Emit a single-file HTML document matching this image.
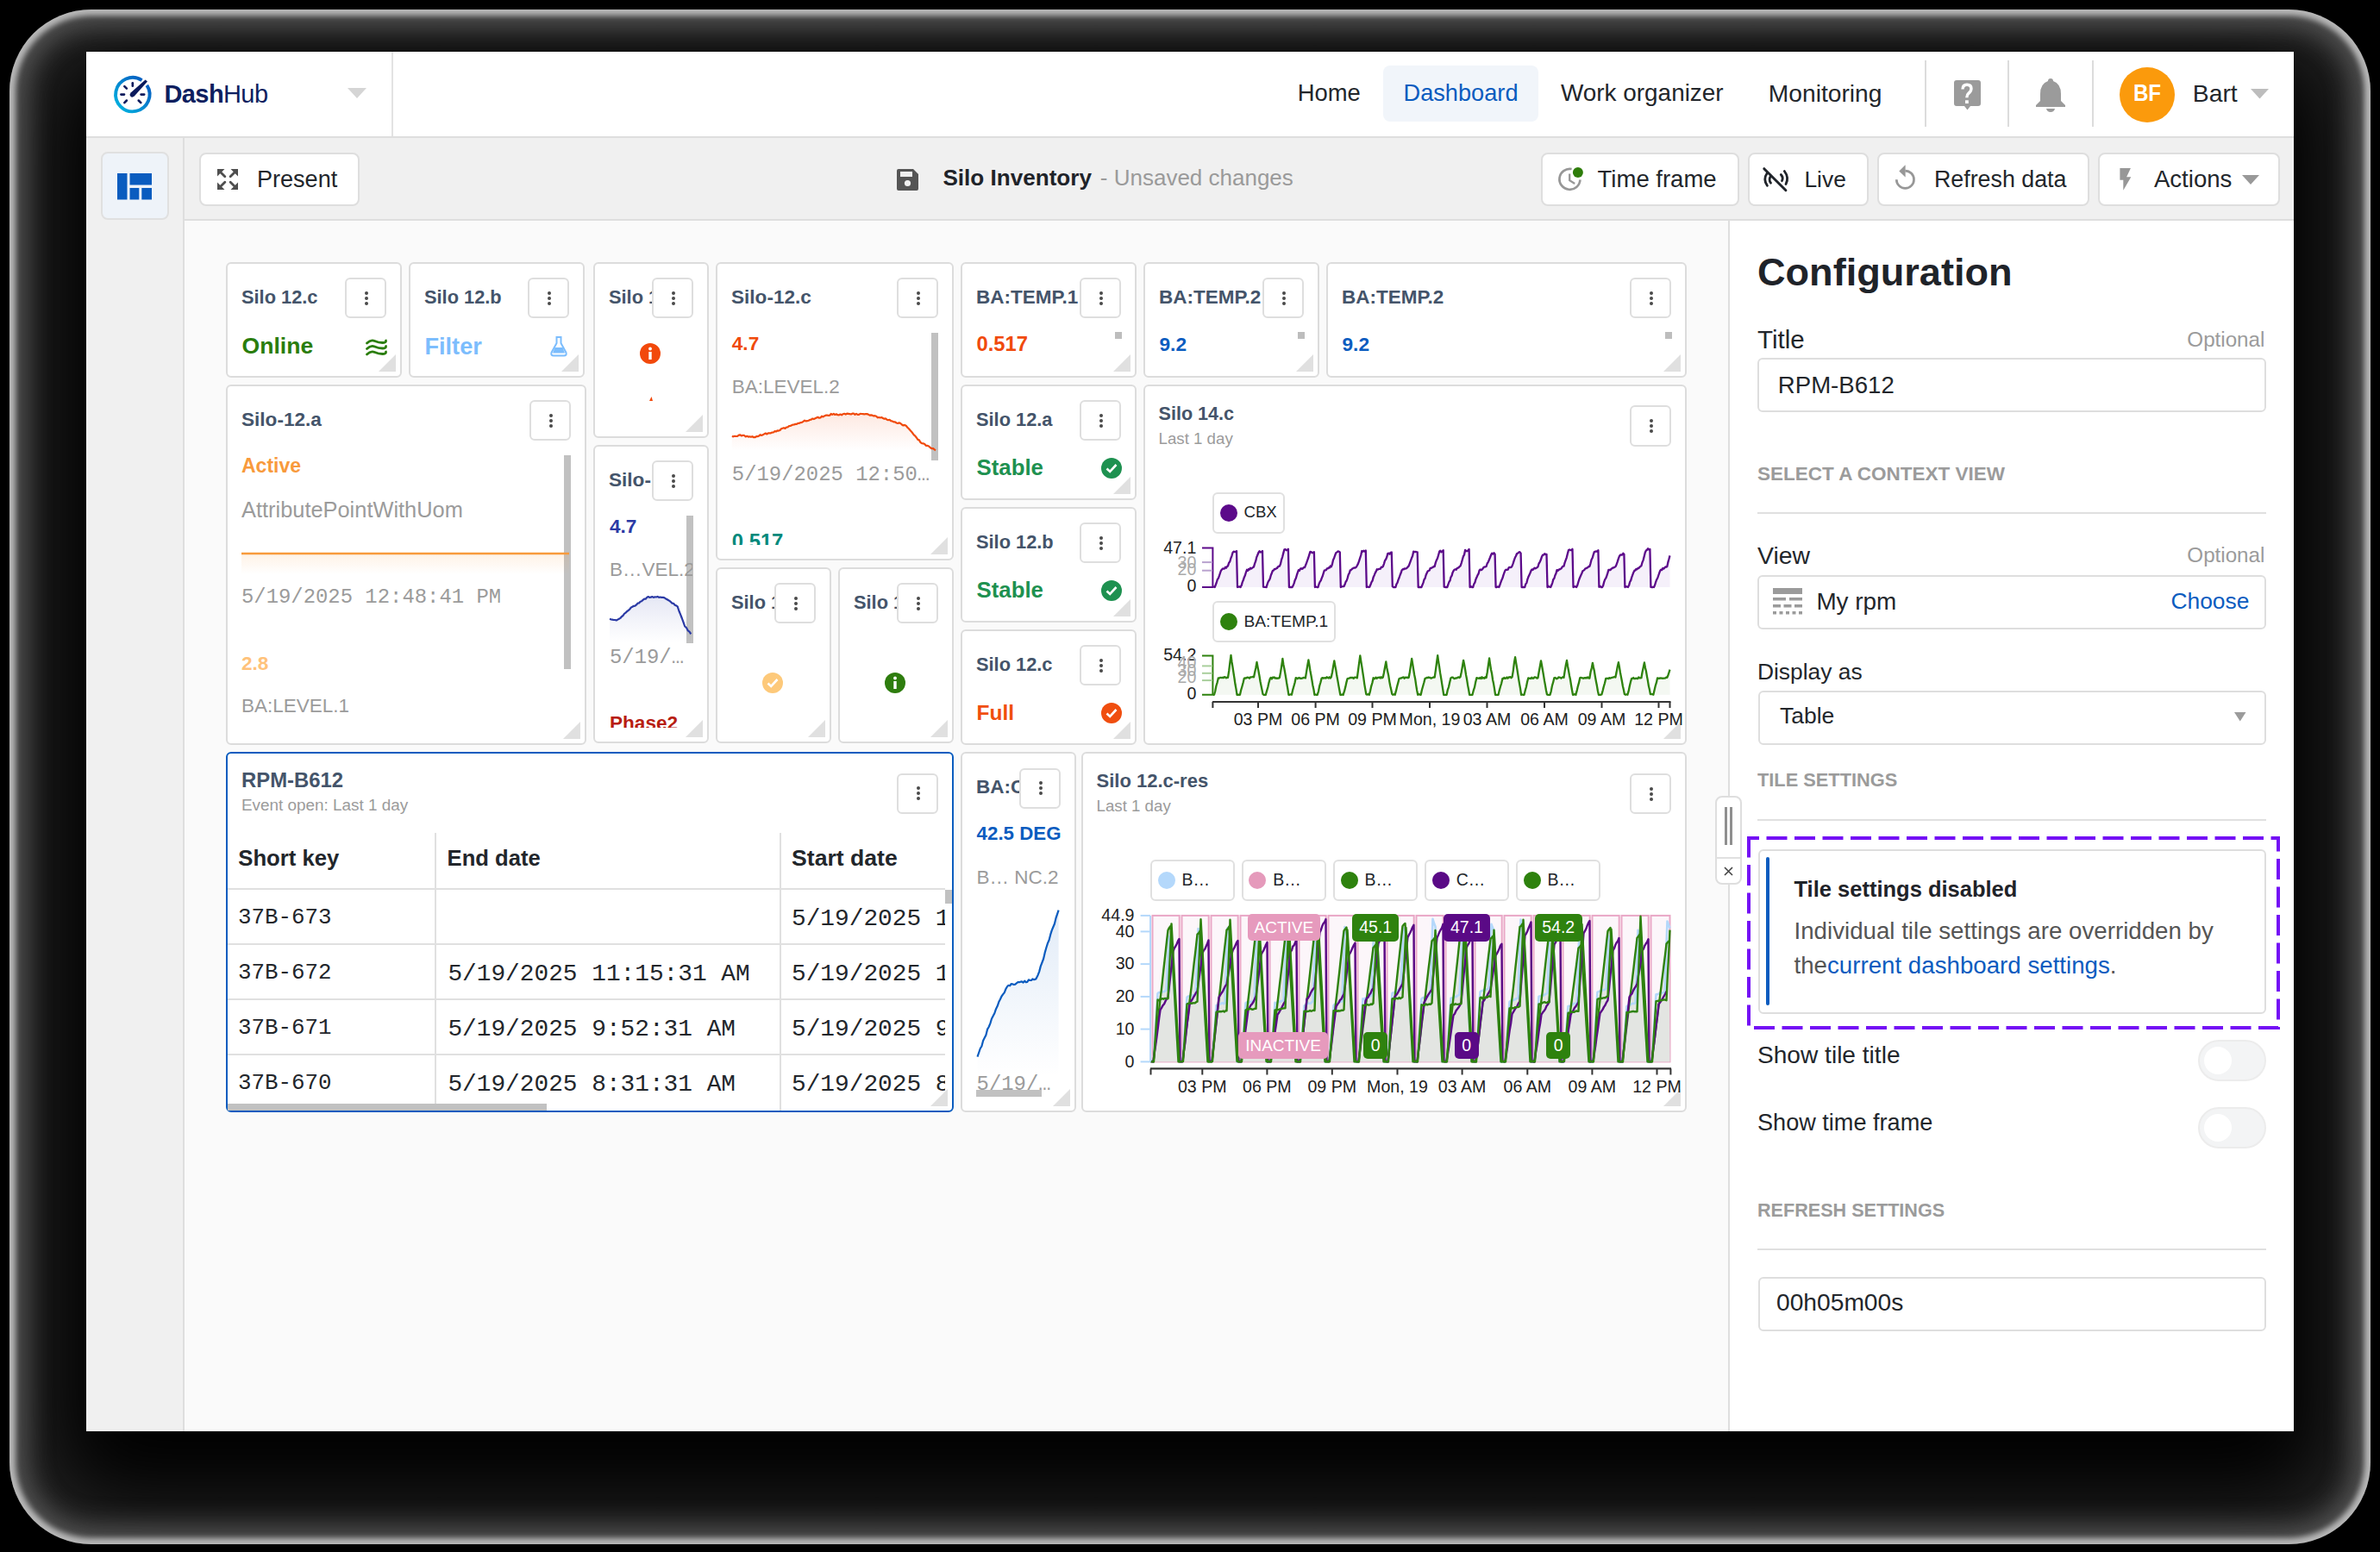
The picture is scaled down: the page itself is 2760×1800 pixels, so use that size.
<!DOCTYPE html><html><head><meta charset="utf-8"><style>
html,body{margin:0;padding:0;}
body{width:2760px;height:1800px;background:#000;position:relative;overflow:hidden;font-family:"Liberation Sans", sans-serif;}
.a{position:absolute;box-sizing:border-box;}
.t{position:absolute;line-height:1;white-space:nowrap;}
svg{overflow:visible}
</style></head><body>

<div class="a" style="left:11px;top:11px;width:2738px;height:1780px;border-radius:95px;background:#000;box-shadow:inset 0 0 6px 7px rgba(210,210,210,0.8), inset 0 0 28px 22px rgba(125,125,125,0.5), inset 0 0 110px 40px rgba(50,50,50,0.85);"></div>
<div class="a" style="left:100.0px;top:60.0px;width:2560.0px;height:1600.0px;background:#fff;"></div>
<div class="a" style="left:100.0px;top:158.0px;width:2560.0px;height:2.0px;background:#dedede;"></div>
<div class="a" style="left:454.0px;top:60.0px;width:2.0px;height:98.0px;background:#e3e3e3;"></div>
<div class="a" style="left:100.0px;top:160.0px;width:2560.0px;height:94.0px;background:#f0f0f0;"></div>
<div class="a" style="left:214.0px;top:254.0px;width:2446.0px;height:2.0px;background:#dedede;"></div>
<div class="a" style="left:100.0px;top:160.0px;width:112.0px;height:1500.0px;background:#f0f0f0;"></div>
<div class="a" style="left:212.0px;top:160.0px;width:2.0px;height:1500.0px;background:#dedede;"></div>
<div class="a" style="left:214.0px;top:256.0px;width:1790.0px;height:1404.0px;background:#fafafa;"></div>
<div class="a" style="left:2004.0px;top:256.0px;width:2.0px;height:1404.0px;background:#dedede;"></div>
<div class="a" style="left:2006.0px;top:256.0px;width:654.0px;height:1404.0px;background:#fff;"></div>
<svg class="a" style="left:0.0px;top:0.0px;pointer-events:none;" width="2760" height="1800" viewBox="0 0 2760 1800"><defs><linearGradient id="lg" x1="0" y1="1" x2="1" y2="0"><stop offset="0" stop-color="#00b8e2"/><stop offset="1" stop-color="#0552bd"/></linearGradient></defs><path d="M164.53,93.08 A19.7,19.7 0 1 0 170.32,98.87" fill="none" stroke="url(#lg)" stroke-width="3.9"/><line x1="153.80" y1="99.80" x2="153.80" y2="96.20" stroke="#0a1a5c" stroke-width="2.6" stroke-linecap="round"/><line x1="146.87" y1="102.67" x2="144.32" y2="100.12" stroke="#0a1a5c" stroke-width="2.6" stroke-linecap="round"/><line x1="144.00" y1="109.60" x2="140.40" y2="109.60" stroke="#0a1a5c" stroke-width="2.6" stroke-linecap="round"/><line x1="146.87" y1="116.53" x2="144.32" y2="119.08" stroke="#0a1a5c" stroke-width="2.6" stroke-linecap="round"/><line x1="160.73" y1="116.53" x2="163.28" y2="119.08" stroke="#0a1a5c" stroke-width="2.6" stroke-linecap="round"/><line x1="163.60" y1="109.60" x2="167.20" y2="109.60" stroke="#0a1a5c" stroke-width="2.6" stroke-linecap="round"/><path d="M151.6,107.6 L168.6,92.4 L171.0,94.6 L155.8,111.6 Q153.2,113.6 151.4,111.8 Q149.8,109.6 151.6,107.6 Z" fill="#0a1a5c"/></svg>
<div class="t" style="top:95.3px;font-size:29px;color:#0d1f5f;font-weight:400;font-family:'Liberation Sans', sans-serif;letter-spacing:-0.6px;left:190.5px;"><b style="font-weight:700">Dash</b>Hub</div>
<svg class="a" style="left:403.0px;top:102.0px;" width="22" height="13" viewBox="0 0 22 13"><path d="M0,0 L22,0 L11,12 Z" fill="#d5d5d5"/></svg>
<div class="a" style="left:1604.0px;top:76.0px;width:180.0px;height:65.0px;background:#f1f5fa;border-radius:8px;"></div>
<div class="t" style="top:94.1px;font-size:27.4px;color:#22262b;font-weight:400;font-family:'Liberation Sans', sans-serif;left:1504.7px;">Home</div>
<div class="t" style="top:94.2px;font-size:27.2px;color:#0b5cbf;font-weight:400;font-family:'Liberation Sans', sans-serif;left:1627.5px;">Dashboard</div>
<div class="t" style="top:93.9px;font-size:27.9px;color:#22262b;font-weight:400;font-family:'Liberation Sans', sans-serif;left:1810.0px;">Work organizer</div>
<div class="t" style="top:93.7px;font-size:28.2px;color:#22262b;font-weight:400;font-family:'Liberation Sans', sans-serif;left:2050.8px;">Monitoring</div>
<div class="a" style="left:2232.0px;top:70.0px;width:2.0px;height:77.0px;background:#dcdcdc;"></div>
<div class="a" style="left:2328.0px;top:70.0px;width:2.0px;height:77.0px;background:#dcdcdc;"></div>
<div class="a" style="left:2426.0px;top:70.0px;width:2.0px;height:77.0px;background:#dcdcdc;"></div>
<svg class="a" style="left:2266.0px;top:93.0px;" width="31" height="36" viewBox="0 0 31 36"><path d="M3,0 H28 Q31,0 31,3 V27 Q31,30 28,30 H19 L15.5,34.5 L12,30 H3 Q0,30 0,27 V3 Q0,0 3,0 Z" fill="#9b9b9b"/><path d="M10,10.6 Q10,5.2 15,5.2 Q20,5.2 20,9.8 Q20,12.8 17,15.2 Q14.8,17 14.8,20.2" fill="none" stroke="#fff" stroke-width="3.4"/><rect x="13" y="23.3" width="3.8" height="3.7" fill="#fff"/></svg>
<svg class="a" style="left:2360.0px;top:88.8px;" width="36" height="41" viewBox="0 0 36 41"><path d="M18,2 Q21,2 21,5 Q30,8 30,20 V28 L35,33 V35 H1 V33 L6,28 V20 Q6,8 15,5 Q15,2 18,2 Z" fill="#9b9b9b"/><path d="M13,37 H23 Q22,41 18,41 Q14,41 13,37 Z" fill="#9b9b9b"/></svg>
<div class="a" style="left:2458.0px;top:78.0px;width:64.0px;height:64.0px;background:#fb9a0c;border-radius:50%;"></div>
<div class="t" style="top:93.6px;font-size:28px;color:#fff;font-weight:700;font-family:'Liberation Sans', sans-serif;left:2190.0px;width:600px;text-align:center;transform:scaleX(0.86);">BF</div>
<div class="t" style="top:93.7px;font-size:28.3px;color:#22262b;font-weight:400;font-family:'Liberation Sans', sans-serif;left:2542.8px;">Bart</div>
<svg class="a" style="left:2610.0px;top:103.0px;" width="21" height="12" viewBox="0 0 21 12"><path d="M0,0 L21,0 L10.5,11.5 Z" fill="#bdbdbd"/></svg>
<div class="a" style="left:117.0px;top:176.0px;width:79.0px;height:79.0px;background:#eef3f9;border:2px solid #e0e0e0;border-radius:8px;"></div>
<svg class="a" style="left:136.0px;top:200.5px;" width="40" height="31" viewBox="0 0 40 31"><rect x="0" y="0" width="11.5" height="30.5" fill="#0a5cbf"/><rect x="14.5" y="0" width="25.5" height="13.5" fill="#0a5cbf"/><rect x="14.5" y="17" width="10.8" height="13.5" fill="#0a5cbf"/><rect x="28.3" y="17" width="11.7" height="13.5" fill="#0a5cbf"/></svg>
<div class="a" style="left:231.0px;top:177.0px;width:186.0px;height:62.0px;background:#fff;border:2px solid #dedede;border-radius:8px;"></div>
<svg class="a" style="left:252.0px;top:196.0px;" width="24" height="24" viewBox="0 0 24 24"><path d="M0,0 H8.5 L0,8.5 Z M24,0 H15.5 L24,8.5 Z M0,24 V15.5 L8.5,24 Z M24,24 V15.5 L15.5,24 Z" fill="#4f4f4f"/><path d="M3,3 L8.8,8.8 M21,3 L15.2,8.8 M3,21 L8.8,15.2 M21,21 L15.2,15.2" stroke="#4f4f4f" stroke-width="2.8" stroke-linecap="round"/></svg>
<div class="t" style="top:194.3px;font-size:27.1px;color:#22262b;font-weight:400;font-family:'Liberation Sans', sans-serif;left:297.9px;">Present</div>
<svg class="a" style="left:1040.0px;top:196.0px;" width="25" height="25" viewBox="0 0 25 25"><path d="M2,0 H19 L25,6 V23 Q25,25 23,25 H2 Q0,25 0,23 V2 Q0,0 2,0 Z" fill="#555"/><rect x="4" y="3" width="14" height="6" fill="#f0f0f0"/><circle cx="12.5" cy="16.5" r="3.6" fill="#f0f0f0"/></svg>
<div class="t" style="top:193.4px;font-size:26.1px;color:#1f2329;font-weight:700;font-family:'Liberation Sans', sans-serif;left:1093.4px;">Silo Inventory</div>
<div class="t" style="top:193.4px;font-size:26.0px;color:#9a9a9a;font-weight:400;font-family:'Liberation Sans', sans-serif;left:1275.8px;">- Unsaved changes</div>
<div class="a" style="left:1787.0px;top:177.0px;width:230.0px;height:62.0px;background:#fff;border:2px solid #dedede;border-radius:8px;"></div>
<svg class="a" style="left:1800.0px;top:185.0px;" width="50" height="45" viewBox="0 0 50 45"><path d="M22.6,11 A12,12 0 1 0 32.4,23.5" fill="none" stroke="#979797" stroke-width="2.7"/><path d="M20.2,16.5 V24.2 L26.2,28" fill="none" stroke="#979797" stroke-width="2.3"/><circle cx="29.9" cy="14.9" r="6" fill="#2e7d0a"/></svg>
<div class="t" style="top:194.3px;font-size:27.5px;color:#22262b;font-weight:400;font-family:'Liberation Sans', sans-serif;left:1852.6px;">Time frame</div>
<div class="a" style="left:2027.0px;top:177.0px;width:140.0px;height:62.0px;background:#fff;border:2px solid #dedede;border-radius:8px;"></div>
<svg class="a" style="left:2040.0px;top:185.0px;" width="50" height="45" viewBox="0 0 50 45"><path d="M9.4,15.5 Q4.2,23 9.4,30.3 M13.5,19 Q10.6,23.7 13.5,27.2 M25.3,17.5 Q28.4,21 26.5,24.7 M29.3,13.5 Q35,21 31,28.6" fill="none" stroke="#1f2329" stroke-width="2.8" stroke-linecap="round"/><line x1="5.8" y1="10.7" x2="30.9" y2="35.7" stroke="#1f2329" stroke-width="3" stroke-linecap="round"/></svg>
<div class="t" style="top:194.9px;font-size:26.4px;color:#22262b;font-weight:400;font-family:'Liberation Sans', sans-serif;left:2092.4px;">Live</div>
<div class="a" style="left:2177.0px;top:177.0px;width:246.0px;height:62.0px;background:#fff;border:2px solid #dedede;border-radius:8px;"></div>
<svg class="a" style="left:2190.0px;top:185.0px;" width="50" height="45" viewBox="0 0 50 45"><path d="M9.3,23.2 A10.1,10.1 0 1 0 19.4,13.1" fill="none" stroke="#979797" stroke-width="2.7"/><path d="M12.3,13.5 L19.6,6.3 L19.6,20.4 Z" fill="#979797"/></svg>
<div class="t" style="top:194.7px;font-size:26.8px;color:#22262b;font-weight:400;font-family:'Liberation Sans', sans-serif;left:2243.0px;">Refresh data</div>
<div class="a" style="left:2433.0px;top:177.0px;width:211.0px;height:62.0px;background:#fff;border:2px solid #dedede;border-radius:8px;"></div>
<svg class="a" style="left:2440.0px;top:185.0px;" width="50" height="45" viewBox="0 0 50 45"><path d="M18.4,10 H30.9 L26.1,20.3 H31.3 L22.3,35.7 V23.8 H18.4 Z" fill="#979797"/></svg>
<div class="t" style="top:194.3px;font-size:27.6px;color:#22262b;font-weight:400;font-family:'Liberation Sans', sans-serif;left:2497.9px;">Actions</div>
<svg class="a" style="left:2600.0px;top:203.0px;" width="20" height="12" viewBox="0 0 20 12"><path d="M0,0 L20,0 L10,11 Z" fill="#999"/></svg>
<div class="a" style="left:262.0px;top:304.0px;width:204.0px;height:134.0px;background:#fff;border:2px solid #dcdcdc;border-radius:6px;"></div>
<div class="t" style="top:334.0px;font-size:21.8px;color:#44546a;font-weight:700;font-family:'Liberation Sans', sans-serif;left:280.0px;">Silo 12.c</div>
<div class="t" style="top:388.3px;font-size:26.6px;color:#2a7d0c;font-weight:700;font-family:'Liberation Sans', sans-serif;left:280.5px;">Online</div>
<svg class="a" style="left:424.0px;top:392.5px;" width="25" height="21" viewBox="0 0 25 21"><path d="M1.5,5 Q6,0.5 10.5,2.5 T19.5,4.5 T23.5,2" fill="none" stroke="#2a7d0c" stroke-width="2.8" stroke-linecap="round"/><path d="M1.5,11.5 Q6,7 10.5,9 T19.5,11 T23.5,8.5" fill="none" stroke="#2a7d0c" stroke-width="2.8" stroke-linecap="round"/><path d="M1.5,18 Q6,13.5 10.5,15.5 T19.5,17.5 T23.5,15" fill="none" stroke="#2a7d0c" stroke-width="2.8" stroke-linecap="round"/></svg>
<div class="a" style="left:400.4px;top:322.2px;width:47.6px;height:47.3px;background:#fff;border:2px solid #dedede;border-radius:6px;"></div>
<svg class="a" style="left:421.8px;top:336.9px;" width="6" height="18" viewBox="0 0 6 18"><circle cx="3" cy="3" r="2" fill="#4a4a4a"/><circle cx="3" cy="9" r="2" fill="#4a4a4a"/><circle cx="3" cy="15" r="2" fill="#4a4a4a"/></svg>
<svg class="a" style="left:439.0px;top:411.0px;" width="20" height="20" viewBox="0 0 20 20"><path d="M20,0 L20,20 L0,20 Z" fill="#e0e0e0"/></svg>
<div class="a" style="left:474.0px;top:304.0px;width:204.0px;height:134.0px;background:#fff;border:2px solid #dcdcdc;border-radius:6px;"></div>
<div class="t" style="top:334.0px;font-size:21.8px;color:#44546a;font-weight:700;font-family:'Liberation Sans', sans-serif;left:492.0px;">Silo 12.b</div>
<div class="t" style="top:388.0px;font-size:27.1px;color:#7cbdfd;font-weight:700;font-family:'Liberation Sans', sans-serif;left:492.5px;">Filter</div>
<svg class="a" style="left:638.0px;top:389.5px;" width="20" height="24" viewBox="0 0 20 24"><path d="M6.5,1 H13.5 M7.5,1.5 V8 L1.5,19 Q0.5,22.5 4,22.5 H16 Q19.5,22.5 18.5,19 L12.5,8 V1.5" fill="none" stroke="#7cbdfd" stroke-width="2"/><path d="M5.5,13 H14.5 L17,19.5 H3 Z" fill="#7cbdfd"/></svg>
<div class="a" style="left:612.4px;top:322.2px;width:47.6px;height:47.3px;background:#fff;border:2px solid #dedede;border-radius:6px;"></div>
<svg class="a" style="left:633.8px;top:336.9px;" width="6" height="18" viewBox="0 0 6 18"><circle cx="3" cy="3" r="2" fill="#4a4a4a"/><circle cx="3" cy="9" r="2" fill="#4a4a4a"/><circle cx="3" cy="15" r="2" fill="#4a4a4a"/></svg>
<svg class="a" style="left:651.0px;top:411.0px;" width="20" height="20" viewBox="0 0 20 20"><path d="M20,0 L20,20 L0,20 Z" fill="#e0e0e0"/></svg>
<div class="a" style="left:688.0px;top:304.0px;width:134.0px;height:204.0px;background:#fff;border:2px solid #dcdcdc;border-radius:6px;"></div>
<div class="t" style="top:334.0px;font-size:21.8px;color:#44546a;font-weight:700;font-family:'Liberation Sans', sans-serif;left:706.0px;">Silo 12.c</div>
<div class="a" style="left:756.4px;top:322.2px;width:47.6px;height:47.3px;background:#fff;border:2px solid #dedede;border-radius:6px;"></div>
<svg class="a" style="left:777.8px;top:336.9px;" width="6" height="18" viewBox="0 0 6 18"><circle cx="3" cy="3" r="2" fill="#4a4a4a"/><circle cx="3" cy="9" r="2" fill="#4a4a4a"/><circle cx="3" cy="15" r="2" fill="#4a4a4a"/></svg>
<svg class="a" style="left:741.9px;top:397.9px;" width="24" height="24" viewBox="0 0 24 24"><circle cx="12" cy="12" r="12" fill="#f2490b"/><circle cx="12" cy="6.5" r="1.9" fill="#fff"/><rect x="10.3" y="10" width="3.4" height="9" fill="#fff"/></svg>
<svg class="a" style="left:753.0px;top:460.0px;" width="4" height="5" viewBox="0 0 4 5"><path d="M0,5 L2.5,0 L4,5 Z" fill="#f2490b"/></svg>
<svg class="a" style="left:795.0px;top:481.0px;" width="20" height="20" viewBox="0 0 20 20"><path d="M20,0 L20,20 L0,20 Z" fill="#e0e0e0"/></svg>
<div class="a" style="left:830.0px;top:304.0px;width:276.0px;height:346.0px;background:#fff;border:2px solid #dcdcdc;border-radius:6px;"></div>
<div class="t" style="top:333.6px;font-size:22.6px;color:#44546a;font-weight:700;font-family:'Liberation Sans', sans-serif;left:848.0px;">Silo-12.c</div>
<div class="t" style="top:387.8px;font-size:22.6px;color:#f04a0c;font-weight:700;font-family:'Liberation Sans', sans-serif;left:848.8px;">4.7</div>
<div class="t" style="top:438.4px;font-size:22.5px;color:#9b9b9b;font-weight:400;font-family:'Liberation Sans', sans-serif;left:848.8px;">BA:LEVEL.2</div>
<div class="a" style="left:1080.0px;top:386.0px;width:8.0px;height:148.0px;background:#c1c1c1;"></div>
<svg class="a" style="left:0.0px;top:0.0px;pointer-events:none;" width="2760" height="1800" viewBox="0 0 2760 1800"><defs><linearGradient id="s1" x1="0" y1="0" x2="0" y2="1"><stop offset="0" stop-color="#f04a0c" stop-opacity="0.12"/><stop offset="1" stop-color="#f04a0c" stop-opacity="0.0"/></linearGradient></defs><path d="M848.8,506.0 L850.4,506.3 L852.0,505.8 L853.6,506.0 L855.2,505.8 L856.8,504.7 L858.4,504.4 L860.0,505.5 L861.6,504.8 L863.1,505.0 L864.7,506.5 L866.2,505.8 L867.8,506.6 L869.3,506.3 L870.9,506.8 L872.4,506.2 L874.0,507.2 L875.5,507.2 L877.1,506.2 L878.6,506.2 L880.1,505.6 L881.6,504.2 L883.2,504.9 L884.7,504.3 L886.2,503.4 L887.8,502.5 L889.3,503.5 L890.8,502.4 L892.4,502.4 L893.9,502.3 L895.4,501.6 L896.9,501.5 L898.5,500.2 L900.0,500.5 L901.5,499.4 L903.0,499.6 L904.5,499.0 L906.0,497.2 L907.5,496.7 L909.0,496.2 L910.5,496.9 L912.0,495.5 L913.5,495.3 L915.0,494.2 L916.5,494.0 L918.0,493.2 L919.5,492.6 L921.0,492.4 L922.5,491.9 L924.0,491.8 L925.5,490.9 L927.0,490.8 L928.5,490.1 L930.0,489.8 L931.5,488.9 L933.1,487.7 L934.6,488.4 L936.1,488.2 L937.7,487.8 L939.2,486.8 L940.7,486.7 L942.3,485.5 L943.8,486.1 L945.3,485.3 L946.9,484.5 L948.4,483.8 L949.9,484.7 L951.4,484.5 L953.0,482.7 L954.5,483.4 L956.0,482.4 L957.6,481.7 L959.1,481.5 L960.6,481.9 L962.2,481.7 L963.7,480.0 L965.2,480.9 L966.8,479.9 L968.3,481.0 L969.9,480.3 L971.4,481.2 L973.0,481.3 L974.5,480.5 L976.1,481.3 L977.6,480.2 L979.1,479.8 L980.7,480.6 L982.2,479.6 L983.8,479.9 L985.3,480.2 L986.9,480.5 L988.4,479.7 L990.0,479.5 L991.5,480.8 L993.0,479.9 L994.6,480.9 L996.1,480.8 L997.7,479.9 L999.2,480.0 L1000.8,480.1 L1002.3,480.3 L1003.9,480.2 L1005.4,480.1 L1006.9,480.6 L1008.5,481.6 L1010.0,481.3 L1011.5,481.6 L1013.1,482.5 L1014.6,482.2 L1016.2,482.7 L1017.7,484.3 L1019.2,484.0 L1020.8,484.5 L1022.3,484.0 L1023.9,485.1 L1025.4,485.8 L1026.9,485.4 L1028.5,486.7 L1030.0,487.2 L1031.6,486.8 L1033.2,488.2 L1034.8,488.5 L1036.4,489.4 L1038.0,489.4 L1039.6,490.5 L1041.1,491.0 L1042.7,490.4 L1044.3,491.0 L1045.9,492.5 L1047.5,493.5 L1049.1,492.9 L1050.7,493.7 L1052.2,495.7 L1053.7,497.0 L1055.3,498.8 L1056.8,500.4 L1058.3,502.3 L1059.8,504.4 L1061.3,505.6 L1062.8,507.5 L1064.4,509.9 L1065.9,510.4 L1067.4,513.0 L1069.0,514.1 L1070.6,514.3 L1072.2,515.0 L1073.8,516.8 L1075.4,516.8 L1077.0,517.5 L1078.6,518.8 L1080.2,520.1 L1081.8,520.0 L1083.4,521.2 L1085.0,522.3 L1085.0,523.0 L848.8,523.0 Z" fill="url(#s1)" stroke="none"/><path d="M848.8,506.0 L850.4,506.3 L852.0,505.8 L853.6,506.0 L855.2,505.8 L856.8,504.7 L858.4,504.4 L860.0,505.5 L861.6,504.8 L863.1,505.0 L864.7,506.5 L866.2,505.8 L867.8,506.6 L869.3,506.3 L870.9,506.8 L872.4,506.2 L874.0,507.2 L875.5,507.2 L877.1,506.2 L878.6,506.2 L880.1,505.6 L881.6,504.2 L883.2,504.9 L884.7,504.3 L886.2,503.4 L887.8,502.5 L889.3,503.5 L890.8,502.4 L892.4,502.4 L893.9,502.3 L895.4,501.6 L896.9,501.5 L898.5,500.2 L900.0,500.5 L901.5,499.4 L903.0,499.6 L904.5,499.0 L906.0,497.2 L907.5,496.7 L909.0,496.2 L910.5,496.9 L912.0,495.5 L913.5,495.3 L915.0,494.2 L916.5,494.0 L918.0,493.2 L919.5,492.6 L921.0,492.4 L922.5,491.9 L924.0,491.8 L925.5,490.9 L927.0,490.8 L928.5,490.1 L930.0,489.8 L931.5,488.9 L933.1,487.7 L934.6,488.4 L936.1,488.2 L937.7,487.8 L939.2,486.8 L940.7,486.7 L942.3,485.5 L943.8,486.1 L945.3,485.3 L946.9,484.5 L948.4,483.8 L949.9,484.7 L951.4,484.5 L953.0,482.7 L954.5,483.4 L956.0,482.4 L957.6,481.7 L959.1,481.5 L960.6,481.9 L962.2,481.7 L963.7,480.0 L965.2,480.9 L966.8,479.9 L968.3,481.0 L969.9,480.3 L971.4,481.2 L973.0,481.3 L974.5,480.5 L976.1,481.3 L977.6,480.2 L979.1,479.8 L980.7,480.6 L982.2,479.6 L983.8,479.9 L985.3,480.2 L986.9,480.5 L988.4,479.7 L990.0,479.5 L991.5,480.8 L993.0,479.9 L994.6,480.9 L996.1,480.8 L997.7,479.9 L999.2,480.0 L1000.8,480.1 L1002.3,480.3 L1003.9,480.2 L1005.4,480.1 L1006.9,480.6 L1008.5,481.6 L1010.0,481.3 L1011.5,481.6 L1013.1,482.5 L1014.6,482.2 L1016.2,482.7 L1017.7,484.3 L1019.2,484.0 L1020.8,484.5 L1022.3,484.0 L1023.9,485.1 L1025.4,485.8 L1026.9,485.4 L1028.5,486.7 L1030.0,487.2 L1031.6,486.8 L1033.2,488.2 L1034.8,488.5 L1036.4,489.4 L1038.0,489.4 L1039.6,490.5 L1041.1,491.0 L1042.7,490.4 L1044.3,491.0 L1045.9,492.5 L1047.5,493.5 L1049.1,492.9 L1050.7,493.7 L1052.2,495.7 L1053.7,497.0 L1055.3,498.8 L1056.8,500.4 L1058.3,502.3 L1059.8,504.4 L1061.3,505.6 L1062.8,507.5 L1064.4,509.9 L1065.9,510.4 L1067.4,513.0 L1069.0,514.1 L1070.6,514.3 L1072.2,515.0 L1073.8,516.8 L1075.4,516.8 L1077.0,517.5 L1078.6,518.8 L1080.2,520.1 L1081.8,520.0 L1083.4,521.2 L1085.0,522.3" fill="none" stroke="#f04a0c" stroke-width="2.2" stroke-linejoin="round"/></svg>
<div class="t" style="top:539.4px;font-size:23.9px;color:#9b9b9b;font-weight:400;font-family:'Liberation Mono', monospace;left:848.8px;">5/19/2025 12:50…</div>
<div class="a" style="left:840px;top:600px;width:240px;height:31.5px;overflow:hidden;">
<div class="t" style="left:8.8px;top:15.5px;font-size:23.8px;color:#00897b;font-weight:700;">0.517</div>
</div>
<div class="a" style="left:1040.4px;top:322.2px;width:47.6px;height:47.3px;background:#fff;border:2px solid #dedede;border-radius:6px;"></div>
<svg class="a" style="left:1061.8px;top:336.9px;" width="6" height="18" viewBox="0 0 6 18"><circle cx="3" cy="3" r="2" fill="#4a4a4a"/><circle cx="3" cy="9" r="2" fill="#4a4a4a"/><circle cx="3" cy="15" r="2" fill="#4a4a4a"/></svg>
<svg class="a" style="left:1079.0px;top:623.0px;" width="20" height="20" viewBox="0 0 20 20"><path d="M20,0 L20,20 L0,20 Z" fill="#e0e0e0"/></svg>
<div class="a" style="left:1114.0px;top:304.0px;width:204.0px;height:134.0px;background:#fff;border:2px solid #dcdcdc;border-radius:6px;"></div>
<div class="t" style="top:333.7px;font-size:22.5px;color:#44546a;font-weight:700;font-family:'Liberation Sans', sans-serif;left:1132.0px;">BA:TEMP.1</div>
<div class="t" style="top:387.0px;font-size:23.8px;color:#f04a0c;font-weight:700;font-family:'Liberation Sans', sans-serif;left:1132.5px;">0.517</div>
<div class="a" style="left:1293.0px;top:385.0px;width:8.0px;height:8.0px;background:#bdbdbd;"></div>
<div class="a" style="left:1252.4px;top:322.2px;width:47.6px;height:47.3px;background:#fff;border:2px solid #dedede;border-radius:6px;"></div>
<svg class="a" style="left:1273.8px;top:336.9px;" width="6" height="18" viewBox="0 0 6 18"><circle cx="3" cy="3" r="2" fill="#4a4a4a"/><circle cx="3" cy="9" r="2" fill="#4a4a4a"/><circle cx="3" cy="15" r="2" fill="#4a4a4a"/></svg>
<svg class="a" style="left:1291.0px;top:411.0px;" width="20" height="20" viewBox="0 0 20 20"><path d="M20,0 L20,20 L0,20 Z" fill="#e0e0e0"/></svg>
<div class="a" style="left:1326.0px;top:304.0px;width:204.0px;height:134.0px;background:#fff;border:2px solid #dcdcdc;border-radius:6px;"></div>
<div class="t" style="top:333.7px;font-size:22.5px;color:#44546a;font-weight:700;font-family:'Liberation Sans', sans-serif;left:1344.0px;">BA:TEMP.2</div>
<div class="t" style="top:387.6px;font-size:22.7px;color:#0b5cbf;font-weight:700;font-family:'Liberation Sans', sans-serif;left:1344.5px;">9.2</div>
<div class="a" style="left:1505.0px;top:385.0px;width:8.0px;height:8.0px;background:#bdbdbd;"></div>
<div class="a" style="left:1464.4px;top:322.2px;width:47.6px;height:47.3px;background:#fff;border:2px solid #dedede;border-radius:6px;"></div>
<svg class="a" style="left:1485.8px;top:336.9px;" width="6" height="18" viewBox="0 0 6 18"><circle cx="3" cy="3" r="2" fill="#4a4a4a"/><circle cx="3" cy="9" r="2" fill="#4a4a4a"/><circle cx="3" cy="15" r="2" fill="#4a4a4a"/></svg>
<svg class="a" style="left:1503.0px;top:411.0px;" width="20" height="20" viewBox="0 0 20 20"><path d="M20,0 L20,20 L0,20 Z" fill="#e0e0e0"/></svg>
<div class="a" style="left:1538.0px;top:304.0px;width:418.0px;height:134.0px;background:#fff;border:2px solid #dcdcdc;border-radius:6px;"></div>
<div class="t" style="top:333.7px;font-size:22.5px;color:#44546a;font-weight:700;font-family:'Liberation Sans', sans-serif;left:1556.0px;">BA:TEMP.2</div>
<div class="t" style="top:387.6px;font-size:22.7px;color:#0b5cbf;font-weight:700;font-family:'Liberation Sans', sans-serif;left:1556.5px;">9.2</div>
<div class="a" style="left:1931.0px;top:385.0px;width:8.0px;height:8.0px;background:#bdbdbd;"></div>
<div class="a" style="left:1890.4px;top:322.2px;width:47.6px;height:47.3px;background:#fff;border:2px solid #dedede;border-radius:6px;"></div>
<svg class="a" style="left:1911.8px;top:336.9px;" width="6" height="18" viewBox="0 0 6 18"><circle cx="3" cy="3" r="2" fill="#4a4a4a"/><circle cx="3" cy="9" r="2" fill="#4a4a4a"/><circle cx="3" cy="15" r="2" fill="#4a4a4a"/></svg>
<svg class="a" style="left:1929.0px;top:411.0px;" width="20" height="20" viewBox="0 0 20 20"><path d="M20,0 L20,20 L0,20 Z" fill="#e0e0e0"/></svg>
<div class="a" style="left:262.0px;top:446.0px;width:418.0px;height:418.0px;background:#fff;border:2px solid #dcdcdc;border-radius:6px;"></div>
<div class="t" style="top:475.6px;font-size:22.6px;color:#44546a;font-weight:700;font-family:'Liberation Sans', sans-serif;left:280.0px;">Silo-12.a</div>
<div class="a" style="left:654.0px;top:528.0px;width:8.0px;height:248.0px;background:#c1c1c1;"></div>
<div class="t" style="top:529.4px;font-size:23.0px;color:#f89a3c;font-weight:700;font-family:'Liberation Sans', sans-serif;left:280.0px;">Active</div>
<div class="t" style="top:578.7px;font-size:25.4px;color:#9b9b9b;font-weight:400;font-family:'Liberation Sans', sans-serif;left:280.0px;">AttributePointWithUom</div>
<svg class="a" style="left:0.0px;top:0.0px;pointer-events:none;" width="2760" height="1800" viewBox="0 0 2760 1800"><defs><linearGradient id="ag" x1="0" y1="0" x2="0" y2="1"><stop offset="0" stop-color="#f89a3c" stop-opacity="0.13"/><stop offset="1" stop-color="#f89a3c" stop-opacity="0"/></linearGradient></defs><rect x="280" y="642" width="380" height="24" fill="url(#ag)"/><line x1="280" y1="642" x2="660" y2="642" stroke="#f89a3c" stroke-width="2.4"/></svg>
<div class="t" style="top:681.1px;font-size:23.9px;color:#9b9b9b;font-weight:400;font-family:'Liberation Mono', monospace;left:280.0px;">5/19/2025 12:48:41 PM</div>
<div class="t" style="top:758.5px;font-size:22.6px;color:#ffc27a;font-weight:700;font-family:'Liberation Sans', sans-serif;left:280.0px;">2.8</div>
<div class="t" style="top:807.9px;font-size:22.5px;color:#9b9b9b;font-weight:400;font-family:'Liberation Sans', sans-serif;left:280.0px;">BA:LEVEL.1</div>
<div class="a" style="left:614.4px;top:464.2px;width:47.6px;height:47.3px;background:#fff;border:2px solid #dedede;border-radius:6px;"></div>
<svg class="a" style="left:635.8px;top:478.9px;" width="6" height="18" viewBox="0 0 6 18"><circle cx="3" cy="3" r="2" fill="#4a4a4a"/><circle cx="3" cy="9" r="2" fill="#4a4a4a"/><circle cx="3" cy="15" r="2" fill="#4a4a4a"/></svg>
<svg class="a" style="left:653.0px;top:837.0px;" width="20" height="20" viewBox="0 0 20 20"><path d="M20,0 L20,20 L0,20 Z" fill="#e0e0e0"/></svg>
<div class="a" style="left:688.0px;top:516.0px;width:134.0px;height:346.0px;background:#fff;border:2px solid #dcdcdc;border-radius:6px;"></div>
<div class="t" style="top:545.6px;font-size:22.6px;color:#44546a;font-weight:700;font-family:'Liberation Sans', sans-serif;left:706.0px;">Silo-12.b</div>
<div class="a" style="left:795.6px;top:598.0px;width:8.0px;height:147.5px;background:#c1c1c1;"></div>
<div class="t" style="top:600.1px;font-size:22.6px;color:#2b3aa5;font-weight:700;font-family:'Liberation Sans', sans-serif;left:707.0px;">4.7</div>
<div class="t" style="top:650.2px;font-size:22.5px;color:#9b9b9b;font-weight:400;font-family:'Liberation Sans', sans-serif;left:707.0px;width:96px;overflow:hidden;white-space:nowrap;">B…VEL.2</div>
<svg class="a" style="left:0.0px;top:0.0px;pointer-events:none;" width="2760" height="1800" viewBox="0 0 2760 1800"><defs><linearGradient id="s2" x1="0" y1="0" x2="0" y2="1"><stop offset="0" stop-color="#2b3aa5" stop-opacity="0.12"/><stop offset="1" stop-color="#2b3aa5" stop-opacity="0.0"/></linearGradient></defs><path d="M707.0,717.9 L708.5,718.3 L710.1,718.6 L711.6,719.0 L713.2,719.0 L714.8,719.5 L716.3,718.6 L717.9,717.7 L719.4,716.9 L721.0,715.1 L722.5,714.0 L724.1,711.6 L725.7,710.6 L727.2,709.0 L728.8,707.9 L730.3,706.5 L731.9,704.4 L733.4,703.7 L734.9,702.8 L736.5,702.6 L738.0,701.4 L739.5,699.7 L741.0,699.5 L742.6,697.7 L744.1,697.3 L745.6,695.8 L747.1,694.6 L748.7,694.7 L750.2,692.9 L751.7,692.0 L753.2,692.9 L754.8,692.7 L756.3,692.0 L757.9,692.9 L759.4,692.3 L761.0,692.5 L762.5,691.9 L764.1,692.8 L765.6,692.5 L767.2,692.9 L768.7,692.8 L770.2,693.1 L771.8,694.2 L773.3,695.0 L774.9,696.0 L776.4,696.9 L778.0,698.2 L779.5,699.6 L781.1,699.9 L782.6,701.8 L784.2,702.4 L785.7,703.4 L787.4,708.5 L789.1,712.7 L790.8,717.0 L792.5,721.7 L794.2,726.5 L796.0,728.0 L797.8,731.4 L799.5,732.6 L801.3,735.4 L801.3,745.0 L707.0,745.0 Z" fill="url(#s2)" stroke="none"/><path d="M707.0,717.9 L708.5,718.3 L710.1,718.6 L711.6,719.0 L713.2,719.0 L714.8,719.5 L716.3,718.6 L717.9,717.7 L719.4,716.9 L721.0,715.1 L722.5,714.0 L724.1,711.6 L725.7,710.6 L727.2,709.0 L728.8,707.9 L730.3,706.5 L731.9,704.4 L733.4,703.7 L734.9,702.8 L736.5,702.6 L738.0,701.4 L739.5,699.7 L741.0,699.5 L742.6,697.7 L744.1,697.3 L745.6,695.8 L747.1,694.6 L748.7,694.7 L750.2,692.9 L751.7,692.0 L753.2,692.9 L754.8,692.7 L756.3,692.0 L757.9,692.9 L759.4,692.3 L761.0,692.5 L762.5,691.9 L764.1,692.8 L765.6,692.5 L767.2,692.9 L768.7,692.8 L770.2,693.1 L771.8,694.2 L773.3,695.0 L774.9,696.0 L776.4,696.9 L778.0,698.2 L779.5,699.6 L781.1,699.9 L782.6,701.8 L784.2,702.4 L785.7,703.4 L787.4,708.5 L789.1,712.7 L790.8,717.0 L792.5,721.7 L794.2,726.5 L796.0,728.0 L797.8,731.4 L799.5,732.6 L801.3,735.4" fill="none" stroke="#2b3aa5" stroke-width="2.2" stroke-linejoin="round"/></svg>
<div class="t" style="top:751.1px;font-size:23.9px;color:#9b9b9b;font-weight:400;font-family:'Liberation Mono', monospace;left:707.0px;">5/19/…</div>
<div class="a" style="left:700px;top:820px;width:100px;height:24px;overflow:hidden;">
<div class="t" style="left:7px;top:7.9px;font-size:22.6px;color:#b81d12;font-weight:700;">Phase2</div>
</div>
<div class="a" style="left:756.4px;top:534.2px;width:47.6px;height:47.3px;background:#fff;border:2px solid #dedede;border-radius:6px;"></div>
<svg class="a" style="left:777.8px;top:548.9px;" width="6" height="18" viewBox="0 0 6 18"><circle cx="3" cy="3" r="2" fill="#4a4a4a"/><circle cx="3" cy="9" r="2" fill="#4a4a4a"/><circle cx="3" cy="15" r="2" fill="#4a4a4a"/></svg>
<svg class="a" style="left:795.0px;top:835.0px;" width="20" height="20" viewBox="0 0 20 20"><path d="M20,0 L20,20 L0,20 Z" fill="#e0e0e0"/></svg>
<div class="a" style="left:830.0px;top:658.0px;width:134.0px;height:204.0px;background:#fff;border:2px solid #dcdcdc;border-radius:6px;"></div>
<div class="t" style="top:688.0px;font-size:21.8px;color:#44546a;font-weight:700;font-family:'Liberation Sans', sans-serif;left:848.0px;">Silo 12.a</div>
<div class="a" style="left:898.4px;top:676.2px;width:47.6px;height:47.3px;background:#fff;border:2px solid #dedede;border-radius:6px;"></div>
<svg class="a" style="left:919.8px;top:690.9px;" width="6" height="18" viewBox="0 0 6 18"><circle cx="3" cy="3" r="2" fill="#4a4a4a"/><circle cx="3" cy="9" r="2" fill="#4a4a4a"/><circle cx="3" cy="15" r="2" fill="#4a4a4a"/></svg>
<svg class="a" style="left:884.0px;top:780.0px;" width="24" height="24" viewBox="0 0 24 24"><circle cx="12" cy="12" r="12" fill="#fdc97a"/><path d="M6.5,12.5 L10.2,16 L17.5,8" fill="none" stroke="#fff" stroke-width="2.6"/></svg>
<svg class="a" style="left:937.0px;top:835.0px;" width="20" height="20" viewBox="0 0 20 20"><path d="M20,0 L20,20 L0,20 Z" fill="#e0e0e0"/></svg>
<div class="a" style="left:972.0px;top:658.0px;width:134.0px;height:204.0px;background:#fff;border:2px solid #dcdcdc;border-radius:6px;"></div>
<div class="t" style="top:688.0px;font-size:21.8px;color:#44546a;font-weight:700;font-family:'Liberation Sans', sans-serif;left:990.0px;">Silo 12.b</div>
<div class="a" style="left:1040.4px;top:676.2px;width:47.6px;height:47.3px;background:#fff;border:2px solid #dedede;border-radius:6px;"></div>
<svg class="a" style="left:1061.8px;top:690.9px;" width="6" height="18" viewBox="0 0 6 18"><circle cx="3" cy="3" r="2" fill="#4a4a4a"/><circle cx="3" cy="9" r="2" fill="#4a4a4a"/><circle cx="3" cy="15" r="2" fill="#4a4a4a"/></svg>
<svg class="a" style="left:1026.0px;top:780.0px;" width="24" height="24" viewBox="0 0 24 24"><circle cx="12" cy="12" r="12" fill="#2e7d0e"/><circle cx="12" cy="6.5" r="1.9" fill="#fff"/><rect x="10.3" y="10" width="3.4" height="9" fill="#fff"/></svg>
<svg class="a" style="left:1079.0px;top:835.0px;" width="20" height="20" viewBox="0 0 20 20"><path d="M20,0 L20,20 L0,20 Z" fill="#e0e0e0"/></svg>
<div class="a" style="left:1114.0px;top:446.0px;width:204.0px;height:134.0px;background:#fff;border:2px solid #dcdcdc;border-radius:6px;"></div>
<div class="t" style="top:476.0px;font-size:21.8px;color:#44546a;font-weight:700;font-family:'Liberation Sans', sans-serif;left:1132.0px;">Silo 12.a</div>
<div class="t" style="top:530.4px;font-size:25.8px;color:#1e9150;font-weight:700;font-family:'Liberation Sans', sans-serif;left:1132.5px;">Stable</div>
<svg class="a" style="left:1277.0px;top:531.0px;" width="24" height="24" viewBox="0 0 24 24"><circle cx="12" cy="12" r="12" fill="#1e9150"/><path d="M6.5,12.5 L10.2,16 L17.5,8" fill="none" stroke="#fff" stroke-width="2.6"/></svg>
<div class="a" style="left:1252.4px;top:464.2px;width:47.6px;height:47.3px;background:#fff;border:2px solid #dedede;border-radius:6px;"></div>
<svg class="a" style="left:1273.8px;top:478.9px;" width="6" height="18" viewBox="0 0 6 18"><circle cx="3" cy="3" r="2" fill="#4a4a4a"/><circle cx="3" cy="9" r="2" fill="#4a4a4a"/><circle cx="3" cy="15" r="2" fill="#4a4a4a"/></svg>
<svg class="a" style="left:1291.0px;top:553.0px;" width="20" height="20" viewBox="0 0 20 20"><path d="M20,0 L20,20 L0,20 Z" fill="#e0e0e0"/></svg>
<div class="a" style="left:1114.0px;top:588.0px;width:204.0px;height:134.0px;background:#fff;border:2px solid #dcdcdc;border-radius:6px;"></div>
<div class="t" style="top:618.0px;font-size:21.8px;color:#44546a;font-weight:700;font-family:'Liberation Sans', sans-serif;left:1132.0px;">Silo 12.b</div>
<div class="t" style="top:672.4px;font-size:25.8px;color:#1e9150;font-weight:700;font-family:'Liberation Sans', sans-serif;left:1132.5px;">Stable</div>
<svg class="a" style="left:1277.0px;top:673.0px;" width="24" height="24" viewBox="0 0 24 24"><circle cx="12" cy="12" r="12" fill="#1e9150"/><path d="M6.5,12.5 L10.2,16 L17.5,8" fill="none" stroke="#fff" stroke-width="2.6"/></svg>
<div class="a" style="left:1252.4px;top:606.2px;width:47.6px;height:47.3px;background:#fff;border:2px solid #dedede;border-radius:6px;"></div>
<svg class="a" style="left:1273.8px;top:620.9px;" width="6" height="18" viewBox="0 0 6 18"><circle cx="3" cy="3" r="2" fill="#4a4a4a"/><circle cx="3" cy="9" r="2" fill="#4a4a4a"/><circle cx="3" cy="15" r="2" fill="#4a4a4a"/></svg>
<svg class="a" style="left:1291.0px;top:695.0px;" width="20" height="20" viewBox="0 0 20 20"><path d="M20,0 L20,20 L0,20 Z" fill="#e0e0e0"/></svg>
<div class="a" style="left:1114.0px;top:730.0px;width:204.0px;height:134.0px;background:#fff;border:2px solid #dcdcdc;border-radius:6px;"></div>
<div class="t" style="top:760.0px;font-size:21.8px;color:#44546a;font-weight:700;font-family:'Liberation Sans', sans-serif;left:1132.0px;">Silo 12.c</div>
<div class="t" style="top:815.1px;font-size:24.5px;color:#f04e0f;font-weight:700;font-family:'Liberation Sans', sans-serif;left:1132.5px;">Full</div>
<svg class="a" style="left:1277.0px;top:815.0px;" width="24" height="24" viewBox="0 0 24 24"><circle cx="12" cy="12" r="12" fill="#f04e0f"/><path d="M6.5,12.5 L10.2,16 L17.5,8" fill="none" stroke="#fff" stroke-width="2.6"/></svg>
<div class="a" style="left:1252.4px;top:748.2px;width:47.6px;height:47.3px;background:#fff;border:2px solid #dedede;border-radius:6px;"></div>
<svg class="a" style="left:1273.8px;top:762.9px;" width="6" height="18" viewBox="0 0 6 18"><circle cx="3" cy="3" r="2" fill="#4a4a4a"/><circle cx="3" cy="9" r="2" fill="#4a4a4a"/><circle cx="3" cy="15" r="2" fill="#4a4a4a"/></svg>
<svg class="a" style="left:1291.0px;top:837.0px;" width="20" height="20" viewBox="0 0 20 20"><path d="M20,0 L20,20 L0,20 Z" fill="#e0e0e0"/></svg>
<div class="a" style="left:1326.0px;top:446.0px;width:630.0px;height:418.0px;background:#fff;border:2px solid #dcdcdc;border-radius:6px;"></div>
<div class="t" style="top:468.9px;font-size:21.6px;color:#44546a;font-weight:700;font-family:'Liberation Sans', sans-serif;left:1343.5px;">Silo 14.c</div>
<div class="t" style="top:499.5px;font-size:18.7px;color:#9b9b9b;font-weight:400;font-family:'Liberation Sans', sans-serif;left:1343.5px;">Last 1 day</div>
<div class="a" style="left:1890.4px;top:470.3px;width:47.6px;height:47.3px;background:#fff;border:2px solid #dedede;border-radius:6px;"></div>
<svg class="a" style="left:1911.8px;top:485.0px;" width="6" height="18" viewBox="0 0 6 18"><circle cx="3" cy="3" r="2" fill="#4a4a4a"/><circle cx="3" cy="9" r="2" fill="#4a4a4a"/><circle cx="3" cy="15" r="2" fill="#4a4a4a"/></svg>
<svg class="a" style="left:1929.0px;top:837.0px;" width="20" height="20" viewBox="0 0 20 20"><path d="M20,0 L20,20 L0,20 Z" fill="#e0e0e0"/></svg>
<div class="a" style="left:1406.0px;top:570.8px;width:83.6px;height:47.9px;background:#fff;border:2px solid #e0e0e0;border-radius:6px;"></div>
<div class="a" style="left:1414.5px;top:584.8px;width:20.0px;height:20.0px;background:#5c0a8a;border-radius:50%;"></div>
<div class="t" style="top:585.4px;font-size:18.6px;color:#22262b;font-weight:400;font-family:'Liberation Sans', sans-serif;left:1442.5px;">CBX</div>
<div class="a" style="left:1406.0px;top:696.9px;width:143.0px;height:47.9px;background:#fff;border:2px solid #e0e0e0;border-radius:6px;"></div>
<div class="a" style="left:1414.5px;top:710.8px;width:20.0px;height:20.0px;background:#2e820e;border-radius:50%;"></div>
<div class="t" style="top:711.2px;font-size:19.2px;color:#22262b;font-weight:400;font-family:'Liberation Sans', sans-serif;left:1442.5px;">BA:TEMP.1</div>
<svg class="a" style="left:0.0px;top:0.0px;pointer-events:none;" width="2760" height="1800" viewBox="0 0 2760 1800"><path d="M1407.0,680.3 L1408.7,681.0 L1409.7,678.5 L1410.8,675.5 L1411.8,672.2 L1412.9,670.6 L1413.9,667.8 L1415.0,664.5 L1416.0,661.7 L1417.0,660.6 L1418.0,659.5 L1419.0,659.7 L1420.0,659.5 L1421.0,657.8 L1422.0,658.7 L1423.0,657.0 L1424.0,656.4 L1425.1,652.8 L1426.2,651.5 L1427.3,647.7 L1428.4,644.8 L1429.5,641.0 L1430.6,639.6 L1431.8,640.0 L1432.9,640.1 L1434.0,639.1 L1435.0,681.0 L1436.2,680.7 L1437.5,680.3 L1438.7,681.0 L1438.7,680.2 L1439.7,679.1 L1440.7,675.4 L1441.8,672.8 L1442.8,669.7 L1443.9,667.2 L1444.9,663.8 L1446.0,660.8 L1447.0,661.9 L1448.0,660.0 L1449.0,660.5 L1450.0,658.7 L1451.0,659.6 L1452.0,658.9 L1453.0,658.0 L1454.0,657.4 L1455.1,653.7 L1456.2,650.7 L1457.3,646.1 L1458.4,643.5 L1459.5,640.8 L1460.6,639.3 L1461.7,640.5 L1462.8,640.2 L1464.0,639.0 L1465.0,680.7 L1466.2,680.9 L1467.4,680.8 L1468.7,681.0 L1468.6,680.8 L1469.7,677.3 L1470.7,674.7 L1471.7,673.2 L1472.8,671.0 L1473.8,667.2 L1474.9,664.5 L1475.9,661.8 L1476.9,661.6 L1477.9,660.0 L1478.9,660.1 L1479.9,659.4 L1480.9,659.0 L1481.9,657.5 L1482.9,656.8 L1483.9,656.6 L1485.0,654.0 L1486.1,649.1 L1487.2,645.8 L1488.3,641.4 L1489.4,637.3 L1490.5,637.0 L1491.7,638.2 L1492.8,637.9 L1493.9,636.8 L1494.9,681.0 L1496.2,681.0 L1497.4,681.0 L1498.6,681.0 L1498.6,680.8 L1499.6,679.2 L1500.7,676.4 L1501.7,672.9 L1502.8,670.8 L1503.8,667.2 L1504.8,664.2 L1505.9,661.2 L1506.9,661.9 L1507.9,659.8 L1508.9,659.1 L1509.9,659.9 L1510.9,659.3 L1511.9,658.1 L1512.9,658.2 L1513.9,656.0 L1515.0,653.2 L1516.1,650.0 L1517.2,647.0 L1518.3,643.3 L1519.4,639.9 L1520.5,640.1 L1521.6,641.0 L1522.8,641.0 L1523.9,640.2 L1524.9,681.0 L1526.1,680.5 L1527.3,681.0 L1528.6,681.0 L1528.5,681.0 L1529.6,677.3 L1530.6,674.9 L1531.7,673.4 L1532.7,670.6 L1533.8,668.0 L1534.8,664.7 L1535.8,661.6 L1536.8,661.3 L1537.8,661.2 L1538.8,659.5 L1539.8,659.4 L1540.8,658.3 L1541.8,658.6 L1542.8,656.5 L1543.8,657.3 L1544.9,654.5 L1546.0,649.4 L1547.1,647.2 L1548.2,644.0 L1549.3,641.2 L1550.5,640.4 L1551.6,639.5 L1552.7,639.6 L1553.8,640.4 L1554.8,681.0 L1556.1,680.3 L1557.3,680.2 L1558.5,680.2 L1558.5,680.1 L1559.5,678.1 L1560.6,674.8 L1561.6,673.5 L1562.7,670.3 L1563.7,666.5 L1564.8,664.6 L1565.8,661.4 L1566.8,661.1 L1567.8,660.0 L1568.8,659.2 L1569.8,658.7 L1570.8,658.5 L1571.8,658.5 L1572.8,657.6 L1573.8,656.0 L1574.9,653.9 L1576.0,650.9 L1577.1,647.3 L1578.2,644.0 L1579.3,639.0 L1580.4,639.7 L1581.6,638.7 L1582.7,639.8 L1583.8,638.4 L1584.8,681.0 L1586.0,680.5 L1587.3,681.0 L1588.5,680.6 L1588.5,680.1 L1589.5,678.0 L1590.5,675.1 L1591.6,673.5 L1592.6,669.6 L1593.7,667.2 L1594.7,664.6 L1595.8,662.6 L1596.8,660.3 L1597.8,660.7 L1598.8,659.9 L1599.8,659.8 L1600.8,659.6 L1601.8,657.7 L1602.8,657.9 L1603.8,657.0 L1604.9,654.1 L1606.0,650.2 L1607.1,648.8 L1608.2,646.2 L1609.3,642.1 L1610.4,641.7 L1611.5,642.8 L1612.6,640.8 L1613.8,640.5 L1614.8,680.1 L1616.0,681.0 L1617.2,681.0 L1618.5,680.9 L1618.4,681.0 L1619.5,677.3 L1620.5,675.8 L1621.5,672.6 L1622.6,670.0 L1623.6,667.0 L1624.7,664.3 L1625.7,661.2 L1626.7,660.2 L1627.7,660.4 L1628.7,659.4 L1629.7,659.7 L1630.7,659.3 L1631.7,658.6 L1632.7,657.4 L1633.7,656.4 L1634.8,653.4 L1635.9,650.3 L1637.0,647.3 L1638.1,644.7 L1639.2,639.6 L1640.3,640.2 L1641.5,639.9 L1642.6,640.2 L1643.7,640.3 L1644.7,681.0 L1646.0,681.0 L1647.2,681.0 L1648.4,681.0 L1648.4,681.0 L1649.4,678.6 L1650.5,675.9 L1651.5,672.2 L1652.6,670.8 L1653.6,667.0 L1654.6,664.7 L1655.7,662.4 L1656.7,662.0 L1657.7,661.5 L1658.7,658.9 L1659.7,658.9 L1660.7,658.3 L1661.7,657.9 L1662.7,656.8 L1663.7,657.0 L1664.8,652.6 L1665.9,649.7 L1667.0,647.5 L1668.1,643.7 L1669.2,639.7 L1670.3,638.7 L1671.4,640.2 L1672.6,639.4 L1673.7,638.2 L1674.7,680.7 L1675.9,681.0 L1677.1,681.0 L1678.4,680.5 L1678.3,681.0 L1679.4,677.9 L1680.4,675.0 L1681.5,673.4 L1682.5,669.3 L1683.6,667.6 L1684.6,663.9 L1685.6,661.9 L1686.6,660.7 L1687.6,660.3 L1688.6,660.8 L1689.6,659.2 L1690.6,658.6 L1691.6,658.3 L1692.6,657.1 L1693.6,656.3 L1694.7,653.1 L1695.8,649.2 L1696.9,645.4 L1698.0,643.4 L1699.1,637.9 L1700.3,639.2 L1701.4,639.2 L1702.5,638.5 L1703.6,636.9 L1704.6,681.0 L1705.9,680.1 L1707.1,681.0 L1708.3,681.0 L1708.3,680.5 L1709.3,677.3 L1710.4,675.6 L1711.4,671.9 L1712.5,669.6 L1713.5,667.1 L1714.6,665.3 L1715.6,661.5 L1716.6,660.4 L1717.6,661.1 L1718.6,660.6 L1719.6,659.4 L1720.6,657.8 L1721.6,657.5 L1722.6,657.3 L1723.6,657.0 L1724.7,653.5 L1725.8,651.9 L1726.9,649.2 L1728.0,646.5 L1729.1,643.6 L1730.2,641.7 L1731.4,642.5 L1732.5,641.3 L1733.6,642.7 L1734.6,681.0 L1735.8,681.0 L1737.1,680.4 L1738.3,680.1 L1738.3,681.0 L1739.3,678.5 L1740.3,675.7 L1741.4,672.7 L1742.4,670.6 L1743.5,666.9 L1744.5,664.0 L1745.6,661.4 L1746.6,660.7 L1747.6,660.8 L1748.6,660.7 L1749.6,658.5 L1750.6,657.8 L1751.6,658.1 L1752.6,657.9 L1753.6,656.3 L1754.7,653.4 L1755.8,649.9 L1756.9,646.8 L1758.0,644.7 L1759.1,642.0 L1760.2,641.7 L1761.3,640.5 L1762.4,640.1 L1763.6,641.6 L1764.6,681.0 L1765.8,680.8 L1767.0,681.0 L1768.3,681.0 L1768.2,681.0 L1769.3,677.4 L1770.3,676.1 L1771.3,672.2 L1772.4,669.1 L1773.4,666.9 L1774.5,664.5 L1775.5,662.0 L1776.5,660.5 L1777.5,660.9 L1778.5,659.9 L1779.5,658.6 L1780.5,659.4 L1781.5,658.7 L1782.5,658.3 L1783.5,657.3 L1784.6,653.5 L1785.7,651.9 L1786.8,649.3 L1787.9,645.8 L1789.0,643.7 L1790.1,643.6 L1791.3,642.2 L1792.4,643.0 L1793.5,642.8 L1794.5,681.0 L1795.8,680.0 L1797.0,680.7 L1798.2,681.0 L1798.2,681.0 L1799.2,678.8 L1800.3,675.8 L1801.3,672.1 L1802.4,670.8 L1803.4,667.3 L1804.4,665.2 L1805.5,661.1 L1806.5,662.1 L1807.5,660.6 L1808.5,660.5 L1809.5,659.8 L1810.5,659.5 L1811.5,657.8 L1812.5,656.7 L1813.5,656.7 L1814.6,652.6 L1815.7,649.7 L1816.8,646.6 L1817.9,642.1 L1819.0,638.0 L1820.1,637.5 L1821.2,638.1 L1822.4,638.2 L1823.5,636.8 L1824.5,681.0 L1825.7,680.4 L1826.9,680.2 L1828.2,681.0 L1828.1,681.0 L1829.2,679.0 L1830.2,675.5 L1831.3,672.0 L1832.3,669.5 L1833.4,667.1 L1834.4,664.8 L1835.4,662.3 L1836.4,661.6 L1837.4,660.8 L1838.4,659.4 L1839.4,659.2 L1840.4,658.5 L1841.4,658.1 L1842.4,657.0 L1843.4,657.0 L1844.5,653.3 L1845.6,649.0 L1846.7,647.0 L1847.8,643.1 L1848.9,640.0 L1850.1,639.6 L1851.2,639.4 L1852.3,639.7 L1853.4,638.2 L1854.4,680.8 L1855.7,680.0 L1856.9,681.0 L1858.1,681.0 L1858.1,681.0 L1859.1,679.2 L1860.2,674.9 L1861.2,672.2 L1862.3,670.5 L1863.3,667.9 L1864.4,664.4 L1865.4,660.8 L1866.4,660.9 L1867.4,661.2 L1868.4,659.9 L1869.4,659.2 L1870.4,658.5 L1871.4,658.4 L1872.4,657.7 L1873.4,657.3 L1874.5,654.9 L1875.6,651.9 L1876.7,648.4 L1877.8,645.4 L1878.9,643.7 L1880.0,643.5 L1881.2,643.5 L1882.3,641.8 L1883.4,642.9 L1884.4,681.0 L1885.6,680.2 L1886.9,680.6 L1888.1,681.0 L1888.1,680.3 L1889.1,678.9 L1890.1,675.0 L1891.2,673.1 L1892.2,669.6 L1893.3,666.7 L1894.3,663.9 L1895.4,661.7 L1896.4,661.5 L1897.4,660.0 L1898.4,660.3 L1899.4,659.0 L1900.4,659.0 L1901.4,657.8 L1902.4,656.9 L1903.4,656.2 L1904.5,652.2 L1905.6,649.6 L1906.7,645.2 L1907.8,640.8 L1908.9,638.5 L1910.0,637.8 L1911.1,636.3 L1912.2,637.5 L1913.4,637.0 L1914.4,680.9 L1915.6,681.0 L1916.8,681.0 L1918.1,680.7 L1918.0,681.0 L1919.1,678.5 L1920.1,675.2 L1921.1,672.4 L1922.2,670.5 L1923.2,667.5 L1924.3,664.4 L1925.3,661.7 L1926.3,660.6 L1927.3,661.1 L1928.3,659.0 L1929.3,659.6 L1930.3,658.6 L1931.3,657.5 L1932.3,657.7 L1933.3,657.1 L1934.4,651.9 L1935.4,648.5 L1936.5,644.4 L1936.5,681.0 L1407,681.0 Z" fill="#f5f0fa"/><path d="M1407.0,680.3 L1408.7,681.0 L1409.7,678.5 L1410.8,675.5 L1411.8,672.2 L1412.9,670.6 L1413.9,667.8 L1415.0,664.5 L1416.0,661.7 L1417.0,660.6 L1418.0,659.5 L1419.0,659.7 L1420.0,659.5 L1421.0,657.8 L1422.0,658.7 L1423.0,657.0 L1424.0,656.4 L1425.1,652.8 L1426.2,651.5 L1427.3,647.7 L1428.4,644.8 L1429.5,641.0 L1430.6,639.6 L1431.8,640.0 L1432.9,640.1 L1434.0,639.1 L1435.0,681.0 L1436.2,680.7 L1437.5,680.3 L1438.7,681.0 L1438.7,680.2 L1439.7,679.1 L1440.7,675.4 L1441.8,672.8 L1442.8,669.7 L1443.9,667.2 L1444.9,663.8 L1446.0,660.8 L1447.0,661.9 L1448.0,660.0 L1449.0,660.5 L1450.0,658.7 L1451.0,659.6 L1452.0,658.9 L1453.0,658.0 L1454.0,657.4 L1455.1,653.7 L1456.2,650.7 L1457.3,646.1 L1458.4,643.5 L1459.5,640.8 L1460.6,639.3 L1461.7,640.5 L1462.8,640.2 L1464.0,639.0 L1465.0,680.7 L1466.2,680.9 L1467.4,680.8 L1468.7,681.0 L1468.6,680.8 L1469.7,677.3 L1470.7,674.7 L1471.7,673.2 L1472.8,671.0 L1473.8,667.2 L1474.9,664.5 L1475.9,661.8 L1476.9,661.6 L1477.9,660.0 L1478.9,660.1 L1479.9,659.4 L1480.9,659.0 L1481.9,657.5 L1482.9,656.8 L1483.9,656.6 L1485.0,654.0 L1486.1,649.1 L1487.2,645.8 L1488.3,641.4 L1489.4,637.3 L1490.5,637.0 L1491.7,638.2 L1492.8,637.9 L1493.9,636.8 L1494.9,681.0 L1496.2,681.0 L1497.4,681.0 L1498.6,681.0 L1498.6,680.8 L1499.6,679.2 L1500.7,676.4 L1501.7,672.9 L1502.8,670.8 L1503.8,667.2 L1504.8,664.2 L1505.9,661.2 L1506.9,661.9 L1507.9,659.8 L1508.9,659.1 L1509.9,659.9 L1510.9,659.3 L1511.9,658.1 L1512.9,658.2 L1513.9,656.0 L1515.0,653.2 L1516.1,650.0 L1517.2,647.0 L1518.3,643.3 L1519.4,639.9 L1520.5,640.1 L1521.6,641.0 L1522.8,641.0 L1523.9,640.2 L1524.9,681.0 L1526.1,680.5 L1527.3,681.0 L1528.6,681.0 L1528.5,681.0 L1529.6,677.3 L1530.6,674.9 L1531.7,673.4 L1532.7,670.6 L1533.8,668.0 L1534.8,664.7 L1535.8,661.6 L1536.8,661.3 L1537.8,661.2 L1538.8,659.5 L1539.8,659.4 L1540.8,658.3 L1541.8,658.6 L1542.8,656.5 L1543.8,657.3 L1544.9,654.5 L1546.0,649.4 L1547.1,647.2 L1548.2,644.0 L1549.3,641.2 L1550.5,640.4 L1551.6,639.5 L1552.7,639.6 L1553.8,640.4 L1554.8,681.0 L1556.1,680.3 L1557.3,680.2 L1558.5,680.2 L1558.5,680.1 L1559.5,678.1 L1560.6,674.8 L1561.6,673.5 L1562.7,670.3 L1563.7,666.5 L1564.8,664.6 L1565.8,661.4 L1566.8,661.1 L1567.8,660.0 L1568.8,659.2 L1569.8,658.7 L1570.8,658.5 L1571.8,658.5 L1572.8,657.6 L1573.8,656.0 L1574.9,653.9 L1576.0,650.9 L1577.1,647.3 L1578.2,644.0 L1579.3,639.0 L1580.4,639.7 L1581.6,638.7 L1582.7,639.8 L1583.8,638.4 L1584.8,681.0 L1586.0,680.5 L1587.3,681.0 L1588.5,680.6 L1588.5,680.1 L1589.5,678.0 L1590.5,675.1 L1591.6,673.5 L1592.6,669.6 L1593.7,667.2 L1594.7,664.6 L1595.8,662.6 L1596.8,660.3 L1597.8,660.7 L1598.8,659.9 L1599.8,659.8 L1600.8,659.6 L1601.8,657.7 L1602.8,657.9 L1603.8,657.0 L1604.9,654.1 L1606.0,650.2 L1607.1,648.8 L1608.2,646.2 L1609.3,642.1 L1610.4,641.7 L1611.5,642.8 L1612.6,640.8 L1613.8,640.5 L1614.8,680.1 L1616.0,681.0 L1617.2,681.0 L1618.5,680.9 L1618.4,681.0 L1619.5,677.3 L1620.5,675.8 L1621.5,672.6 L1622.6,670.0 L1623.6,667.0 L1624.7,664.3 L1625.7,661.2 L1626.7,660.2 L1627.7,660.4 L1628.7,659.4 L1629.7,659.7 L1630.7,659.3 L1631.7,658.6 L1632.7,657.4 L1633.7,656.4 L1634.8,653.4 L1635.9,650.3 L1637.0,647.3 L1638.1,644.7 L1639.2,639.6 L1640.3,640.2 L1641.5,639.9 L1642.6,640.2 L1643.7,640.3 L1644.7,681.0 L1646.0,681.0 L1647.2,681.0 L1648.4,681.0 L1648.4,681.0 L1649.4,678.6 L1650.5,675.9 L1651.5,672.2 L1652.6,670.8 L1653.6,667.0 L1654.6,664.7 L1655.7,662.4 L1656.7,662.0 L1657.7,661.5 L1658.7,658.9 L1659.7,658.9 L1660.7,658.3 L1661.7,657.9 L1662.7,656.8 L1663.7,657.0 L1664.8,652.6 L1665.9,649.7 L1667.0,647.5 L1668.1,643.7 L1669.2,639.7 L1670.3,638.7 L1671.4,640.2 L1672.6,639.4 L1673.7,638.2 L1674.7,680.7 L1675.9,681.0 L1677.1,681.0 L1678.4,680.5 L1678.3,681.0 L1679.4,677.9 L1680.4,675.0 L1681.5,673.4 L1682.5,669.3 L1683.6,667.6 L1684.6,663.9 L1685.6,661.9 L1686.6,660.7 L1687.6,660.3 L1688.6,660.8 L1689.6,659.2 L1690.6,658.6 L1691.6,658.3 L1692.6,657.1 L1693.6,656.3 L1694.7,653.1 L1695.8,649.2 L1696.9,645.4 L1698.0,643.4 L1699.1,637.9 L1700.3,639.2 L1701.4,639.2 L1702.5,638.5 L1703.6,636.9 L1704.6,681.0 L1705.9,680.1 L1707.1,681.0 L1708.3,681.0 L1708.3,680.5 L1709.3,677.3 L1710.4,675.6 L1711.4,671.9 L1712.5,669.6 L1713.5,667.1 L1714.6,665.3 L1715.6,661.5 L1716.6,660.4 L1717.6,661.1 L1718.6,660.6 L1719.6,659.4 L1720.6,657.8 L1721.6,657.5 L1722.6,657.3 L1723.6,657.0 L1724.7,653.5 L1725.8,651.9 L1726.9,649.2 L1728.0,646.5 L1729.1,643.6 L1730.2,641.7 L1731.4,642.5 L1732.5,641.3 L1733.6,642.7 L1734.6,681.0 L1735.8,681.0 L1737.1,680.4 L1738.3,680.1 L1738.3,681.0 L1739.3,678.5 L1740.3,675.7 L1741.4,672.7 L1742.4,670.6 L1743.5,666.9 L1744.5,664.0 L1745.6,661.4 L1746.6,660.7 L1747.6,660.8 L1748.6,660.7 L1749.6,658.5 L1750.6,657.8 L1751.6,658.1 L1752.6,657.9 L1753.6,656.3 L1754.7,653.4 L1755.8,649.9 L1756.9,646.8 L1758.0,644.7 L1759.1,642.0 L1760.2,641.7 L1761.3,640.5 L1762.4,640.1 L1763.6,641.6 L1764.6,681.0 L1765.8,680.8 L1767.0,681.0 L1768.3,681.0 L1768.2,681.0 L1769.3,677.4 L1770.3,676.1 L1771.3,672.2 L1772.4,669.1 L1773.4,666.9 L1774.5,664.5 L1775.5,662.0 L1776.5,660.5 L1777.5,660.9 L1778.5,659.9 L1779.5,658.6 L1780.5,659.4 L1781.5,658.7 L1782.5,658.3 L1783.5,657.3 L1784.6,653.5 L1785.7,651.9 L1786.8,649.3 L1787.9,645.8 L1789.0,643.7 L1790.1,643.6 L1791.3,642.2 L1792.4,643.0 L1793.5,642.8 L1794.5,681.0 L1795.8,680.0 L1797.0,680.7 L1798.2,681.0 L1798.2,681.0 L1799.2,678.8 L1800.3,675.8 L1801.3,672.1 L1802.4,670.8 L1803.4,667.3 L1804.4,665.2 L1805.5,661.1 L1806.5,662.1 L1807.5,660.6 L1808.5,660.5 L1809.5,659.8 L1810.5,659.5 L1811.5,657.8 L1812.5,656.7 L1813.5,656.7 L1814.6,652.6 L1815.7,649.7 L1816.8,646.6 L1817.9,642.1 L1819.0,638.0 L1820.1,637.5 L1821.2,638.1 L1822.4,638.2 L1823.5,636.8 L1824.5,681.0 L1825.7,680.4 L1826.9,680.2 L1828.2,681.0 L1828.1,681.0 L1829.2,679.0 L1830.2,675.5 L1831.3,672.0 L1832.3,669.5 L1833.4,667.1 L1834.4,664.8 L1835.4,662.3 L1836.4,661.6 L1837.4,660.8 L1838.4,659.4 L1839.4,659.2 L1840.4,658.5 L1841.4,658.1 L1842.4,657.0 L1843.4,657.0 L1844.5,653.3 L1845.6,649.0 L1846.7,647.0 L1847.8,643.1 L1848.9,640.0 L1850.1,639.6 L1851.2,639.4 L1852.3,639.7 L1853.4,638.2 L1854.4,680.8 L1855.7,680.0 L1856.9,681.0 L1858.1,681.0 L1858.1,681.0 L1859.1,679.2 L1860.2,674.9 L1861.2,672.2 L1862.3,670.5 L1863.3,667.9 L1864.4,664.4 L1865.4,660.8 L1866.4,660.9 L1867.4,661.2 L1868.4,659.9 L1869.4,659.2 L1870.4,658.5 L1871.4,658.4 L1872.4,657.7 L1873.4,657.3 L1874.5,654.9 L1875.6,651.9 L1876.7,648.4 L1877.8,645.4 L1878.9,643.7 L1880.0,643.5 L1881.2,643.5 L1882.3,641.8 L1883.4,642.9 L1884.4,681.0 L1885.6,680.2 L1886.9,680.6 L1888.1,681.0 L1888.1,680.3 L1889.1,678.9 L1890.1,675.0 L1891.2,673.1 L1892.2,669.6 L1893.3,666.7 L1894.3,663.9 L1895.4,661.7 L1896.4,661.5 L1897.4,660.0 L1898.4,660.3 L1899.4,659.0 L1900.4,659.0 L1901.4,657.8 L1902.4,656.9 L1903.4,656.2 L1904.5,652.2 L1905.6,649.6 L1906.7,645.2 L1907.8,640.8 L1908.9,638.5 L1910.0,637.8 L1911.1,636.3 L1912.2,637.5 L1913.4,637.0 L1914.4,680.9 L1915.6,681.0 L1916.8,681.0 L1918.1,680.7 L1918.0,681.0 L1919.1,678.5 L1920.1,675.2 L1921.1,672.4 L1922.2,670.5 L1923.2,667.5 L1924.3,664.4 L1925.3,661.7 L1926.3,660.6 L1927.3,661.1 L1928.3,659.0 L1929.3,659.6 L1930.3,658.6 L1931.3,657.5 L1932.3,657.7 L1933.3,657.1 L1934.4,651.9 L1935.4,648.5 L1936.5,644.4" fill="none" stroke="#5c0a8a" stroke-width="2.3" stroke-linejoin="round"/><path d="M1394,635.6 H1406.4 V681.0 H1394" fill="none" stroke="#5c0a8a" stroke-width="2"/><line x1="1394" y1="652.1" x2="1406" y2="652.1" stroke="#b9a3cf" stroke-width="2"/><line x1="1394" y1="661.7" x2="1406" y2="661.7" stroke="#b9a3cf" stroke-width="2"/><path d="M1407.0,805.8 L1408.0,805.8 L1409.2,801.7 L1410.4,795.5 L1411.6,791.6 L1412.8,786.5 L1413.8,786.6 L1414.8,785.8 L1415.9,785.8 L1416.9,786.2 L1417.9,785.7 L1418.9,786.1 L1419.9,785.2 L1420.9,785.3 L1422.0,786.3 L1423.0,785.7 L1424.0,785.8 L1425.2,777.9 L1426.3,768.9 L1427.5,760.0 L1428.5,767.7 L1429.5,773.8 L1430.5,780.4 L1431.5,786.7 L1432.5,793.8 L1433.5,799.1 L1434.5,805.8 L1435.7,805.6 L1436.8,805.8 L1438.0,805.8 L1438.0,805.5 L1439.2,800.3 L1440.4,796.2 L1441.6,791.8 L1442.8,786.8 L1443.8,786.4 L1444.8,786.7 L1445.8,785.8 L1446.8,785.7 L1447.9,785.9 L1448.9,786.7 L1449.9,785.5 L1450.9,785.3 L1451.9,785.2 L1452.9,785.0 L1454.0,785.4 L1455.1,780.1 L1456.3,774.7 L1457.5,768.0 L1458.5,773.4 L1459.5,778.6 L1460.5,784.0 L1461.5,790.2 L1462.5,795.2 L1463.5,800.0 L1464.5,805.1 L1465.6,805.8 L1466.8,805.8 L1468.0,805.8 L1467.9,805.3 L1469.1,801.1 L1470.3,797.0 L1471.5,791.6 L1472.7,787.4 L1473.7,785.9 L1474.8,787.3 L1475.8,785.6 L1476.8,786.2 L1477.8,785.4 L1478.8,786.7 L1479.8,786.4 L1480.9,786.9 L1481.9,786.5 L1482.9,786.7 L1483.9,785.9 L1485.1,779.4 L1486.3,771.8 L1487.4,763.8 L1488.4,770.9 L1489.4,775.8 L1490.4,781.4 L1491.4,787.2 L1492.4,793.8 L1493.4,799.3 L1494.4,805.8 L1495.6,805.8 L1496.8,805.3 L1497.9,805.1 L1497.9,805.8 L1499.1,800.4 L1500.3,796.3 L1501.5,792.0 L1502.7,786.2 L1503.7,786.4 L1504.7,787.2 L1505.7,786.3 L1506.8,786.0 L1507.8,786.9 L1508.8,786.7 L1509.8,786.8 L1510.8,786.4 L1511.8,785.8 L1512.9,786.2 L1513.9,786.4 L1515.0,779.4 L1516.2,772.0 L1517.4,765.4 L1518.4,771.3 L1519.4,777.7 L1520.4,783.0 L1521.4,788.7 L1522.4,795.0 L1523.4,799.4 L1524.4,805.8 L1525.5,805.5 L1526.7,805.8 L1527.9,805.8 L1527.8,805.3 L1529.0,801.8 L1530.2,795.5 L1531.4,791.5 L1532.6,786.7 L1533.7,786.1 L1534.7,786.6 L1535.7,786.3 L1536.7,786.2 L1537.7,786.6 L1538.7,785.3 L1539.8,785.9 L1540.8,786.5 L1541.8,785.3 L1542.8,786.5 L1543.8,785.3 L1545.0,779.7 L1546.2,772.4 L1547.3,766.5 L1548.3,772.1 L1549.3,777.1 L1550.3,783.8 L1551.3,789.0 L1552.3,794.9 L1553.3,800.3 L1554.3,805.8 L1555.5,805.8 L1556.7,805.4 L1557.8,805.8 L1557.8,805.1 L1559.0,801.7 L1560.2,796.9 L1561.4,791.4 L1562.6,787.1 L1563.6,786.9 L1564.6,786.7 L1565.7,786.0 L1566.7,786.0 L1567.7,786.0 L1568.7,785.8 L1569.7,786.9 L1570.7,785.7 L1571.8,785.7 L1572.8,785.7 L1573.8,786.4 L1575.0,777.4 L1576.1,769.2 L1577.3,760.3 L1578.3,766.8 L1579.3,772.9 L1580.3,779.6 L1581.3,786.1 L1582.3,793.6 L1583.3,799.4 L1584.3,805.1 L1585.5,805.7 L1586.6,805.1 L1587.8,805.8 L1587.8,805.7 L1589.0,801.6 L1590.2,795.8 L1591.4,792.0 L1592.6,786.2 L1593.6,787.4 L1594.6,786.7 L1595.6,785.6 L1596.6,786.9 L1597.7,785.8 L1598.7,785.9 L1599.7,785.5 L1600.7,786.6 L1601.7,785.2 L1602.7,786.3 L1603.8,785.6 L1604.9,780.3 L1606.1,773.7 L1607.3,767.5 L1608.3,774.4 L1609.3,779.3 L1610.3,783.8 L1611.3,790.6 L1612.3,795.8 L1613.3,799.9 L1614.3,804.9 L1615.4,805.8 L1616.6,805.2 L1617.8,805.8 L1617.7,805.7 L1618.9,801.4 L1620.1,796.3 L1621.3,791.9 L1622.5,787.2 L1623.5,786.7 L1624.6,786.6 L1625.6,786.1 L1626.6,785.7 L1627.6,785.5 L1628.6,786.8 L1629.6,785.6 L1630.7,785.9 L1631.7,785.6 L1632.7,786.1 L1633.7,785.8 L1634.9,779.2 L1636.1,771.2 L1637.2,763.9 L1638.2,770.3 L1639.2,776.5 L1640.2,782.7 L1641.2,787.6 L1642.2,794.6 L1643.2,800.7 L1644.2,805.8 L1645.4,805.1 L1646.6,805.6 L1647.7,805.8 L1647.7,805.8 L1648.9,800.2 L1650.1,796.0 L1651.3,791.8 L1652.5,787.1 L1653.5,786.6 L1654.5,785.9 L1655.5,786.2 L1656.6,785.5 L1657.6,785.9 L1658.6,786.0 L1659.6,786.7 L1660.6,786.2 L1661.6,785.8 L1662.7,785.4 L1663.7,785.5 L1664.8,777.8 L1666.0,769.0 L1667.2,760.2 L1668.2,767.8 L1669.2,773.8 L1670.2,780.9 L1671.2,786.6 L1672.2,793.2 L1673.2,799.2 L1674.2,805.8 L1675.3,805.8 L1676.5,805.8 L1677.7,805.8 L1677.6,805.7 L1678.8,800.2 L1680.0,796.8 L1681.2,791.2 L1682.4,786.4 L1683.5,785.7 L1684.5,785.6 L1685.5,786.2 L1686.5,787.2 L1687.5,786.7 L1688.5,786.5 L1689.6,786.4 L1690.6,785.6 L1691.6,785.3 L1692.6,786.0 L1693.6,785.0 L1694.8,779.3 L1696.0,772.5 L1697.1,765.8 L1698.1,770.8 L1699.1,776.4 L1700.1,782.9 L1701.1,788.0 L1702.1,794.6 L1703.1,799.7 L1704.1,805.8 L1705.3,805.8 L1706.5,805.8 L1707.6,805.8 L1707.6,805.3 L1708.8,800.7 L1710.0,797.1 L1711.2,791.0 L1712.4,786.2 L1713.4,786.5 L1714.4,786.6 L1715.5,786.9 L1716.5,785.9 L1717.5,787.1 L1718.5,785.3 L1719.5,786.6 L1720.5,786.1 L1721.6,786.7 L1722.6,785.2 L1723.6,786.1 L1724.8,779.4 L1725.9,771.6 L1727.1,763.4 L1728.1,770.8 L1729.1,776.9 L1730.1,781.3 L1731.1,788.5 L1732.1,793.1 L1733.1,799.1 L1734.1,805.8 L1735.3,805.8 L1736.4,805.8 L1737.6,805.8 L1737.6,805.8 L1738.8,800.6 L1740.0,796.3 L1741.2,792.3 L1742.4,786.9 L1743.4,787.2 L1744.4,785.9 L1745.4,786.8 L1746.4,786.7 L1747.5,785.5 L1748.5,786.7 L1749.5,785.5 L1750.5,785.5 L1751.5,785.1 L1752.5,786.2 L1753.6,785.1 L1754.7,778.6 L1755.9,768.8 L1757.1,762.2 L1758.1,768.4 L1759.1,774.4 L1760.1,780.7 L1761.1,787.4 L1762.1,793.4 L1763.1,798.8 L1764.1,805.8 L1765.2,805.5 L1766.4,805.8 L1767.6,805.8 L1767.5,805.8 L1768.7,800.9 L1769.9,796.8 L1771.1,790.7 L1772.3,786.3 L1773.3,786.9 L1774.4,786.7 L1775.4,787.0 L1776.4,785.8 L1777.4,786.8 L1778.4,786.7 L1779.4,785.4 L1780.5,785.4 L1781.5,786.1 L1782.5,786.7 L1783.5,786.0 L1784.7,779.0 L1785.9,772.5 L1787.0,766.3 L1788.0,771.5 L1789.0,777.3 L1790.0,783.1 L1791.0,789.4 L1792.0,794.9 L1793.0,800.7 L1794.0,805.4 L1795.2,805.8 L1796.4,805.8 L1797.5,805.8 L1797.5,805.8 L1798.7,801.8 L1799.9,795.5 L1801.1,791.4 L1802.3,786.4 L1803.3,786.0 L1804.3,786.5 L1805.3,787.3 L1806.4,786.8 L1807.4,785.5 L1808.4,785.7 L1809.4,785.9 L1810.4,786.7 L1811.4,785.9 L1812.5,785.2 L1813.5,785.9 L1814.6,778.7 L1815.8,771.6 L1817.0,765.9 L1818.0,772.4 L1819.0,777.7 L1820.0,783.4 L1821.0,788.0 L1822.0,794.5 L1823.0,800.3 L1824.0,805.8 L1825.1,805.7 L1826.3,805.0 L1827.5,805.8 L1827.4,805.4 L1828.6,801.4 L1829.8,796.1 L1831.0,791.9 L1832.2,786.3 L1833.3,785.8 L1834.3,786.3 L1835.3,786.4 L1836.3,786.8 L1837.3,786.1 L1838.3,786.5 L1839.4,785.9 L1840.4,786.4 L1841.4,785.4 L1842.4,786.5 L1843.4,786.6 L1844.6,779.1 L1845.8,774.8 L1846.9,768.8 L1847.9,774.0 L1848.9,778.3 L1849.9,784.8 L1850.9,790.2 L1851.9,795.3 L1852.9,801.3 L1853.9,805.8 L1855.1,805.8 L1856.3,805.8 L1857.4,805.2 L1857.4,805.4 L1858.6,801.1 L1859.8,796.3 L1861.0,792.2 L1862.2,786.9 L1863.2,786.8 L1864.2,786.7 L1865.3,787.2 L1866.3,786.1 L1867.3,786.7 L1868.3,786.3 L1869.3,785.9 L1870.3,785.7 L1871.4,785.3 L1872.4,785.0 L1873.4,785.5 L1874.6,779.6 L1875.7,773.4 L1876.9,768.2 L1877.9,773.4 L1878.9,779.8 L1879.9,784.9 L1880.9,790.0 L1881.9,795.7 L1882.9,800.0 L1883.9,805.1 L1885.1,805.8 L1886.2,805.3 L1887.4,805.8 L1887.4,805.7 L1888.6,801.7 L1889.8,795.8 L1891.0,790.7 L1892.2,786.8 L1893.2,786.9 L1894.2,786.0 L1895.2,787.2 L1896.2,787.2 L1897.3,786.6 L1898.3,787.0 L1899.3,787.0 L1900.3,785.4 L1901.3,786.4 L1902.3,786.3 L1903.4,786.2 L1904.5,779.7 L1905.7,774.2 L1906.9,768.4 L1907.9,774.3 L1908.9,778.2 L1909.9,784.1 L1910.9,789.4 L1911.9,795.6 L1912.9,799.7 L1913.9,805.0 L1915.0,805.1 L1916.2,805.1 L1917.4,805.7 L1917.3,805.8 L1918.5,800.7 L1919.7,795.5 L1920.9,791.7 L1922.1,786.3 L1923.1,786.7 L1924.2,786.9 L1925.2,786.3 L1926.2,786.7 L1927.2,786.5 L1928.2,786.8 L1929.2,786.6 L1930.3,786.7 L1931.3,786.4 L1932.3,785.5 L1933.3,785.8 L1934.4,783.2 L1935.4,780.2 L1936.5,776.6 L1936.5,805.8 L1407,805.8 Z" fill="#f4f8f2"/><path d="M1407.0,805.8 L1408.0,805.8 L1409.2,801.7 L1410.4,795.5 L1411.6,791.6 L1412.8,786.5 L1413.8,786.6 L1414.8,785.8 L1415.9,785.8 L1416.9,786.2 L1417.9,785.7 L1418.9,786.1 L1419.9,785.2 L1420.9,785.3 L1422.0,786.3 L1423.0,785.7 L1424.0,785.8 L1425.2,777.9 L1426.3,768.9 L1427.5,760.0 L1428.5,767.7 L1429.5,773.8 L1430.5,780.4 L1431.5,786.7 L1432.5,793.8 L1433.5,799.1 L1434.5,805.8 L1435.7,805.6 L1436.8,805.8 L1438.0,805.8 L1438.0,805.5 L1439.2,800.3 L1440.4,796.2 L1441.6,791.8 L1442.8,786.8 L1443.8,786.4 L1444.8,786.7 L1445.8,785.8 L1446.8,785.7 L1447.9,785.9 L1448.9,786.7 L1449.9,785.5 L1450.9,785.3 L1451.9,785.2 L1452.9,785.0 L1454.0,785.4 L1455.1,780.1 L1456.3,774.7 L1457.5,768.0 L1458.5,773.4 L1459.5,778.6 L1460.5,784.0 L1461.5,790.2 L1462.5,795.2 L1463.5,800.0 L1464.5,805.1 L1465.6,805.8 L1466.8,805.8 L1468.0,805.8 L1467.9,805.3 L1469.1,801.1 L1470.3,797.0 L1471.5,791.6 L1472.7,787.4 L1473.7,785.9 L1474.8,787.3 L1475.8,785.6 L1476.8,786.2 L1477.8,785.4 L1478.8,786.7 L1479.8,786.4 L1480.9,786.9 L1481.9,786.5 L1482.9,786.7 L1483.9,785.9 L1485.1,779.4 L1486.3,771.8 L1487.4,763.8 L1488.4,770.9 L1489.4,775.8 L1490.4,781.4 L1491.4,787.2 L1492.4,793.8 L1493.4,799.3 L1494.4,805.8 L1495.6,805.8 L1496.8,805.3 L1497.9,805.1 L1497.9,805.8 L1499.1,800.4 L1500.3,796.3 L1501.5,792.0 L1502.7,786.2 L1503.7,786.4 L1504.7,787.2 L1505.7,786.3 L1506.8,786.0 L1507.8,786.9 L1508.8,786.7 L1509.8,786.8 L1510.8,786.4 L1511.8,785.8 L1512.9,786.2 L1513.9,786.4 L1515.0,779.4 L1516.2,772.0 L1517.4,765.4 L1518.4,771.3 L1519.4,777.7 L1520.4,783.0 L1521.4,788.7 L1522.4,795.0 L1523.4,799.4 L1524.4,805.8 L1525.5,805.5 L1526.7,805.8 L1527.9,805.8 L1527.8,805.3 L1529.0,801.8 L1530.2,795.5 L1531.4,791.5 L1532.6,786.7 L1533.7,786.1 L1534.7,786.6 L1535.7,786.3 L1536.7,786.2 L1537.7,786.6 L1538.7,785.3 L1539.8,785.9 L1540.8,786.5 L1541.8,785.3 L1542.8,786.5 L1543.8,785.3 L1545.0,779.7 L1546.2,772.4 L1547.3,766.5 L1548.3,772.1 L1549.3,777.1 L1550.3,783.8 L1551.3,789.0 L1552.3,794.9 L1553.3,800.3 L1554.3,805.8 L1555.5,805.8 L1556.7,805.4 L1557.8,805.8 L1557.8,805.1 L1559.0,801.7 L1560.2,796.9 L1561.4,791.4 L1562.6,787.1 L1563.6,786.9 L1564.6,786.7 L1565.7,786.0 L1566.7,786.0 L1567.7,786.0 L1568.7,785.8 L1569.7,786.9 L1570.7,785.7 L1571.8,785.7 L1572.8,785.7 L1573.8,786.4 L1575.0,777.4 L1576.1,769.2 L1577.3,760.3 L1578.3,766.8 L1579.3,772.9 L1580.3,779.6 L1581.3,786.1 L1582.3,793.6 L1583.3,799.4 L1584.3,805.1 L1585.5,805.7 L1586.6,805.1 L1587.8,805.8 L1587.8,805.7 L1589.0,801.6 L1590.2,795.8 L1591.4,792.0 L1592.6,786.2 L1593.6,787.4 L1594.6,786.7 L1595.6,785.6 L1596.6,786.9 L1597.7,785.8 L1598.7,785.9 L1599.7,785.5 L1600.7,786.6 L1601.7,785.2 L1602.7,786.3 L1603.8,785.6 L1604.9,780.3 L1606.1,773.7 L1607.3,767.5 L1608.3,774.4 L1609.3,779.3 L1610.3,783.8 L1611.3,790.6 L1612.3,795.8 L1613.3,799.9 L1614.3,804.9 L1615.4,805.8 L1616.6,805.2 L1617.8,805.8 L1617.7,805.7 L1618.9,801.4 L1620.1,796.3 L1621.3,791.9 L1622.5,787.2 L1623.5,786.7 L1624.6,786.6 L1625.6,786.1 L1626.6,785.7 L1627.6,785.5 L1628.6,786.8 L1629.6,785.6 L1630.7,785.9 L1631.7,785.6 L1632.7,786.1 L1633.7,785.8 L1634.9,779.2 L1636.1,771.2 L1637.2,763.9 L1638.2,770.3 L1639.2,776.5 L1640.2,782.7 L1641.2,787.6 L1642.2,794.6 L1643.2,800.7 L1644.2,805.8 L1645.4,805.1 L1646.6,805.6 L1647.7,805.8 L1647.7,805.8 L1648.9,800.2 L1650.1,796.0 L1651.3,791.8 L1652.5,787.1 L1653.5,786.6 L1654.5,785.9 L1655.5,786.2 L1656.6,785.5 L1657.6,785.9 L1658.6,786.0 L1659.6,786.7 L1660.6,786.2 L1661.6,785.8 L1662.7,785.4 L1663.7,785.5 L1664.8,777.8 L1666.0,769.0 L1667.2,760.2 L1668.2,767.8 L1669.2,773.8 L1670.2,780.9 L1671.2,786.6 L1672.2,793.2 L1673.2,799.2 L1674.2,805.8 L1675.3,805.8 L1676.5,805.8 L1677.7,805.8 L1677.6,805.7 L1678.8,800.2 L1680.0,796.8 L1681.2,791.2 L1682.4,786.4 L1683.5,785.7 L1684.5,785.6 L1685.5,786.2 L1686.5,787.2 L1687.5,786.7 L1688.5,786.5 L1689.6,786.4 L1690.6,785.6 L1691.6,785.3 L1692.6,786.0 L1693.6,785.0 L1694.8,779.3 L1696.0,772.5 L1697.1,765.8 L1698.1,770.8 L1699.1,776.4 L1700.1,782.9 L1701.1,788.0 L1702.1,794.6 L1703.1,799.7 L1704.1,805.8 L1705.3,805.8 L1706.5,805.8 L1707.6,805.8 L1707.6,805.3 L1708.8,800.7 L1710.0,797.1 L1711.2,791.0 L1712.4,786.2 L1713.4,786.5 L1714.4,786.6 L1715.5,786.9 L1716.5,785.9 L1717.5,787.1 L1718.5,785.3 L1719.5,786.6 L1720.5,786.1 L1721.6,786.7 L1722.6,785.2 L1723.6,786.1 L1724.8,779.4 L1725.9,771.6 L1727.1,763.4 L1728.1,770.8 L1729.1,776.9 L1730.1,781.3 L1731.1,788.5 L1732.1,793.1 L1733.1,799.1 L1734.1,805.8 L1735.3,805.8 L1736.4,805.8 L1737.6,805.8 L1737.6,805.8 L1738.8,800.6 L1740.0,796.3 L1741.2,792.3 L1742.4,786.9 L1743.4,787.2 L1744.4,785.9 L1745.4,786.8 L1746.4,786.7 L1747.5,785.5 L1748.5,786.7 L1749.5,785.5 L1750.5,785.5 L1751.5,785.1 L1752.5,786.2 L1753.6,785.1 L1754.7,778.6 L1755.9,768.8 L1757.1,762.2 L1758.1,768.4 L1759.1,774.4 L1760.1,780.7 L1761.1,787.4 L1762.1,793.4 L1763.1,798.8 L1764.1,805.8 L1765.2,805.5 L1766.4,805.8 L1767.6,805.8 L1767.5,805.8 L1768.7,800.9 L1769.9,796.8 L1771.1,790.7 L1772.3,786.3 L1773.3,786.9 L1774.4,786.7 L1775.4,787.0 L1776.4,785.8 L1777.4,786.8 L1778.4,786.7 L1779.4,785.4 L1780.5,785.4 L1781.5,786.1 L1782.5,786.7 L1783.5,786.0 L1784.7,779.0 L1785.9,772.5 L1787.0,766.3 L1788.0,771.5 L1789.0,777.3 L1790.0,783.1 L1791.0,789.4 L1792.0,794.9 L1793.0,800.7 L1794.0,805.4 L1795.2,805.8 L1796.4,805.8 L1797.5,805.8 L1797.5,805.8 L1798.7,801.8 L1799.9,795.5 L1801.1,791.4 L1802.3,786.4 L1803.3,786.0 L1804.3,786.5 L1805.3,787.3 L1806.4,786.8 L1807.4,785.5 L1808.4,785.7 L1809.4,785.9 L1810.4,786.7 L1811.4,785.9 L1812.5,785.2 L1813.5,785.9 L1814.6,778.7 L1815.8,771.6 L1817.0,765.9 L1818.0,772.4 L1819.0,777.7 L1820.0,783.4 L1821.0,788.0 L1822.0,794.5 L1823.0,800.3 L1824.0,805.8 L1825.1,805.7 L1826.3,805.0 L1827.5,805.8 L1827.4,805.4 L1828.6,801.4 L1829.8,796.1 L1831.0,791.9 L1832.2,786.3 L1833.3,785.8 L1834.3,786.3 L1835.3,786.4 L1836.3,786.8 L1837.3,786.1 L1838.3,786.5 L1839.4,785.9 L1840.4,786.4 L1841.4,785.4 L1842.4,786.5 L1843.4,786.6 L1844.6,779.1 L1845.8,774.8 L1846.9,768.8 L1847.9,774.0 L1848.9,778.3 L1849.9,784.8 L1850.9,790.2 L1851.9,795.3 L1852.9,801.3 L1853.9,805.8 L1855.1,805.8 L1856.3,805.8 L1857.4,805.2 L1857.4,805.4 L1858.6,801.1 L1859.8,796.3 L1861.0,792.2 L1862.2,786.9 L1863.2,786.8 L1864.2,786.7 L1865.3,787.2 L1866.3,786.1 L1867.3,786.7 L1868.3,786.3 L1869.3,785.9 L1870.3,785.7 L1871.4,785.3 L1872.4,785.0 L1873.4,785.5 L1874.6,779.6 L1875.7,773.4 L1876.9,768.2 L1877.9,773.4 L1878.9,779.8 L1879.9,784.9 L1880.9,790.0 L1881.9,795.7 L1882.9,800.0 L1883.9,805.1 L1885.1,805.8 L1886.2,805.3 L1887.4,805.8 L1887.4,805.7 L1888.6,801.7 L1889.8,795.8 L1891.0,790.7 L1892.2,786.8 L1893.2,786.9 L1894.2,786.0 L1895.2,787.2 L1896.2,787.2 L1897.3,786.6 L1898.3,787.0 L1899.3,787.0 L1900.3,785.4 L1901.3,786.4 L1902.3,786.3 L1903.4,786.2 L1904.5,779.7 L1905.7,774.2 L1906.9,768.4 L1907.9,774.3 L1908.9,778.2 L1909.9,784.1 L1910.9,789.4 L1911.9,795.6 L1912.9,799.7 L1913.9,805.0 L1915.0,805.1 L1916.2,805.1 L1917.4,805.7 L1917.3,805.8 L1918.5,800.7 L1919.7,795.5 L1920.9,791.7 L1922.1,786.3 L1923.1,786.7 L1924.2,786.9 L1925.2,786.3 L1926.2,786.7 L1927.2,786.5 L1928.2,786.8 L1929.2,786.6 L1930.3,786.7 L1931.3,786.4 L1932.3,785.5 L1933.3,785.8 L1934.4,783.2 L1935.4,780.2 L1936.5,776.6" fill="none" stroke="#2e820e" stroke-width="2.3" stroke-linejoin="round"/><path d="M1394,760.6 H1406.4 V805.8 H1394" fill="none" stroke="#2e820e" stroke-width="2"/><line x1="1394" y1="772.4" x2="1406" y2="772.4" stroke="#a9cf9c" stroke-width="2"/><line x1="1394" y1="780.8" x2="1406" y2="780.8" stroke="#a9cf9c" stroke-width="2"/><line x1="1394" y1="789.1" x2="1406" y2="789.1" stroke="#a9cf9c" stroke-width="2"/><line x1="1406" y1="814" x2="1937.5" y2="814" stroke="#333" stroke-width="2.2"/><line x1="1406.4" y1="814" x2="1406.4" y2="821" stroke="#333" stroke-width="2"/><line x1="1459" y1="814" x2="1459" y2="821" stroke="#333" stroke-width="2"/><line x1="1525.6" y1="814" x2="1525.6" y2="821" stroke="#333" stroke-width="2"/><line x1="1591.5" y1="814" x2="1591.5" y2="821" stroke="#333" stroke-width="2"/><line x1="1658" y1="814" x2="1658" y2="821" stroke="#333" stroke-width="2"/><line x1="1724.5" y1="814" x2="1724.5" y2="821" stroke="#333" stroke-width="2"/><line x1="1791" y1="814" x2="1791" y2="821" stroke="#333" stroke-width="2"/><line x1="1857.5" y1="814" x2="1857.5" y2="821" stroke="#333" stroke-width="2"/><line x1="1923.5" y1="814" x2="1923.5" y2="821" stroke="#333" stroke-width="2"/><line x1="1936.5" y1="814" x2="1936.5" y2="821" stroke="#333" stroke-width="2"/></svg>
<div class="t" style="top:625.9px;font-size:19.6px;color:#222;font-weight:400;font-family:'Liberation Sans', sans-serif;right:1372.7px;">47.1</div>
<div class="t" style="top:643.2px;font-size:19.6px;color:#aaa;font-weight:400;font-family:'Liberation Sans', sans-serif;right:1372.7px;">30</div>
<div class="t" style="top:651.2px;font-size:19.6px;color:#aaa;font-weight:400;font-family:'Liberation Sans', sans-serif;right:1372.7px;">20</div>
<div class="t" style="top:669.6px;font-size:19.6px;color:#222;font-weight:400;font-family:'Liberation Sans', sans-serif;right:1372.7px;">0</div>
<div class="t" style="top:750.4px;font-size:19.6px;color:#222;font-weight:400;font-family:'Liberation Sans', sans-serif;right:1372.7px;">54.2</div>
<div class="t" style="top:759.2px;font-size:19.6px;color:#aaa;font-weight:400;font-family:'Liberation Sans', sans-serif;right:1372.7px;">40</div>
<div class="t" style="top:768.2px;font-size:19.6px;color:#aaa;font-weight:400;font-family:'Liberation Sans', sans-serif;right:1372.7px;">30</div>
<div class="t" style="top:776.2px;font-size:19.6px;color:#aaa;font-weight:400;font-family:'Liberation Sans', sans-serif;right:1372.7px;">20</div>
<div class="t" style="top:794.6px;font-size:19.6px;color:#222;font-weight:400;font-family:'Liberation Sans', sans-serif;right:1372.7px;">0</div>
<div class="t" style="top:825.1px;font-size:19.6px;color:#222;font-weight:400;font-family:'Liberation Sans', sans-serif;left:1159.0px;width:600px;text-align:center;">03 PM</div>
<div class="t" style="top:825.1px;font-size:19.6px;color:#222;font-weight:400;font-family:'Liberation Sans', sans-serif;left:1225.6px;width:600px;text-align:center;">06 PM</div>
<div class="t" style="top:825.1px;font-size:19.6px;color:#222;font-weight:400;font-family:'Liberation Sans', sans-serif;left:1291.5px;width:600px;text-align:center;">09 PM</div>
<div class="t" style="top:825.1px;font-size:19.6px;color:#222;font-weight:400;font-family:'Liberation Sans', sans-serif;left:1358.0px;width:600px;text-align:center;">Mon, 19</div>
<div class="t" style="top:825.1px;font-size:19.6px;color:#222;font-weight:400;font-family:'Liberation Sans', sans-serif;left:1424.5px;width:600px;text-align:center;">03 AM</div>
<div class="t" style="top:825.1px;font-size:19.6px;color:#222;font-weight:400;font-family:'Liberation Sans', sans-serif;left:1491.0px;width:600px;text-align:center;">06 AM</div>
<div class="t" style="top:825.1px;font-size:19.6px;color:#222;font-weight:400;font-family:'Liberation Sans', sans-serif;left:1557.5px;width:600px;text-align:center;">09 AM</div>
<div class="t" style="top:825.1px;font-size:19.6px;color:#222;font-weight:400;font-family:'Liberation Sans', sans-serif;left:1623.5px;width:600px;text-align:center;">12 PM</div>
<div class="a" style="left:262.0px;top:872.0px;width:844.0px;height:418.0px;background:#fff;border:2px solid #0b5cbf;border-radius:6px;"></div>
<div class="a" style="left:264px;top:966px;width:832px;height:322px;overflow:hidden;">
<div class="a" style="left:0;top:64px;width:1000px;height:2px;background:#e0e0e0;"></div>
<div class="a" style="left:0;top:128px;width:1000px;height:2px;background:#e0e0e0;"></div>
<div class="a" style="left:0;top:192px;width:1000px;height:2px;background:#e0e0e0;"></div>
<div class="a" style="left:0;top:256px;width:1000px;height:2px;background:#e0e0e0;"></div>
<div class="a" style="left:239.7px;top:0;width:2px;height:400px;background:#e0e0e0;"></div>
<div class="a" style="left:640px;top:0;width:2px;height:400px;background:#e0e0e0;"></div>
<div class="t" style="left:12.3px;top:16.9px;font-size:25.7px;color:#22262b;font-weight:700;font-family:'Liberation Sans', sans-serif;">Short key</div>
<div class="t" style="left:254.6px;top:16.9px;font-size:25.6px;color:#22262b;font-weight:700;font-family:'Liberation Sans', sans-serif;">End date</div>
<div class="t" style="left:654.1px;top:16.4px;font-size:26.6px;color:#22262b;font-weight:700;font-family:'Liberation Sans', sans-serif;">Start date</div>
<div class="t" style="left:12.0px;top:85.7px;font-size:25.8px;color:#22262b;font-weight:400;font-family:'Liberation Mono', monospace;">37B-673</div>
<div class="t" style="left:654.0px;top:85.9px;font-size:27.8px;color:#22262b;font-weight:400;font-family:'Liberation Mono', monospace;">5/19/2025 12:48:41 PM</div>
<div class="t" style="left:12.0px;top:149.7px;font-size:25.8px;color:#22262b;font-weight:400;font-family:'Liberation Mono', monospace;">37B-672</div>
<div class="t" style="left:255.4px;top:149.9px;font-size:27.8px;color:#22262b;font-weight:400;font-family:'Liberation Mono', monospace;">5/19/2025 11:15:31 AM</div>
<div class="t" style="left:654.0px;top:149.9px;font-size:27.8px;color:#22262b;font-weight:400;font-family:'Liberation Mono', monospace;">5/19/2025 10:52:31 AM</div>
<div class="t" style="left:12.0px;top:213.7px;font-size:25.8px;color:#22262b;font-weight:400;font-family:'Liberation Mono', monospace;">37B-671</div>
<div class="t" style="left:255.4px;top:213.9px;font-size:27.8px;color:#22262b;font-weight:400;font-family:'Liberation Mono', monospace;">5/19/2025 9:52:31 AM</div>
<div class="t" style="left:654.0px;top:213.9px;font-size:27.8px;color:#22262b;font-weight:400;font-family:'Liberation Mono', monospace;">5/19/2025 9:15:31 AM</div>
<div class="t" style="left:12.0px;top:277.7px;font-size:25.8px;color:#22262b;font-weight:400;font-family:'Liberation Mono', monospace;">37B-670</div>
<div class="t" style="left:255.4px;top:277.9px;font-size:27.8px;color:#22262b;font-weight:400;font-family:'Liberation Mono', monospace;">5/19/2025 8:31:31 AM</div>
<div class="t" style="left:654.0px;top:277.9px;font-size:27.8px;color:#22262b;font-weight:400;font-family:'Liberation Mono', monospace;">5/19/2025 8:01:31 AM</div>
</div>
<div class="a" style="left:264.0px;top:1280.0px;width:370.0px;height:8.0px;background:#c1c1c1;"></div>
<div class="a" style="left:1096.0px;top:1032.0px;width:8.0px;height:16.0px;background:#c1c1c1;"></div>
<div class="t" style="top:893.2px;font-size:23.9px;color:#44546a;font-weight:700;font-family:'Liberation Sans', sans-serif;left:280.0px;">RPM-B612</div>
<div class="t" style="top:925.4px;font-size:18.9px;color:#9b9b9b;font-weight:400;font-family:'Liberation Sans', sans-serif;left:280.0px;">Event open: Last 1 day</div>
<div class="a" style="left:1040.4px;top:896.5px;width:47.6px;height:47.3px;background:#fff;border:2px solid #dedede;border-radius:6px;"></div>
<svg class="a" style="left:1061.8px;top:911.2px;" width="6" height="18" viewBox="0 0 6 18"><circle cx="3" cy="3" r="2" fill="#4a4a4a"/><circle cx="3" cy="9" r="2" fill="#4a4a4a"/><circle cx="3" cy="15" r="2" fill="#4a4a4a"/></svg>
<svg class="a" style="left:1079.0px;top:1263.0px;" width="20" height="20" viewBox="0 0 20 20"><path d="M20,0 L20,20 L0,20 Z" fill="#e0e0e0"/></svg>
<div class="a" style="left:1114.0px;top:872.0px;width:134.0px;height:418.0px;background:#fff;border:2px solid #dcdcdc;border-radius:6px;"></div>
<div class="t" style="top:901.9px;font-size:22.5px;color:#44546a;font-weight:700;font-family:'Liberation Sans', sans-serif;left:1132.0px;width:96px;overflow:hidden;white-space:nowrap;">BA:CONC.2</div>
<div class="a" style="left:1182.4px;top:890.6px;width:47.6px;height:47.3px;background:#fff;border:2px solid #dedede;border-radius:6px;"></div>
<svg class="a" style="left:1203.8px;top:905.3px;" width="6" height="18" viewBox="0 0 6 18"><circle cx="3" cy="3" r="2" fill="#4a4a4a"/><circle cx="3" cy="9" r="2" fill="#4a4a4a"/><circle cx="3" cy="15" r="2" fill="#4a4a4a"/></svg>
<div class="t" style="top:956.0px;font-size:22.3px;color:#0b5cbf;font-weight:700;font-family:'Liberation Sans', sans-serif;left:1132.6px;">42.5 DEG</div>
<div class="t" style="top:1006.7px;font-size:22.5px;color:#9b9b9b;font-weight:400;font-family:'Liberation Sans', sans-serif;left:1132.6px;">B…  NC.2</div>
<svg class="a" style="left:0.0px;top:0.0px;pointer-events:none;" width="2760" height="1800" viewBox="0 0 2760 1800"><defs><linearGradient id="s3" x1="0" y1="0" x2="0" y2="1"><stop offset="0" stop-color="#0b5cbf" stop-opacity="0.12"/><stop offset="1" stop-color="#0b5cbf" stop-opacity="0.0"/></linearGradient></defs><path d="M1133.5,1225.6 L1135.1,1221.0 L1136.8,1216.0 L1138.4,1213.5 L1140.1,1206.9 L1141.7,1203.8 L1143.4,1200.4 L1145.0,1193.9 L1146.7,1191.0 L1148.3,1187.1 L1150.0,1181.5 L1151.7,1178.2 L1153.4,1175.0 L1155.0,1170.2 L1156.7,1166.8 L1158.3,1162.1 L1159.9,1159.0 L1161.5,1155.5 L1163.2,1153.2 L1164.8,1151.1 L1166.4,1147.0 L1168.0,1144.2 L1169.5,1142.8 L1171.1,1143.3 L1172.6,1141.2 L1174.2,1141.3 L1175.7,1141.9 L1177.3,1141.6 L1178.8,1140.4 L1180.4,1139.2 L1181.9,1139.2 L1183.5,1138.7 L1185.0,1138.4 L1186.6,1139.5 L1188.2,1137.6 L1189.7,1139.1 L1191.3,1138.8 L1192.9,1136.4 L1194.5,1137.0 L1196.0,1137.0 L1197.6,1135.4 L1199.2,1136.2 L1201.3,1135.4 L1203.5,1131.2 L1205.1,1127.1 L1206.8,1120.6 L1208.4,1116.5 L1210.1,1112.0 L1211.7,1104.9 L1213.4,1099.0 L1215.0,1093.9 L1216.6,1090.2 L1218.2,1083.9 L1219.7,1079.1 L1221.3,1075.3 L1222.9,1071.5 L1224.4,1065.2 L1226.0,1060.3 L1227.6,1055.6 L1227.6,1248.0 L1133.5,1248.0 Z" fill="url(#s3)" stroke="none"/><path d="M1133.5,1225.6 L1135.1,1221.0 L1136.8,1216.0 L1138.4,1213.5 L1140.1,1206.9 L1141.7,1203.8 L1143.4,1200.4 L1145.0,1193.9 L1146.7,1191.0 L1148.3,1187.1 L1150.0,1181.5 L1151.7,1178.2 L1153.4,1175.0 L1155.0,1170.2 L1156.7,1166.8 L1158.3,1162.1 L1159.9,1159.0 L1161.5,1155.5 L1163.2,1153.2 L1164.8,1151.1 L1166.4,1147.0 L1168.0,1144.2 L1169.5,1142.8 L1171.1,1143.3 L1172.6,1141.2 L1174.2,1141.3 L1175.7,1141.9 L1177.3,1141.6 L1178.8,1140.4 L1180.4,1139.2 L1181.9,1139.2 L1183.5,1138.7 L1185.0,1138.4 L1186.6,1139.5 L1188.2,1137.6 L1189.7,1139.1 L1191.3,1138.8 L1192.9,1136.4 L1194.5,1137.0 L1196.0,1137.0 L1197.6,1135.4 L1199.2,1136.2 L1201.3,1135.4 L1203.5,1131.2 L1205.1,1127.1 L1206.8,1120.6 L1208.4,1116.5 L1210.1,1112.0 L1211.7,1104.9 L1213.4,1099.0 L1215.0,1093.9 L1216.6,1090.2 L1218.2,1083.9 L1219.7,1079.1 L1221.3,1075.3 L1222.9,1071.5 L1224.4,1065.2 L1226.0,1060.3 L1227.6,1055.6" fill="none" stroke="#0b5cbf" stroke-width="2.2" stroke-linejoin="round"/></svg>
<div class="t" style="top:1245.8px;font-size:23.9px;color:#9b9b9b;font-weight:400;font-family:'Liberation Mono', monospace;left:1132.6px;">5/19/…</div>
<div class="a" style="left:1132.0px;top:1264.0px;width:76.0px;height:8.0px;background:#c1c1c1;"></div>
<svg class="a" style="left:1221.0px;top:1263.0px;" width="20" height="20" viewBox="0 0 20 20"><path d="M20,0 L20,20 L0,20 Z" fill="#e0e0e0"/></svg>
<div class="a" style="left:1254.0px;top:872.0px;width:702.0px;height:418.0px;background:#fff;border:2px solid #dcdcdc;border-radius:6px;"></div>
<div class="t" style="top:895.0px;font-size:22.0px;color:#44546a;font-weight:700;font-family:'Liberation Sans', sans-serif;left:1271.5px;">Silo 12.c-res</div>
<div class="t" style="top:925.7px;font-size:18.7px;color:#9b9b9b;font-weight:400;font-family:'Liberation Sans', sans-serif;left:1271.5px;">Last 1 day</div>
<div class="a" style="left:1890.4px;top:896.8px;width:47.6px;height:47.3px;background:#fff;border:2px solid #dedede;border-radius:6px;"></div>
<svg class="a" style="left:1911.8px;top:911.5px;" width="6" height="18" viewBox="0 0 6 18"><circle cx="3" cy="3" r="2" fill="#4a4a4a"/><circle cx="3" cy="9" r="2" fill="#4a4a4a"/><circle cx="3" cy="15" r="2" fill="#4a4a4a"/></svg>
<svg class="a" style="left:1929.0px;top:1263.0px;" width="20" height="20" viewBox="0 0 20 20"><path d="M20,0 L20,20 L0,20 Z" fill="#e0e0e0"/></svg>
<div class="a" style="left:1334.0px;top:997.0px;width:98.3px;height:48.0px;background:#fff;border:2px solid #e0e0e0;border-radius:6px;"></div>
<div class="a" style="left:1342.5px;top:1011.0px;width:20.0px;height:20.0px;background:#b4d8fb;border-radius:50%;"></div>
<div class="t" style="top:1011.2px;font-size:19.5px;color:#22262b;font-weight:400;font-family:'Liberation Sans', sans-serif;left:1370.5px;">B…</div>
<div class="a" style="left:1439.7px;top:997.0px;width:98.3px;height:48.0px;background:#fff;border:2px solid #e0e0e0;border-radius:6px;"></div>
<div class="a" style="left:1448.2px;top:1011.0px;width:20.0px;height:20.0px;background:#e59abb;border-radius:50%;"></div>
<div class="t" style="top:1011.2px;font-size:19.5px;color:#22262b;font-weight:400;font-family:'Liberation Sans', sans-serif;left:1476.2px;">B…</div>
<div class="a" style="left:1546.0px;top:997.0px;width:98.0px;height:48.0px;background:#fff;border:2px solid #e0e0e0;border-radius:6px;"></div>
<div class="a" style="left:1554.5px;top:1011.0px;width:20.0px;height:20.0px;background:#2e820e;border-radius:50%;"></div>
<div class="t" style="top:1011.2px;font-size:19.5px;color:#22262b;font-weight:400;font-family:'Liberation Sans', sans-serif;left:1582.5px;">B…</div>
<div class="a" style="left:1652.2px;top:997.0px;width:97.8px;height:48.0px;background:#fff;border:2px solid #e0e0e0;border-radius:6px;"></div>
<div class="a" style="left:1660.7px;top:1011.0px;width:20.0px;height:20.0px;background:#5a0a86;border-radius:50%;"></div>
<div class="t" style="top:1011.2px;font-size:19.5px;color:#22262b;font-weight:400;font-family:'Liberation Sans', sans-serif;left:1688.7px;">C…</div>
<div class="a" style="left:1758.0px;top:997.0px;width:98.3px;height:48.0px;background:#fff;border:2px solid #e0e0e0;border-radius:6px;"></div>
<div class="a" style="left:1766.5px;top:1011.0px;width:20.0px;height:20.0px;background:#2e820e;border-radius:50%;"></div>
<div class="t" style="top:1011.2px;font-size:19.5px;color:#22262b;font-weight:400;font-family:'Liberation Sans', sans-serif;left:1794.5px;">B…</div>
<svg class="a" style="left:0.0px;top:0.0px;pointer-events:none;" width="2760" height="1800" viewBox="0 0 2760 1800"><rect x="1336.5" y="1061.9" width="31.2" height="169.5" fill="#fcf6fa" stroke="#e9a7c6" stroke-width="2"/><rect x="1370.5" y="1061.9" width="31.2" height="169.5" fill="#fcf6fa" stroke="#e9a7c6" stroke-width="2"/><rect x="1404.5" y="1061.9" width="31.2" height="169.5" fill="#fcf6fa" stroke="#e9a7c6" stroke-width="2"/><rect x="1438.5" y="1061.9" width="31.2" height="169.5" fill="#fcf6fa" stroke="#e9a7c6" stroke-width="2"/><rect x="1472.5" y="1061.9" width="31.2" height="169.5" fill="#fcf6fa" stroke="#e9a7c6" stroke-width="2"/><rect x="1506.5" y="1061.9" width="31.2" height="169.5" fill="#fcf6fa" stroke="#e9a7c6" stroke-width="2"/><rect x="1540.5" y="1061.9" width="31.2" height="169.5" fill="#fcf6fa" stroke="#e9a7c6" stroke-width="2"/><rect x="1574.5" y="1061.9" width="31.2" height="169.5" fill="#fcf6fa" stroke="#e9a7c6" stroke-width="2"/><rect x="1608.5" y="1061.9" width="31.2" height="169.5" fill="#fcf6fa" stroke="#e9a7c6" stroke-width="2"/><rect x="1642.5" y="1061.9" width="31.2" height="169.5" fill="#fcf6fa" stroke="#e9a7c6" stroke-width="2"/><rect x="1676.5" y="1061.9" width="31.2" height="169.5" fill="#fcf6fa" stroke="#e9a7c6" stroke-width="2"/><rect x="1710.5" y="1061.9" width="31.2" height="169.5" fill="#fcf6fa" stroke="#e9a7c6" stroke-width="2"/><rect x="1744.5" y="1061.9" width="31.2" height="169.5" fill="#fcf6fa" stroke="#e9a7c6" stroke-width="2"/><rect x="1778.5" y="1061.9" width="31.2" height="169.5" fill="#fcf6fa" stroke="#e9a7c6" stroke-width="2"/><rect x="1812.5" y="1061.9" width="31.2" height="169.5" fill="#fcf6fa" stroke="#e9a7c6" stroke-width="2"/><rect x="1846.5" y="1061.9" width="31.2" height="169.5" fill="#fcf6fa" stroke="#e9a7c6" stroke-width="2"/><rect x="1880.5" y="1061.9" width="31.2" height="169.5" fill="#fcf6fa" stroke="#e9a7c6" stroke-width="2"/><rect x="1914.5" y="1061.9" width="22.0" height="169.5" fill="#fcf6fa" stroke="#e9a7c6" stroke-width="2"/><path d="M1334.5,1230.9 L1336.5,1231.0 L1337.5,1231.3 L1338.8,1219.8 L1340.1,1207.5 L1341.4,1195.7 L1342.7,1184.0 L1344.0,1172.7 L1345.3,1160.3 L1346.7,1149.2 L1348.0,1137.3 L1349.3,1125.0 L1350.6,1113.6 L1351.9,1101.7 L1353.2,1089.9 L1354.5,1078.7 L1356.0,1075.9 L1357.5,1074.0 L1359.0,1101.0 L1360.5,1126.7 L1362.0,1152.6 L1363.5,1178.9 L1365.0,1205.1 L1366.5,1231.4 L1367.8,1231.1 L1369.2,1231.1 L1370.5,1231.4 L1370.5,1231.4 L1371.5,1231.4 L1372.8,1220.4 L1374.1,1208.6 L1375.4,1197.1 L1376.7,1186.4 L1378.0,1175.2 L1379.3,1162.9 L1380.7,1152.3 L1382.0,1141.1 L1383.3,1129.5 L1384.6,1117.7 L1385.9,1107.0 L1387.2,1095.6 L1388.5,1083.7 L1390.0,1082.3 L1391.5,1079.9 L1393.0,1105.0 L1394.5,1130.5 L1396.0,1155.6 L1397.5,1180.9 L1399.0,1206.4 L1400.5,1231.4 L1401.8,1231.4 L1403.2,1231.4 L1404.5,1231.4 L1404.5,1231.4 L1405.5,1231.2 L1406.8,1219.3 L1408.1,1208.0 L1409.4,1196.2 L1410.7,1184.5 L1412.0,1172.2 L1413.3,1160.5 L1414.7,1149.5 L1416.0,1137.4 L1417.3,1125.7 L1418.6,1113.4 L1419.9,1101.9 L1421.2,1090.7 L1422.5,1078.6 L1424.0,1077.1 L1425.5,1074.4 L1427.0,1100.8 L1428.5,1127.2 L1430.0,1153.0 L1431.5,1179.5 L1433.0,1205.3 L1434.5,1231.0 L1435.8,1231.0 L1437.2,1231.4 L1438.5,1231.0 L1438.5,1231.1 L1439.5,1231.2 L1440.8,1219.9 L1442.1,1208.4 L1443.4,1196.3 L1444.7,1184.7 L1446.0,1173.3 L1447.3,1161.1 L1448.7,1149.5 L1450.0,1138.1 L1451.3,1126.4 L1452.6,1114.1 L1453.9,1102.5 L1455.2,1090.9 L1456.5,1079.8 L1458.0,1077.8 L1459.5,1076.2 L1461.0,1102.0 L1462.5,1127.4 L1464.0,1153.8 L1465.5,1180.0 L1467.0,1205.3 L1468.5,1230.9 L1469.8,1231.3 L1471.2,1231.2 L1472.5,1231.1 L1472.5,1230.9 L1473.5,1231.0 L1474.8,1220.6 L1476.1,1208.6 L1477.4,1198.0 L1478.7,1186.4 L1480.0,1175.2 L1481.3,1164.7 L1482.7,1153.0 L1484.0,1141.7 L1485.3,1130.8 L1486.6,1119.9 L1487.9,1108.5 L1489.2,1097.7 L1490.5,1086.0 L1492.0,1084.3 L1493.5,1082.6 L1495.0,1107.2 L1496.5,1132.3 L1498.0,1156.8 L1499.5,1181.4 L1501.0,1206.2 L1502.5,1231.4 L1503.8,1231.4 L1505.2,1231.4 L1506.5,1231.4 L1506.5,1231.4 L1507.5,1231.1 L1508.8,1220.2 L1510.1,1207.8 L1511.4,1196.5 L1512.7,1184.7 L1514.0,1173.3 L1515.3,1161.7 L1516.7,1150.2 L1518.0,1138.9 L1519.3,1127.1 L1520.6,1115.2 L1521.9,1104.2 L1523.2,1092.5 L1524.5,1081.0 L1526.0,1078.4 L1527.5,1077.0 L1529.0,1103.1 L1530.5,1128.2 L1532.0,1153.9 L1533.5,1180.2 L1535.0,1205.5 L1536.5,1231.3 L1537.8,1231.4 L1539.2,1231.3 L1540.5,1231.1 L1540.5,1231.1 L1541.5,1231.2 L1542.8,1219.9 L1544.1,1207.9 L1545.4,1196.6 L1546.7,1184.2 L1548.0,1172.7 L1549.3,1161.4 L1550.7,1149.6 L1552.0,1137.9 L1553.3,1126.6 L1554.6,1114.3 L1555.9,1102.5 L1557.2,1090.7 L1558.5,1079.4 L1560.0,1077.4 L1561.5,1075.6 L1563.0,1101.1 L1564.5,1127.1 L1566.0,1153.4 L1567.5,1179.7 L1569.0,1205.2 L1570.5,1231.4 L1571.8,1231.4 L1573.2,1231.3 L1574.5,1231.4 L1574.5,1231.1 L1575.5,1231.4 L1576.8,1221.6 L1578.1,1211.1 L1579.4,1200.8 L1580.7,1190.4 L1582.0,1180.7 L1583.3,1170.2 L1584.7,1160.2 L1586.0,1150.2 L1587.3,1140.4 L1588.6,1130.0 L1589.9,1119.7 L1591.2,1109.9 L1592.5,1099.2 L1594.0,1097.4 L1595.5,1095.8 L1597.0,1118.3 L1598.5,1140.6 L1600.0,1163.4 L1601.5,1186.5 L1603.0,1208.5 L1604.5,1231.4 L1605.8,1230.9 L1607.2,1231.4 L1608.5,1231.4 L1608.5,1231.2 L1609.5,1231.4 L1610.8,1219.6 L1612.1,1206.8 L1613.4,1194.9 L1614.7,1183.1 L1616.0,1171.5 L1617.3,1158.6 L1618.7,1146.5 L1620.0,1134.6 L1621.3,1122.3 L1622.6,1110.6 L1623.9,1098.7 L1625.2,1086.5 L1626.5,1074.1 L1628.0,1072.1 L1629.5,1071.0 L1631.0,1097.4 L1632.5,1124.3 L1634.0,1151.0 L1635.5,1178.0 L1637.0,1205.0 L1638.5,1231.4 L1639.8,1231.4 L1641.2,1231.2 L1642.5,1231.1 L1642.5,1231.0 L1643.5,1231.4 L1644.8,1220.2 L1646.1,1209.9 L1647.4,1199.5 L1648.7,1188.2 L1650.0,1177.5 L1651.3,1166.7 L1652.7,1156.5 L1654.0,1145.5 L1655.3,1134.8 L1656.6,1123.3 L1657.9,1113.2 L1659.2,1102.2 L1660.5,1091.3 L1662.0,1089.9 L1663.5,1087.9 L1665.0,1112.0 L1666.5,1135.8 L1668.0,1159.9 L1669.5,1183.4 L1671.0,1207.5 L1672.5,1231.4 L1673.8,1231.4 L1675.2,1231.0 L1676.5,1231.4 L1676.5,1231.4 L1677.5,1231.4 L1678.8,1218.9 L1680.1,1206.9 L1681.4,1194.6 L1682.7,1182.6 L1684.0,1171.0 L1685.3,1158.3 L1686.7,1146.0 L1688.0,1133.8 L1689.3,1121.8 L1690.6,1109.9 L1691.9,1097.4 L1693.2,1085.0 L1694.5,1072.9 L1696.0,1071.0 L1697.5,1069.8 L1699.0,1096.1 L1700.5,1123.7 L1702.0,1150.0 L1703.5,1177.7 L1705.0,1204.2 L1706.5,1231.4 L1707.8,1231.3 L1709.2,1231.0 L1710.5,1231.0 L1710.5,1231.4 L1711.5,1231.4 L1712.8,1220.4 L1714.1,1209.3 L1715.4,1198.7 L1716.7,1187.5 L1718.0,1176.1 L1719.3,1165.7 L1720.7,1154.4 L1722.0,1144.0 L1723.3,1132.7 L1724.6,1122.0 L1725.9,1110.4 L1727.2,1100.0 L1728.5,1088.9 L1730.0,1087.3 L1731.5,1085.4 L1733.0,1109.5 L1734.5,1133.9 L1736.0,1158.5 L1737.5,1182.4 L1739.0,1207.1 L1740.5,1231.4 L1741.8,1231.4 L1743.2,1231.4 L1744.5,1231.4 L1744.5,1231.4 L1745.5,1231.2 L1746.8,1219.0 L1748.1,1207.5 L1749.4,1195.1 L1750.7,1183.9 L1752.0,1171.4 L1753.3,1159.4 L1754.7,1147.7 L1756.0,1135.8 L1757.3,1123.0 L1758.6,1111.4 L1759.9,1099.1 L1761.2,1087.4 L1762.5,1075.0 L1764.0,1073.9 L1765.5,1071.5 L1767.0,1098.1 L1768.5,1125.3 L1770.0,1151.8 L1771.5,1178.0 L1773.0,1204.8 L1774.5,1231.4 L1775.8,1231.1 L1777.2,1231.0 L1778.5,1231.4 L1778.5,1231.1 L1779.5,1231.4 L1780.8,1220.0 L1782.1,1208.2 L1783.4,1196.3 L1784.7,1185.2 L1786.0,1173.5 L1787.3,1161.1 L1788.7,1150.3 L1790.0,1138.4 L1791.3,1126.4 L1792.6,1114.7 L1793.9,1103.0 L1795.2,1092.0 L1796.5,1080.4 L1798.0,1078.0 L1799.5,1076.0 L1801.0,1101.7 L1802.5,1127.9 L1804.0,1153.6 L1805.5,1179.3 L1807.0,1205.3 L1808.5,1231.4 L1809.8,1231.0 L1811.2,1231.3 L1812.5,1231.4 L1812.5,1231.1 L1813.5,1230.9 L1814.8,1220.8 L1816.1,1210.8 L1817.4,1201.5 L1818.7,1191.2 L1820.0,1180.9 L1821.3,1171.0 L1822.7,1160.3 L1824.0,1150.1 L1825.3,1140.5 L1826.6,1130.1 L1827.9,1120.3 L1829.2,1109.6 L1830.5,1099.5 L1832.0,1098.0 L1833.5,1096.2 L1835.0,1118.1 L1836.5,1140.8 L1838.0,1163.1 L1839.5,1186.3 L1841.0,1209.2 L1842.5,1231.4 L1843.8,1231.0 L1845.2,1231.4 L1846.5,1231.4 L1846.5,1231.0 L1847.5,1231.4 L1848.8,1219.9 L1850.1,1208.1 L1851.4,1196.2 L1852.7,1184.4 L1854.0,1173.0 L1855.3,1161.3 L1856.7,1149.5 L1858.0,1138.2 L1859.3,1126.6 L1860.6,1115.2 L1861.9,1103.5 L1863.2,1091.4 L1864.5,1080.0 L1866.0,1077.7 L1867.5,1075.9 L1869.0,1101.9 L1870.5,1128.3 L1872.0,1153.2 L1873.5,1179.5 L1875.0,1205.3 L1876.5,1231.4 L1877.8,1231.4 L1879.2,1231.4 L1880.5,1231.0 L1880.5,1231.4 L1881.5,1231.4 L1882.8,1220.5 L1884.1,1209.6 L1885.4,1198.2 L1886.7,1187.3 L1888.0,1176.5 L1889.3,1164.7 L1890.7,1153.9 L1892.0,1143.3 L1893.3,1132.5 L1894.6,1121.5 L1895.9,1109.8 L1897.2,1099.4 L1898.5,1087.7 L1900.0,1086.0 L1901.5,1083.8 L1903.0,1108.8 L1904.5,1133.1 L1906.0,1157.9 L1907.5,1182.8 L1909.0,1206.5 L1910.5,1231.4 L1911.8,1231.4 L1913.2,1231.2 L1914.5,1230.9 L1914.5,1231.4 L1915.5,1231.4 L1916.8,1221.0 L1918.1,1210.0 L1919.4,1200.3 L1920.7,1189.3 L1922.0,1178.9 L1923.3,1168.5 L1924.7,1157.9 L1926.0,1147.9 L1927.3,1136.9 L1928.6,1126.6 L1929.9,1116.2 L1931.2,1105.9 L1932.5,1094.6 L1934.0,1092.9 L1935.5,1091.2 L1936.5,1231.4 L1334.5,1231.4 Z" fill="#e3e5e2"/><path d="M1334.5,1230.7 L1336.5,1230.9 L1337.5,1231.1 L1339.2,1205.6 L1340.8,1178.6 L1342.5,1152.5 L1343.9,1151.0 L1345.4,1151.1 L1346.8,1151.1 L1348.2,1150.0 L1349.6,1150.2 L1351.1,1149.5 L1352.5,1148.2 L1354.0,1116.1 L1355.5,1085.8 L1357.0,1088.5 L1358.5,1092.1 L1359.8,1116.3 L1361.2,1139.6 L1362.5,1162.7 L1363.8,1186.0 L1365.2,1207.8 L1366.5,1230.7 L1367.8,1230.8 L1369.2,1231.4 L1370.5,1230.8 L1370.5,1230.9 L1371.5,1230.6 L1373.2,1205.8 L1374.8,1180.9 L1376.5,1156.5 L1377.9,1155.6 L1379.4,1155.3 L1380.8,1155.8 L1382.2,1154.0 L1383.6,1154.5 L1385.1,1153.8 L1386.5,1153.0 L1388.0,1114.9 L1389.5,1077.0 L1391.0,1080.5 L1392.5,1083.7 L1393.8,1108.4 L1395.2,1132.8 L1396.5,1157.6 L1397.8,1183.1 L1399.2,1206.7 L1400.5,1230.7 L1401.8,1231.4 L1403.2,1231.4 L1404.5,1231.3 L1404.5,1231.4 L1405.5,1230.7 L1407.2,1209.1 L1408.8,1188.5 L1410.5,1166.0 L1411.9,1165.8 L1413.4,1165.4 L1414.8,1164.6 L1416.2,1163.8 L1417.6,1163.2 L1419.1,1164.2 L1420.5,1163.2 L1422.0,1120.4 L1423.5,1076.4 L1425.0,1081.0 L1426.5,1084.6 L1427.8,1108.8 L1429.2,1133.2 L1430.5,1157.7 L1431.8,1181.8 L1433.2,1206.6 L1434.5,1231.4 L1435.8,1230.9 L1437.2,1231.4 L1438.5,1231.4 L1438.5,1231.4 L1439.5,1231.4 L1441.2,1209.1 L1442.8,1185.7 L1444.5,1163.4 L1445.9,1162.4 L1447.4,1161.9 L1448.8,1162.9 L1450.2,1161.8 L1451.6,1161.8 L1453.1,1161.0 L1454.5,1159.7 L1456.0,1118.7 L1457.5,1076.5 L1459.0,1079.6 L1460.5,1082.7 L1461.8,1107.8 L1463.2,1132.2 L1464.5,1157.2 L1465.8,1181.4 L1467.2,1207.1 L1468.5,1231.4 L1469.8,1230.9 L1471.2,1231.4 L1472.5,1231.4 L1472.5,1231.4 L1473.5,1231.4 L1475.2,1208.6 L1476.8,1186.7 L1478.5,1162.9 L1479.9,1163.8 L1481.4,1162.0 L1482.8,1161.2 L1484.2,1162.1 L1485.6,1161.3 L1487.1,1160.6 L1488.5,1160.3 L1490.0,1118.7 L1491.5,1077.4 L1493.0,1081.5 L1494.5,1086.3 L1495.8,1110.7 L1497.2,1133.8 L1498.5,1158.4 L1499.8,1182.7 L1501.2,1207.7 L1502.5,1230.6 L1503.8,1231.4 L1505.2,1231.0 L1506.5,1231.4 L1506.5,1230.8 L1507.5,1230.7 L1509.2,1210.1 L1510.8,1187.7 L1512.5,1166.5 L1513.9,1165.8 L1515.4,1165.1 L1516.8,1163.5 L1518.2,1163.8 L1519.6,1163.9 L1521.1,1162.6 L1522.5,1161.3 L1524.0,1116.1 L1525.5,1071.9 L1527.0,1075.7 L1528.5,1078.3 L1529.8,1103.8 L1531.2,1129.9 L1532.5,1155.0 L1533.8,1180.0 L1535.2,1206.7 L1536.5,1231.4 L1537.8,1231.2 L1539.2,1230.6 L1540.5,1231.4 L1540.5,1231.4 L1541.5,1230.9 L1543.2,1208.8 L1544.8,1187.8 L1546.5,1166.1 L1547.9,1164.7 L1549.4,1164.3 L1550.8,1164.0 L1552.2,1163.3 L1553.6,1162.1 L1555.1,1161.8 L1556.5,1161.2 L1558.0,1118.2 L1559.5,1075.1 L1561.0,1079.4 L1562.5,1082.9 L1563.8,1108.6 L1565.2,1132.4 L1566.5,1158.1 L1567.8,1182.5 L1569.2,1206.3 L1570.5,1230.8 L1571.8,1231.4 L1573.2,1231.4 L1574.5,1231.4 L1574.5,1230.8 L1575.5,1231.4 L1577.2,1207.6 L1578.8,1182.9 L1580.5,1158.4 L1581.9,1159.0 L1583.4,1157.4 L1584.8,1158.0 L1586.2,1157.0 L1587.6,1155.3 L1589.1,1155.5 L1590.5,1154.5 L1592.0,1111.3 L1593.5,1066.6 L1595.0,1069.8 L1596.5,1075.0 L1597.8,1100.9 L1599.2,1126.8 L1600.5,1152.9 L1601.8,1178.3 L1603.2,1206.0 L1604.5,1231.1 L1605.8,1231.4 L1607.2,1231.4 L1608.5,1231.4 L1608.5,1230.6 L1609.5,1231.4 L1611.2,1204.7 L1612.8,1177.8 L1614.5,1151.9 L1615.9,1151.3 L1617.4,1150.6 L1618.8,1150.3 L1620.2,1148.9 L1621.6,1148.0 L1623.1,1147.8 L1624.5,1147.7 L1626.0,1112.2 L1627.5,1076.3 L1629.0,1079.9 L1630.5,1083.6 L1631.8,1108.4 L1633.2,1132.9 L1634.5,1156.7 L1635.8,1182.2 L1637.2,1206.4 L1638.5,1230.7 L1639.8,1231.4 L1641.2,1231.4 L1642.5,1231.1 L1642.5,1231.4 L1643.5,1231.4 L1645.2,1207.3 L1646.8,1183.3 L1648.5,1158.6 L1649.9,1157.1 L1651.4,1157.4 L1652.8,1156.4 L1654.2,1156.0 L1655.6,1155.9 L1657.1,1154.6 L1658.5,1154.7 L1660.0,1111.2 L1661.5,1065.8 L1663.0,1070.8 L1664.5,1074.4 L1665.8,1100.1 L1667.2,1126.9 L1668.5,1152.0 L1669.8,1178.4 L1671.2,1206.0 L1672.5,1231.4 L1673.8,1230.9 L1675.2,1230.8 L1676.5,1231.3 L1676.5,1231.4 L1677.5,1231.4 L1679.2,1206.4 L1680.8,1182.6 L1682.5,1157.8 L1683.9,1157.4 L1685.4,1157.5 L1686.8,1155.6 L1688.2,1156.2 L1689.6,1155.5 L1691.1,1154.3 L1692.5,1153.5 L1694.0,1120.1 L1695.5,1085.8 L1697.0,1088.8 L1698.5,1092.2 L1699.8,1116.0 L1701.2,1139.3 L1702.5,1161.9 L1703.8,1185.1 L1705.2,1207.7 L1706.5,1230.8 L1707.8,1231.0 L1709.2,1231.4 L1710.5,1230.8 L1710.5,1230.9 L1711.5,1231.3 L1713.2,1203.8 L1714.8,1176.8 L1716.5,1150.5 L1717.9,1149.2 L1719.4,1149.2 L1720.8,1147.9 L1722.2,1148.0 L1723.6,1147.8 L1725.1,1146.8 L1726.5,1145.9 L1728.0,1108.6 L1729.5,1071.9 L1731.0,1075.9 L1732.5,1079.2 L1733.8,1105.0 L1735.2,1130.4 L1736.5,1154.9 L1737.8,1181.1 L1739.2,1206.9 L1740.5,1231.4 L1741.8,1231.3 L1743.2,1231.4 L1744.5,1231.4 L1744.5,1231.4 L1745.5,1231.4 L1747.2,1208.6 L1748.8,1185.6 L1750.5,1162.0 L1751.9,1160.8 L1753.4,1159.9 L1754.8,1160.0 L1756.2,1159.8 L1757.6,1158.5 L1759.1,1158.1 L1760.5,1157.2 L1762.0,1111.7 L1763.5,1066.6 L1765.0,1071.4 L1766.5,1073.9 L1767.8,1100.2 L1769.2,1126.7 L1770.5,1153.7 L1771.8,1178.7 L1773.2,1204.5 L1774.5,1230.7 L1775.8,1231.2 L1777.2,1230.6 L1778.5,1231.4 L1778.5,1230.7 L1779.5,1230.9 L1781.2,1205.7 L1782.8,1181.0 L1784.5,1155.7 L1785.9,1155.3 L1787.4,1154.8 L1788.8,1154.3 L1790.2,1154.4 L1791.6,1153.5 L1793.1,1152.7 L1794.5,1151.8 L1796.0,1112.3 L1797.5,1071.4 L1799.0,1075.3 L1800.5,1078.7 L1801.8,1103.8 L1803.2,1129.1 L1804.5,1154.4 L1805.8,1180.3 L1807.2,1205.8 L1808.5,1231.4 L1809.8,1230.9 L1811.2,1231.4 L1812.5,1231.4 L1812.5,1231.4 L1813.5,1231.4 L1815.2,1209.2 L1816.8,1187.9 L1818.5,1167.1 L1819.9,1166.7 L1821.4,1166.7 L1822.8,1165.9 L1824.2,1164.5 L1825.6,1163.8 L1827.1,1164.3 L1828.5,1162.5 L1830.0,1121.9 L1831.5,1078.4 L1833.0,1083.0 L1834.5,1087.2 L1835.8,1110.1 L1837.2,1134.3 L1838.5,1159.2 L1839.8,1183.5 L1841.2,1206.5 L1842.5,1231.3 L1843.8,1231.4 L1845.2,1231.4 L1846.5,1231.2 L1846.5,1230.6 L1847.5,1231.4 L1849.2,1204.5 L1850.8,1177.4 L1852.5,1150.7 L1853.9,1150.1 L1855.4,1149.4 L1856.8,1149.0 L1858.2,1148.5 L1859.6,1148.3 L1861.1,1147.8 L1862.5,1146.0 L1864.0,1116.8 L1865.5,1085.6 L1867.0,1089.7 L1868.5,1093.1 L1869.8,1116.2 L1871.2,1139.3 L1872.5,1162.4 L1873.8,1184.8 L1875.2,1208.1 L1876.5,1231.3 L1877.8,1231.2 L1879.2,1231.4 L1880.5,1230.7 L1880.5,1231.4 L1881.5,1231.4 L1883.2,1210.2 L1884.8,1188.4 L1886.5,1167.2 L1887.9,1166.0 L1889.4,1165.2 L1890.8,1165.3 L1892.2,1164.2 L1893.6,1163.7 L1895.1,1163.9 L1896.5,1163.0 L1898.0,1120.6 L1899.5,1078.9 L1901.0,1083.5 L1902.5,1087.2 L1903.8,1111.6 L1905.2,1135.5 L1906.5,1158.8 L1907.8,1183.6 L1909.2,1207.9 L1910.5,1231.4 L1911.8,1231.4 L1913.2,1230.8 L1914.5,1231.0 L1914.5,1230.9 L1915.5,1231.4 L1917.2,1205.8 L1918.8,1179.7 L1920.5,1153.3 L1921.9,1153.1 L1923.4,1153.0 L1924.8,1151.4 L1926.2,1152.3 L1927.6,1151.4 L1929.1,1151.2 L1930.5,1150.7 L1932.0,1109.5 L1933.5,1068.6 L1935.0,1072.5 L1936.5,1076.5" fill="none" stroke="#b4d8fb" stroke-width="2.6" stroke-linejoin="round"/><path d="M1334.5,1230.9 L1336.5,1231.0 L1337.5,1231.3 L1338.8,1219.8 L1340.1,1207.5 L1341.4,1195.7 L1342.7,1184.0 L1344.0,1172.7 L1345.3,1160.3 L1346.7,1149.2 L1348.0,1137.3 L1349.3,1125.0 L1350.6,1113.6 L1351.9,1101.7 L1353.2,1089.9 L1354.5,1078.7 L1356.0,1075.9 L1357.5,1074.0 L1359.0,1101.0 L1360.5,1126.7 L1362.0,1152.6 L1363.5,1178.9 L1365.0,1205.1 L1366.5,1231.4 L1367.8,1231.1 L1369.2,1231.1 L1370.5,1231.4 L1370.5,1231.4 L1371.5,1231.4 L1372.8,1220.4 L1374.1,1208.6 L1375.4,1197.1 L1376.7,1186.4 L1378.0,1175.2 L1379.3,1162.9 L1380.7,1152.3 L1382.0,1141.1 L1383.3,1129.5 L1384.6,1117.7 L1385.9,1107.0 L1387.2,1095.6 L1388.5,1083.7 L1390.0,1082.3 L1391.5,1079.9 L1393.0,1105.0 L1394.5,1130.5 L1396.0,1155.6 L1397.5,1180.9 L1399.0,1206.4 L1400.5,1231.4 L1401.8,1231.4 L1403.2,1231.4 L1404.5,1231.4 L1404.5,1231.4 L1405.5,1231.2 L1406.8,1219.3 L1408.1,1208.0 L1409.4,1196.2 L1410.7,1184.5 L1412.0,1172.2 L1413.3,1160.5 L1414.7,1149.5 L1416.0,1137.4 L1417.3,1125.7 L1418.6,1113.4 L1419.9,1101.9 L1421.2,1090.7 L1422.5,1078.6 L1424.0,1077.1 L1425.5,1074.4 L1427.0,1100.8 L1428.5,1127.2 L1430.0,1153.0 L1431.5,1179.5 L1433.0,1205.3 L1434.5,1231.0 L1435.8,1231.0 L1437.2,1231.4 L1438.5,1231.0 L1438.5,1231.1 L1439.5,1231.2 L1440.8,1219.9 L1442.1,1208.4 L1443.4,1196.3 L1444.7,1184.7 L1446.0,1173.3 L1447.3,1161.1 L1448.7,1149.5 L1450.0,1138.1 L1451.3,1126.4 L1452.6,1114.1 L1453.9,1102.5 L1455.2,1090.9 L1456.5,1079.8 L1458.0,1077.8 L1459.5,1076.2 L1461.0,1102.0 L1462.5,1127.4 L1464.0,1153.8 L1465.5,1180.0 L1467.0,1205.3 L1468.5,1230.9 L1469.8,1231.3 L1471.2,1231.2 L1472.5,1231.1 L1472.5,1230.9 L1473.5,1231.0 L1474.8,1220.6 L1476.1,1208.6 L1477.4,1198.0 L1478.7,1186.4 L1480.0,1175.2 L1481.3,1164.7 L1482.7,1153.0 L1484.0,1141.7 L1485.3,1130.8 L1486.6,1119.9 L1487.9,1108.5 L1489.2,1097.7 L1490.5,1086.0 L1492.0,1084.3 L1493.5,1082.6 L1495.0,1107.2 L1496.5,1132.3 L1498.0,1156.8 L1499.5,1181.4 L1501.0,1206.2 L1502.5,1231.4 L1503.8,1231.4 L1505.2,1231.4 L1506.5,1231.4 L1506.5,1231.4 L1507.5,1231.1 L1508.8,1220.2 L1510.1,1207.8 L1511.4,1196.5 L1512.7,1184.7 L1514.0,1173.3 L1515.3,1161.7 L1516.7,1150.2 L1518.0,1138.9 L1519.3,1127.1 L1520.6,1115.2 L1521.9,1104.2 L1523.2,1092.5 L1524.5,1081.0 L1526.0,1078.4 L1527.5,1077.0 L1529.0,1103.1 L1530.5,1128.2 L1532.0,1153.9 L1533.5,1180.2 L1535.0,1205.5 L1536.5,1231.3 L1537.8,1231.4 L1539.2,1231.3 L1540.5,1231.1 L1540.5,1231.1 L1541.5,1231.2 L1542.8,1219.9 L1544.1,1207.9 L1545.4,1196.6 L1546.7,1184.2 L1548.0,1172.7 L1549.3,1161.4 L1550.7,1149.6 L1552.0,1137.9 L1553.3,1126.6 L1554.6,1114.3 L1555.9,1102.5 L1557.2,1090.7 L1558.5,1079.4 L1560.0,1077.4 L1561.5,1075.6 L1563.0,1101.1 L1564.5,1127.1 L1566.0,1153.4 L1567.5,1179.7 L1569.0,1205.2 L1570.5,1231.4 L1571.8,1231.4 L1573.2,1231.3 L1574.5,1231.4 L1574.5,1231.1 L1575.5,1231.4 L1576.8,1221.6 L1578.1,1211.1 L1579.4,1200.8 L1580.7,1190.4 L1582.0,1180.7 L1583.3,1170.2 L1584.7,1160.2 L1586.0,1150.2 L1587.3,1140.4 L1588.6,1130.0 L1589.9,1119.7 L1591.2,1109.9 L1592.5,1099.2 L1594.0,1097.4 L1595.5,1095.8 L1597.0,1118.3 L1598.5,1140.6 L1600.0,1163.4 L1601.5,1186.5 L1603.0,1208.5 L1604.5,1231.4 L1605.8,1230.9 L1607.2,1231.4 L1608.5,1231.4 L1608.5,1231.2 L1609.5,1231.4 L1610.8,1219.6 L1612.1,1206.8 L1613.4,1194.9 L1614.7,1183.1 L1616.0,1171.5 L1617.3,1158.6 L1618.7,1146.5 L1620.0,1134.6 L1621.3,1122.3 L1622.6,1110.6 L1623.9,1098.7 L1625.2,1086.5 L1626.5,1074.1 L1628.0,1072.1 L1629.5,1071.0 L1631.0,1097.4 L1632.5,1124.3 L1634.0,1151.0 L1635.5,1178.0 L1637.0,1205.0 L1638.5,1231.4 L1639.8,1231.4 L1641.2,1231.2 L1642.5,1231.1 L1642.5,1231.0 L1643.5,1231.4 L1644.8,1220.2 L1646.1,1209.9 L1647.4,1199.5 L1648.7,1188.2 L1650.0,1177.5 L1651.3,1166.7 L1652.7,1156.5 L1654.0,1145.5 L1655.3,1134.8 L1656.6,1123.3 L1657.9,1113.2 L1659.2,1102.2 L1660.5,1091.3 L1662.0,1089.9 L1663.5,1087.9 L1665.0,1112.0 L1666.5,1135.8 L1668.0,1159.9 L1669.5,1183.4 L1671.0,1207.5 L1672.5,1231.4 L1673.8,1231.4 L1675.2,1231.0 L1676.5,1231.4 L1676.5,1231.4 L1677.5,1231.4 L1678.8,1218.9 L1680.1,1206.9 L1681.4,1194.6 L1682.7,1182.6 L1684.0,1171.0 L1685.3,1158.3 L1686.7,1146.0 L1688.0,1133.8 L1689.3,1121.8 L1690.6,1109.9 L1691.9,1097.4 L1693.2,1085.0 L1694.5,1072.9 L1696.0,1071.0 L1697.5,1069.8 L1699.0,1096.1 L1700.5,1123.7 L1702.0,1150.0 L1703.5,1177.7 L1705.0,1204.2 L1706.5,1231.4 L1707.8,1231.3 L1709.2,1231.0 L1710.5,1231.0 L1710.5,1231.4 L1711.5,1231.4 L1712.8,1220.4 L1714.1,1209.3 L1715.4,1198.7 L1716.7,1187.5 L1718.0,1176.1 L1719.3,1165.7 L1720.7,1154.4 L1722.0,1144.0 L1723.3,1132.7 L1724.6,1122.0 L1725.9,1110.4 L1727.2,1100.0 L1728.5,1088.9 L1730.0,1087.3 L1731.5,1085.4 L1733.0,1109.5 L1734.5,1133.9 L1736.0,1158.5 L1737.5,1182.4 L1739.0,1207.1 L1740.5,1231.4 L1741.8,1231.4 L1743.2,1231.4 L1744.5,1231.4 L1744.5,1231.4 L1745.5,1231.2 L1746.8,1219.0 L1748.1,1207.5 L1749.4,1195.1 L1750.7,1183.9 L1752.0,1171.4 L1753.3,1159.4 L1754.7,1147.7 L1756.0,1135.8 L1757.3,1123.0 L1758.6,1111.4 L1759.9,1099.1 L1761.2,1087.4 L1762.5,1075.0 L1764.0,1073.9 L1765.5,1071.5 L1767.0,1098.1 L1768.5,1125.3 L1770.0,1151.8 L1771.5,1178.0 L1773.0,1204.8 L1774.5,1231.4 L1775.8,1231.1 L1777.2,1231.0 L1778.5,1231.4 L1778.5,1231.1 L1779.5,1231.4 L1780.8,1220.0 L1782.1,1208.2 L1783.4,1196.3 L1784.7,1185.2 L1786.0,1173.5 L1787.3,1161.1 L1788.7,1150.3 L1790.0,1138.4 L1791.3,1126.4 L1792.6,1114.7 L1793.9,1103.0 L1795.2,1092.0 L1796.5,1080.4 L1798.0,1078.0 L1799.5,1076.0 L1801.0,1101.7 L1802.5,1127.9 L1804.0,1153.6 L1805.5,1179.3 L1807.0,1205.3 L1808.5,1231.4 L1809.8,1231.0 L1811.2,1231.3 L1812.5,1231.4 L1812.5,1231.1 L1813.5,1230.9 L1814.8,1220.8 L1816.1,1210.8 L1817.4,1201.5 L1818.7,1191.2 L1820.0,1180.9 L1821.3,1171.0 L1822.7,1160.3 L1824.0,1150.1 L1825.3,1140.5 L1826.6,1130.1 L1827.9,1120.3 L1829.2,1109.6 L1830.5,1099.5 L1832.0,1098.0 L1833.5,1096.2 L1835.0,1118.1 L1836.5,1140.8 L1838.0,1163.1 L1839.5,1186.3 L1841.0,1209.2 L1842.5,1231.4 L1843.8,1231.0 L1845.2,1231.4 L1846.5,1231.4 L1846.5,1231.0 L1847.5,1231.4 L1848.8,1219.9 L1850.1,1208.1 L1851.4,1196.2 L1852.7,1184.4 L1854.0,1173.0 L1855.3,1161.3 L1856.7,1149.5 L1858.0,1138.2 L1859.3,1126.6 L1860.6,1115.2 L1861.9,1103.5 L1863.2,1091.4 L1864.5,1080.0 L1866.0,1077.7 L1867.5,1075.9 L1869.0,1101.9 L1870.5,1128.3 L1872.0,1153.2 L1873.5,1179.5 L1875.0,1205.3 L1876.5,1231.4 L1877.8,1231.4 L1879.2,1231.4 L1880.5,1231.0 L1880.5,1231.4 L1881.5,1231.4 L1882.8,1220.5 L1884.1,1209.6 L1885.4,1198.2 L1886.7,1187.3 L1888.0,1176.5 L1889.3,1164.7 L1890.7,1153.9 L1892.0,1143.3 L1893.3,1132.5 L1894.6,1121.5 L1895.9,1109.8 L1897.2,1099.4 L1898.5,1087.7 L1900.0,1086.0 L1901.5,1083.8 L1903.0,1108.8 L1904.5,1133.1 L1906.0,1157.9 L1907.5,1182.8 L1909.0,1206.5 L1910.5,1231.4 L1911.8,1231.4 L1913.2,1231.2 L1914.5,1230.9 L1914.5,1231.4 L1915.5,1231.4 L1916.8,1221.0 L1918.1,1210.0 L1919.4,1200.3 L1920.7,1189.3 L1922.0,1178.9 L1923.3,1168.5 L1924.7,1157.9 L1926.0,1147.9 L1927.3,1136.9 L1928.6,1126.6 L1929.9,1116.2 L1931.2,1105.9 L1932.5,1094.6 L1934.0,1092.9 L1935.5,1091.2" fill="none" stroke="#2e820e" stroke-width="2.4" stroke-linejoin="round"/><path d="M1334.5,1231.4 L1336.5,1231.4 L1337.5,1231.4 L1338.8,1221.0 L1340.2,1211.6 L1341.5,1202.0 L1342.8,1192.0 L1344.2,1180.6 L1345.5,1171.4 L1347.0,1168.9 L1348.5,1166.1 L1350.0,1164.5 L1351.5,1161.2 L1353.0,1158.5 L1354.5,1156.9 L1356.0,1143.1 L1357.5,1129.3 L1359.0,1116.2 L1360.5,1103.3 L1361.9,1099.5 L1363.3,1097.5 L1364.7,1094.7 L1366.1,1091.1 L1367.5,1088.9 L1368.5,1231.4 L1370.5,1231.4 L1370.5,1231.4 L1371.5,1230.7 L1372.8,1219.5 L1374.2,1210.0 L1375.5,1197.7 L1376.8,1186.4 L1378.2,1176.5 L1379.5,1165.2 L1381.0,1161.5 L1382.5,1159.3 L1384.0,1156.7 L1385.5,1154.2 L1387.0,1151.2 L1388.5,1149.6 L1390.0,1138.4 L1391.5,1127.7 L1393.0,1116.5 L1394.5,1105.5 L1395.9,1102.3 L1397.3,1100.8 L1398.7,1097.6 L1400.1,1094.2 L1401.5,1090.4 L1402.5,1230.8 L1404.5,1230.7 L1404.5,1231.1 L1405.5,1230.6 L1406.8,1218.6 L1408.2,1206.0 L1409.5,1193.6 L1410.8,1182.0 L1412.2,1169.2 L1413.5,1156.8 L1415.0,1154.1 L1416.5,1151.9 L1418.0,1149.8 L1419.5,1146.5 L1421.0,1143.5 L1422.5,1141.7 L1424.0,1132.5 L1425.5,1124.1 L1427.0,1113.8 L1428.5,1106.1 L1429.9,1101.5 L1431.3,1099.4 L1432.7,1096.2 L1434.1,1093.0 L1435.5,1091.0 L1436.5,1231.4 L1438.5,1230.8 L1438.5,1231.4 L1439.5,1231.4 L1440.8,1220.5 L1442.2,1210.6 L1443.5,1201.5 L1444.8,1191.7 L1446.2,1181.2 L1447.5,1171.1 L1449.0,1168.8 L1450.5,1165.8 L1452.0,1164.4 L1453.5,1162.0 L1455.0,1158.7 L1456.5,1155.3 L1458.0,1143.9 L1459.5,1132.6 L1461.0,1119.7 L1462.5,1107.3 L1463.9,1104.4 L1465.3,1102.3 L1466.7,1099.1 L1468.1,1095.5 L1469.5,1093.1 L1470.5,1231.4 L1472.5,1231.4 L1472.5,1231.4 L1473.5,1231.3 L1474.8,1222.8 L1476.2,1213.9 L1477.5,1204.7 L1478.8,1195.4 L1480.2,1186.0 L1481.5,1176.7 L1483.0,1174.8 L1484.5,1171.9 L1486.0,1169.6 L1487.5,1166.2 L1489.0,1163.4 L1490.5,1161.2 L1492.0,1147.5 L1493.5,1133.2 L1495.0,1118.3 L1496.5,1104.0 L1497.9,1102.3 L1499.3,1097.7 L1500.7,1096.3 L1502.1,1093.0 L1503.5,1089.6 L1504.5,1231.4 L1506.5,1231.4 L1506.5,1230.5 L1507.5,1231.4 L1508.8,1219.3 L1510.2,1208.2 L1511.5,1196.0 L1512.8,1182.8 L1514.2,1170.7 L1515.5,1158.7 L1517.0,1157.5 L1518.5,1155.0 L1520.0,1151.5 L1521.5,1148.8 L1523.0,1146.7 L1524.5,1145.0 L1526.0,1129.0 L1527.5,1113.3 L1529.0,1097.7 L1530.5,1081.4 L1531.9,1078.5 L1533.3,1074.0 L1534.7,1071.0 L1536.1,1069.5 L1537.5,1066.1 L1538.5,1231.1 L1540.5,1230.7 L1540.5,1231.1 L1541.5,1231.1 L1542.8,1220.8 L1544.2,1210.2 L1545.5,1199.2 L1546.8,1188.4 L1548.2,1178.1 L1549.5,1167.4 L1551.0,1164.9 L1552.5,1162.9 L1554.0,1159.9 L1555.5,1158.6 L1557.0,1155.6 L1558.5,1152.9 L1560.0,1142.1 L1561.5,1130.1 L1563.0,1118.5 L1564.5,1107.4 L1565.9,1104.9 L1567.3,1101.9 L1568.7,1098.7 L1570.1,1095.8 L1571.5,1093.7 L1572.5,1230.5 L1574.5,1231.3 L1574.5,1231.2 L1575.5,1231.0 L1576.8,1220.1 L1578.2,1207.4 L1579.5,1195.4 L1580.8,1183.8 L1582.2,1173.6 L1583.5,1160.7 L1585.0,1157.7 L1586.5,1156.8 L1588.0,1153.7 L1589.5,1151.7 L1591.0,1148.1 L1592.5,1146.4 L1594.0,1132.0 L1595.5,1119.4 L1597.0,1107.4 L1598.5,1094.0 L1599.9,1091.4 L1601.3,1087.7 L1602.7,1085.5 L1604.1,1081.1 L1605.5,1079.0 L1606.5,1230.8 L1608.5,1230.9 L1608.5,1231.4 L1609.5,1231.3 L1610.8,1219.5 L1612.2,1206.0 L1613.5,1194.4 L1614.8,1182.2 L1616.2,1169.2 L1617.5,1156.0 L1619.0,1154.3 L1620.5,1152.3 L1622.0,1149.5 L1623.5,1146.3 L1625.0,1143.7 L1626.5,1140.7 L1628.0,1128.5 L1629.5,1114.0 L1631.0,1100.8 L1632.5,1087.1 L1633.9,1084.3 L1635.3,1081.7 L1636.7,1078.8 L1638.1,1075.3 L1639.5,1072.7 L1640.5,1231.4 L1642.5,1230.7 L1642.5,1230.7 L1643.5,1231.4 L1644.8,1220.5 L1646.2,1209.0 L1647.5,1196.7 L1648.8,1184.3 L1650.2,1174.1 L1651.5,1162.7 L1653.0,1160.0 L1654.5,1156.9 L1656.0,1154.1 L1657.5,1151.9 L1659.0,1149.8 L1660.5,1147.6 L1662.0,1131.9 L1663.5,1117.1 L1665.0,1101.9 L1666.5,1087.5 L1667.9,1084.4 L1669.3,1081.0 L1670.7,1078.3 L1672.1,1076.1 L1673.5,1071.8 L1674.5,1231.0 L1676.5,1231.0 L1676.5,1231.4 L1677.5,1231.0 L1678.8,1223.0 L1680.2,1214.3 L1681.5,1205.2 L1682.8,1196.1 L1684.2,1186.1 L1685.5,1177.6 L1687.0,1175.7 L1688.5,1172.2 L1690.0,1170.3 L1691.5,1168.3 L1693.0,1165.9 L1694.5,1162.3 L1696.0,1146.2 L1697.5,1130.3 L1699.0,1115.1 L1700.5,1099.9 L1701.9,1096.4 L1703.3,1094.3 L1704.7,1091.0 L1706.1,1087.9 L1707.5,1085.3 L1708.5,1231.1 L1710.5,1231.4 L1710.5,1231.1 L1711.5,1231.0 L1712.8,1219.3 L1714.2,1209.1 L1715.5,1197.9 L1716.8,1184.9 L1718.2,1174.8 L1719.5,1162.2 L1721.0,1160.3 L1722.5,1157.6 L1724.0,1156.1 L1725.5,1152.8 L1727.0,1150.4 L1728.5,1147.6 L1730.0,1137.7 L1731.5,1127.9 L1733.0,1117.9 L1734.5,1108.0 L1735.9,1106.0 L1737.3,1103.3 L1738.7,1100.2 L1740.1,1096.4 L1741.5,1094.7 L1742.5,1230.6 L1744.5,1231.3 L1744.5,1231.1 L1745.5,1230.8 L1746.8,1223.1 L1748.2,1213.5 L1749.5,1203.3 L1750.8,1194.2 L1752.2,1186.2 L1753.5,1176.2 L1755.0,1173.6 L1756.5,1171.1 L1758.0,1168.6 L1759.5,1166.6 L1761.0,1163.5 L1762.5,1161.5 L1764.0,1141.5 L1765.5,1123.3 L1767.0,1104.3 L1768.5,1084.8 L1769.9,1082.8 L1771.3,1079.9 L1772.7,1076.3 L1774.1,1072.9 L1775.5,1069.4 L1776.5,1231.4 L1778.5,1231.0 L1778.5,1230.8 L1779.5,1231.4 L1780.8,1221.8 L1782.2,1213.6 L1783.5,1204.7 L1784.8,1194.3 L1786.2,1186.4 L1787.5,1176.6 L1789.0,1174.3 L1790.5,1172.5 L1792.0,1170.4 L1793.5,1166.7 L1795.0,1165.0 L1796.5,1161.8 L1798.0,1146.3 L1799.5,1128.5 L1801.0,1112.9 L1802.5,1095.3 L1803.9,1093.1 L1805.3,1090.5 L1806.7,1087.7 L1808.1,1084.5 L1809.5,1081.0 L1810.5,1231.2 L1812.5,1231.4 L1812.5,1231.4 L1813.5,1231.4 L1814.8,1222.6 L1816.2,1213.6 L1817.5,1204.8 L1818.8,1195.1 L1820.2,1186.4 L1821.5,1177.0 L1823.0,1173.8 L1824.5,1172.1 L1826.0,1168.8 L1827.5,1167.1 L1829.0,1164.7 L1830.5,1162.2 L1832.0,1142.5 L1833.5,1122.4 L1835.0,1102.4 L1836.5,1082.3 L1837.9,1079.9 L1839.3,1077.3 L1840.7,1073.4 L1842.1,1070.1 L1843.5,1068.0 L1844.5,1231.4 L1846.5,1230.9 L1846.5,1230.8 L1847.5,1230.7 L1848.8,1222.2 L1850.2,1213.4 L1851.5,1203.0 L1852.8,1194.6 L1854.2,1184.0 L1855.5,1175.0 L1857.0,1173.0 L1858.5,1170.9 L1860.0,1167.9 L1861.5,1165.7 L1863.0,1162.6 L1864.5,1160.2 L1866.0,1146.0 L1867.5,1130.6 L1869.0,1116.6 L1870.5,1102.4 L1871.9,1100.0 L1873.3,1096.1 L1874.7,1093.2 L1876.1,1091.5 L1877.5,1087.9 L1878.5,1231.2 L1880.5,1231.4 L1880.5,1231.4 L1881.5,1231.4 L1882.8,1219.1 L1884.2,1206.8 L1885.5,1193.4 L1886.8,1181.6 L1888.2,1169.1 L1889.5,1156.4 L1891.0,1154.1 L1892.5,1152.5 L1894.0,1148.8 L1895.5,1146.1 L1897.0,1144.0 L1898.5,1141.1 L1900.0,1131.3 L1901.5,1123.4 L1903.0,1113.2 L1904.5,1102.7 L1905.9,1100.6 L1907.3,1096.9 L1908.7,1094.5 L1910.1,1092.3 L1911.5,1089.3 L1912.5,1231.2 L1914.5,1231.4 L1914.5,1231.4 L1915.5,1230.6 L1916.8,1220.1 L1918.2,1209.8 L1919.5,1198.7 L1920.8,1187.5 L1922.2,1176.9 L1923.5,1164.7 L1925.0,1162.8 L1926.5,1160.5 L1928.0,1158.1 L1929.5,1155.5 L1931.0,1153.0 L1932.5,1149.8" fill="none" stroke="#5a0a86" stroke-width="2.4" stroke-linejoin="round"/><path d="M1334.5,1231.4 L1336.5,1231.4 L1338.0,1231.4 L1339.5,1208.1 L1341.0,1184.2 L1342.5,1159.5 L1343.8,1160.2 L1345.2,1159.1 L1346.5,1158.8 L1347.8,1158.2 L1349.2,1158.7 L1350.5,1157.9 L1351.8,1157.9 L1353.2,1158.2 L1354.5,1158.2 L1355.8,1129.6 L1357.2,1100.0 L1358.5,1071.4 L1360.0,1098.3 L1361.5,1125.3 L1363.0,1152.3 L1364.5,1178.8 L1366.0,1205.5 L1367.5,1231.4 L1369.0,1231.4 L1370.5,1231.1 L1370.5,1231.1 L1372.0,1230.9 L1373.5,1209.1 L1375.0,1186.8 L1376.5,1164.4 L1377.8,1163.9 L1379.2,1163.7 L1380.5,1163.2 L1381.8,1163.9 L1383.2,1163.3 L1384.5,1163.4 L1385.8,1163.3 L1387.2,1162.2 L1388.5,1161.7 L1389.8,1129.8 L1391.2,1098.5 L1392.5,1066.1 L1394.0,1093.1 L1395.5,1121.3 L1397.0,1148.3 L1398.5,1176.7 L1400.0,1203.1 L1401.5,1231.4 L1403.0,1231.4 L1404.5,1231.3 L1404.5,1231.3 L1406.0,1230.8 L1407.5,1212.0 L1409.0,1192.9 L1410.5,1173.9 L1411.8,1173.3 L1413.2,1173.5 L1414.5,1173.0 L1415.8,1173.4 L1417.2,1173.0 L1418.5,1172.5 L1419.8,1173.5 L1421.2,1172.3 L1422.5,1172.4 L1423.8,1137.5 L1425.2,1101.8 L1426.5,1066.6 L1428.0,1093.6 L1429.5,1121.7 L1431.0,1147.9 L1432.5,1176.6 L1434.0,1203.6 L1435.5,1231.1 L1437.0,1231.4 L1438.5,1231.4 L1438.5,1231.1 L1440.0,1231.2 L1441.5,1211.0 L1443.0,1192.0 L1444.5,1171.5 L1445.8,1170.7 L1447.2,1171.0 L1448.5,1170.0 L1449.8,1170.1 L1451.2,1170.3 L1452.5,1170.8 L1453.8,1170.4 L1455.2,1169.7 L1456.5,1169.9 L1457.8,1138.2 L1459.2,1108.0 L1460.5,1077.6 L1462.0,1102.0 L1463.5,1129.1 L1465.0,1154.9 L1466.5,1179.7 L1468.0,1206.1 L1469.5,1231.4 L1471.0,1230.8 L1472.5,1231.3 L1472.5,1231.4 L1474.0,1231.4 L1475.5,1210.9 L1477.0,1191.6 L1478.5,1171.5 L1479.8,1171.5 L1481.2,1171.1 L1482.5,1171.1 L1483.8,1170.5 L1485.2,1170.2 L1486.5,1169.8 L1487.8,1169.5 L1489.2,1169.4 L1490.5,1169.3 L1491.8,1135.4 L1493.2,1101.3 L1494.5,1068.0 L1496.0,1096.1 L1497.5,1122.3 L1499.0,1150.6 L1500.5,1177.5 L1502.0,1204.1 L1503.5,1230.9 L1505.0,1231.4 L1506.5,1231.4 L1506.5,1231.1 L1508.0,1231.4 L1509.5,1212.5 L1511.0,1192.9 L1512.5,1172.7 L1513.8,1172.7 L1515.2,1173.3 L1516.5,1172.9 L1517.8,1172.8 L1519.2,1171.9 L1520.5,1172.7 L1521.8,1172.3 L1523.2,1171.6 L1524.5,1172.0 L1525.8,1135.9 L1527.2,1101.0 L1528.5,1065.7 L1530.0,1094.0 L1531.5,1121.6 L1533.0,1148.3 L1534.5,1176.6 L1536.0,1203.4 L1537.5,1231.4 L1539.0,1231.4 L1540.5,1231.4 L1540.5,1230.7 L1542.0,1231.1 L1543.5,1211.4 L1545.0,1192.5 L1546.5,1172.2 L1547.8,1172.1 L1549.2,1171.9 L1550.5,1172.9 L1551.8,1172.3 L1553.2,1172.5 L1554.5,1172.4 L1555.8,1171.6 L1557.2,1171.9 L1558.5,1171.0 L1559.8,1140.4 L1561.2,1108.9 L1562.5,1078.5 L1564.0,1103.4 L1565.5,1129.4 L1567.0,1155.7 L1568.5,1181.2 L1570.0,1206.3 L1571.5,1230.7 L1573.0,1231.4 L1574.5,1231.4 L1574.5,1231.4 L1576.0,1231.3 L1577.5,1210.2 L1579.0,1187.8 L1580.5,1165.8 L1581.8,1166.1 L1583.2,1165.5 L1584.5,1165.3 L1585.8,1165.1 L1587.2,1165.7 L1588.5,1165.4 L1589.8,1164.5 L1591.2,1165.0 L1592.5,1163.7 L1593.8,1136.8 L1595.2,1107.4 L1596.5,1079.4 L1598.0,1104.5 L1599.5,1130.6 L1601.0,1155.3 L1602.5,1180.2 L1604.0,1206.6 L1605.5,1231.4 L1607.0,1231.0 L1608.5,1231.4 L1608.5,1231.4 L1610.0,1231.4 L1611.5,1207.7 L1613.0,1182.8 L1614.5,1158.4 L1615.8,1157.9 L1617.2,1159.1 L1618.5,1157.8 L1619.8,1157.8 L1621.2,1158.3 L1622.5,1157.0 L1623.8,1158.1 L1625.2,1157.3 L1626.5,1156.4 L1627.8,1130.7 L1629.2,1103.7 L1630.5,1075.9 L1632.0,1102.4 L1633.5,1128.5 L1635.0,1153.6 L1636.5,1179.5 L1638.0,1206.2 L1639.5,1230.8 L1641.0,1231.0 L1642.5,1230.8 L1642.5,1231.4 L1644.0,1231.3 L1645.5,1209.2 L1647.0,1187.1 L1648.5,1165.3 L1649.8,1166.1 L1651.2,1165.6 L1652.5,1165.7 L1653.8,1164.4 L1655.2,1165.5 L1656.5,1164.9 L1657.8,1164.5 L1659.2,1164.7 L1660.5,1163.3 L1661.8,1136.1 L1663.2,1107.5 L1664.5,1079.0 L1666.0,1105.5 L1667.5,1129.6 L1669.0,1156.0 L1670.5,1180.5 L1672.0,1206.7 L1673.5,1230.7 L1675.0,1231.4 L1676.5,1231.4 L1676.5,1231.4 L1678.0,1231.4 L1679.5,1209.4 L1681.0,1187.6 L1682.5,1165.3 L1683.8,1164.8 L1685.2,1164.7 L1686.5,1165.3 L1687.8,1164.3 L1689.2,1164.7 L1690.5,1164.9 L1691.8,1164.6 L1693.2,1164.3 L1694.5,1164.2 L1695.8,1130.4 L1697.2,1096.8 L1698.5,1062.7 L1700.0,1090.6 L1701.5,1119.0 L1703.0,1147.3 L1704.5,1175.3 L1706.0,1202.6 L1707.5,1231.4 L1709.0,1231.2 L1710.5,1231.2 L1710.5,1230.7 L1712.0,1231.4 L1713.5,1207.3 L1715.0,1182.7 L1716.5,1157.1 L1717.8,1156.7 L1719.2,1158.0 L1720.5,1157.2 L1721.8,1157.6 L1723.2,1156.5 L1724.5,1156.9 L1725.8,1155.6 L1727.2,1155.3 L1728.5,1156.1 L1729.8,1130.4 L1731.2,1104.2 L1732.5,1078.8 L1734.0,1104.4 L1735.5,1129.2 L1737.0,1154.3 L1738.5,1180.5 L1740.0,1205.6 L1741.5,1231.4 L1743.0,1230.9 L1744.5,1231.4 L1744.5,1231.0 L1746.0,1231.3 L1747.5,1210.2 L1749.0,1189.5 L1750.5,1169.5 L1751.8,1169.3 L1753.2,1169.0 L1754.5,1169.3 L1755.8,1169.0 L1757.2,1168.1 L1758.5,1168.5 L1759.8,1168.0 L1761.2,1167.9 L1762.5,1166.9 L1763.8,1134.7 L1765.2,1101.0 L1766.5,1066.8 L1768.0,1093.9 L1769.5,1121.8 L1771.0,1149.6 L1772.5,1176.4 L1774.0,1203.9 L1775.5,1231.4 L1777.0,1231.0 L1778.5,1230.7 L1778.5,1231.3 L1780.0,1231.2 L1781.5,1209.1 L1783.0,1185.8 L1784.5,1164.5 L1785.8,1164.5 L1787.2,1163.9 L1788.5,1163.3 L1789.8,1162.6 L1791.2,1162.1 L1792.5,1162.9 L1793.8,1163.2 L1795.2,1161.9 L1796.5,1162.5 L1797.8,1135.4 L1799.2,1107.8 L1800.5,1080.0 L1802.0,1105.5 L1803.5,1130.1 L1805.0,1155.7 L1806.5,1180.5 L1808.0,1206.6 L1809.5,1231.0 L1811.0,1231.4 L1812.5,1231.4 L1812.5,1231.0 L1814.0,1230.8 L1815.5,1212.8 L1817.0,1193.3 L1818.5,1174.8 L1819.8,1175.0 L1821.2,1173.9 L1822.5,1173.4 L1823.8,1173.9 L1825.2,1173.9 L1826.5,1173.4 L1827.8,1172.4 L1829.2,1172.9 L1830.5,1172.9 L1831.8,1139.9 L1833.2,1105.3 L1834.5,1071.9 L1836.0,1098.5 L1837.5,1125.6 L1839.0,1151.4 L1840.5,1178.8 L1842.0,1204.9 L1843.5,1231.4 L1845.0,1230.8 L1846.5,1231.4 L1846.5,1231.4 L1848.0,1231.3 L1849.5,1206.8 L1851.0,1183.2 L1852.5,1158.8 L1853.8,1158.3 L1855.2,1158.4 L1856.5,1157.2 L1857.8,1158.0 L1859.2,1157.4 L1860.5,1157.3 L1861.8,1157.2 L1863.2,1155.9 L1864.5,1155.5 L1865.8,1129.4 L1867.2,1104.5 L1868.5,1077.6 L1870.0,1102.4 L1871.5,1129.1 L1873.0,1155.0 L1874.5,1179.7 L1876.0,1205.8 L1877.5,1231.0 L1879.0,1231.4 L1880.5,1231.1 L1880.5,1231.1 L1882.0,1231.4 L1883.5,1212.7 L1885.0,1194.1 L1886.5,1173.9 L1887.8,1174.9 L1889.2,1173.7 L1890.5,1173.6 L1891.8,1173.3 L1893.2,1173.0 L1894.5,1173.0 L1895.8,1173.3 L1897.2,1173.3 L1898.5,1173.2 L1899.8,1135.9 L1901.2,1099.4 L1902.5,1062.8 L1904.0,1091.5 L1905.5,1119.1 L1907.0,1146.7 L1908.5,1175.1 L1910.0,1203.9 L1911.5,1231.4 L1913.0,1231.4 L1914.5,1231.1 L1914.5,1231.4 L1916.0,1231.3 L1917.5,1207.8 L1919.0,1184.3 L1920.5,1161.2 L1921.8,1161.0 L1923.2,1160.6 L1924.5,1160.6 L1925.8,1160.4 L1927.2,1160.1 L1928.5,1159.6 L1929.8,1159.5 L1931.2,1159.6 L1932.5,1160.2 L1933.8,1131.7 L1935.2,1106.3 L1936.5,1078.6" fill="none" stroke="#2e820e" stroke-width="2.4" stroke-linejoin="round"/><line x1="1334" y1="1061.9" x2="1334" y2="1231.4" stroke="#b4d8fb" stroke-width="2"/><line x1="1322.6" y1="1061.9" x2="1334" y2="1061.9" stroke="#b4d8fb" stroke-width="2"/><line x1="1322.6" y1="1080.4" x2="1334" y2="1080.4" stroke="#b4d8fb" stroke-width="2"/><line x1="1322.6" y1="1118.1" x2="1334" y2="1118.1" stroke="#b4d8fb" stroke-width="2"/><line x1="1322.6" y1="1155.9" x2="1334" y2="1155.9" stroke="#b4d8fb" stroke-width="2"/><line x1="1322.6" y1="1193.6" x2="1334" y2="1193.6" stroke="#b4d8fb" stroke-width="2"/><line x1="1322.6" y1="1231.4" x2="1334" y2="1231.4" stroke="#b4d8fb" stroke-width="2"/><line x1="1334" y1="1239.4" x2="1938" y2="1239.4" stroke="#333" stroke-width="2.2"/><line x1="1334.5" y1="1239.4" x2="1334.5" y2="1246.5" stroke="#333" stroke-width="2"/><line x1="1394.3" y1="1239.4" x2="1394.3" y2="1246.5" stroke="#333" stroke-width="2"/><line x1="1469.4" y1="1239.4" x2="1469.4" y2="1246.5" stroke="#333" stroke-width="2"/><line x1="1544.8" y1="1239.4" x2="1544.8" y2="1246.5" stroke="#333" stroke-width="2"/><line x1="1620.5" y1="1239.4" x2="1620.5" y2="1246.5" stroke="#333" stroke-width="2"/><line x1="1695.6" y1="1239.4" x2="1695.6" y2="1246.5" stroke="#333" stroke-width="2"/><line x1="1771.3" y1="1239.4" x2="1771.3" y2="1246.5" stroke="#333" stroke-width="2"/><line x1="1846.4" y1="1239.4" x2="1846.4" y2="1246.5" stroke="#333" stroke-width="2"/><line x1="1921.5" y1="1239.4" x2="1921.5" y2="1246.5" stroke="#333" stroke-width="2"/><line x1="1937.4" y1="1239.4" x2="1937.4" y2="1246.5" stroke="#333" stroke-width="2"/></svg>
<div class="t" style="top:1052.1px;font-size:19.6px;color:#222;font-weight:400;font-family:'Liberation Sans', sans-serif;right:1444.5px;">44.9</div>
<div class="t" style="top:1070.6px;font-size:19.6px;color:#222;font-weight:400;font-family:'Liberation Sans', sans-serif;right:1444.5px;">40</div>
<div class="t" style="top:1108.3px;font-size:19.6px;color:#222;font-weight:400;font-family:'Liberation Sans', sans-serif;right:1444.5px;">30</div>
<div class="t" style="top:1146.1px;font-size:19.6px;color:#222;font-weight:400;font-family:'Liberation Sans', sans-serif;right:1444.5px;">20</div>
<div class="t" style="top:1183.8px;font-size:19.6px;color:#222;font-weight:400;font-family:'Liberation Sans', sans-serif;right:1444.5px;">10</div>
<div class="t" style="top:1221.6px;font-size:19.6px;color:#222;font-weight:400;font-family:'Liberation Sans', sans-serif;right:1444.5px;">0</div>
<div class="t" style="top:1250.9px;font-size:19.6px;color:#222;font-weight:400;font-family:'Liberation Sans', sans-serif;left:1094.3px;width:600px;text-align:center;">03 PM</div>
<div class="t" style="top:1250.9px;font-size:19.6px;color:#222;font-weight:400;font-family:'Liberation Sans', sans-serif;left:1169.4px;width:600px;text-align:center;">06 PM</div>
<div class="t" style="top:1250.9px;font-size:19.6px;color:#222;font-weight:400;font-family:'Liberation Sans', sans-serif;left:1244.8px;width:600px;text-align:center;">09 PM</div>
<div class="t" style="top:1250.9px;font-size:19.6px;color:#222;font-weight:400;font-family:'Liberation Sans', sans-serif;left:1320.5px;width:600px;text-align:center;">Mon, 19</div>
<div class="t" style="top:1250.9px;font-size:19.6px;color:#222;font-weight:400;font-family:'Liberation Sans', sans-serif;left:1395.6px;width:600px;text-align:center;">03 AM</div>
<div class="t" style="top:1250.9px;font-size:19.6px;color:#222;font-weight:400;font-family:'Liberation Sans', sans-serif;left:1471.3px;width:600px;text-align:center;">06 AM</div>
<div class="t" style="top:1250.9px;font-size:19.6px;color:#222;font-weight:400;font-family:'Liberation Sans', sans-serif;left:1546.4px;width:600px;text-align:center;">09 AM</div>
<div class="t" style="top:1250.9px;font-size:19.6px;color:#222;font-weight:400;font-family:'Liberation Sans', sans-serif;left:1621.5px;width:600px;text-align:center;">12 PM</div>
<div class="a" style="left:1446.5px;top:1059.9px;width:84.5px;height:31.1px;background:#e69abd;border-radius:5px;"></div>
<div class="t" style="top:1065.9px;font-size:19.0px;color:#fff;font-weight:400;font-family:'Liberation Sans', sans-serif;left:1188.8px;width:600px;text-align:center;">ACTIVE</div>
<div class="a" style="left:1436.0px;top:1196.8px;width:104.0px;height:31.2px;background:#e69abd;border-radius:5px;"></div>
<div class="t" style="top:1202.9px;font-size:19.0px;color:#fff;font-weight:400;font-family:'Liberation Sans', sans-serif;left:1188.0px;width:600px;text-align:center;">INACTIVE</div>
<div class="a" style="left:1568.0px;top:1059.8px;width:54.4px;height:31.8px;background:#2e820e;border-radius:5px;"></div>
<div class="t" style="top:1065.9px;font-size:19.5px;color:#fff;font-weight:400;font-family:'Liberation Sans', sans-serif;left:1295.2px;width:600px;text-align:center;">45.1</div>
<div class="a" style="left:1673.8px;top:1059.8px;width:54.4px;height:31.8px;background:#5a0a86;border-radius:5px;"></div>
<div class="t" style="top:1065.9px;font-size:19.5px;color:#fff;font-weight:400;font-family:'Liberation Sans', sans-serif;left:1401.0px;width:600px;text-align:center;">47.1</div>
<div class="a" style="left:1780.0px;top:1059.8px;width:54.5px;height:31.8px;background:#2e820e;border-radius:5px;"></div>
<div class="t" style="top:1065.9px;font-size:19.5px;color:#fff;font-weight:400;font-family:'Liberation Sans', sans-serif;left:1507.2px;width:600px;text-align:center;">54.2</div>
<div class="a" style="left:1581.3px;top:1196.7px;width:27.7px;height:31.3px;background:#2e820e;border-radius:5px;"></div>
<div class="t" style="top:1202.6px;font-size:19.5px;color:#fff;font-weight:400;font-family:'Liberation Sans', sans-serif;left:1295.2px;width:600px;text-align:center;">0</div>
<div class="a" style="left:1687.0px;top:1196.7px;width:27.6px;height:31.3px;background:#5a0a86;border-radius:5px;"></div>
<div class="t" style="top:1202.6px;font-size:19.5px;color:#fff;font-weight:400;font-family:'Liberation Sans', sans-serif;left:1400.8px;width:600px;text-align:center;">0</div>
<div class="a" style="left:1793.4px;top:1196.7px;width:27.5px;height:31.3px;background:#2e820e;border-radius:5px;"></div>
<div class="t" style="top:1202.6px;font-size:19.5px;color:#fff;font-weight:400;font-family:'Liberation Sans', sans-serif;left:1507.2px;width:600px;text-align:center;">0</div>
<div class="t" style="top:292.5px;font-size:45.1px;color:#1f2329;font-weight:700;font-family:'Liberation Sans', sans-serif;left:2038.0px;">Configuration</div>
<div class="t" style="top:378.9px;font-size:29.5px;color:#22262b;font-weight:400;font-family:'Liberation Sans', sans-serif;left:2038.0px;">Title</div>
<div class="t" style="top:381.6px;font-size:24.2px;color:#9b9b9b;font-weight:400;font-family:'Liberation Sans', sans-serif;right:133.6px;">Optional</div>
<div class="a" style="left:2038.0px;top:414.5px;width:590.0px;height:63.0px;background:#fff;border:2px solid #dedede;border-radius:6px;"></div>
<div class="t" style="top:432.8px;font-size:27.6px;color:#22262b;font-weight:400;font-family:'Liberation Sans', sans-serif;left:2061.8px;">RPM-B612</div>
<div class="t" style="top:538.5px;font-size:22.5px;color:#9b9b9b;font-weight:700;font-family:'Liberation Sans', sans-serif;left:2038.0px;">SELECT A CONTEXT VIEW</div>
<div class="a" style="left:2038.0px;top:593.5px;width:590.0px;height:2.0px;background:#e0e0e0;"></div>
<div class="t" style="top:629.5px;font-size:28.4px;color:#22262b;font-weight:400;font-family:'Liberation Sans', sans-serif;left:2038.0px;">View</div>
<div class="t" style="top:631.6px;font-size:24.2px;color:#9b9b9b;font-weight:400;font-family:'Liberation Sans', sans-serif;right:133.6px;">Optional</div>
<div class="a" style="left:2038.0px;top:666.5px;width:590.0px;height:63.0px;background:#fff;border:2px solid #dedede;border-radius:6px;"></div>
<svg class="a" style="left:2056.0px;top:682.0px;" width="34" height="31" viewBox="0 0 34 31"><rect x="0" y="0" width="34" height="7" fill="#9b9b9b"/><rect x="0" y="11" width="15" height="3.5" fill="#9b9b9b"/><rect x="19" y="11" width="15" height="3.5" fill="#9b9b9b"/><rect x="0" y="19" width="9" height="3.5" fill="#9b9b9b"/><rect x="12.5" y="19" width="9" height="3.5" fill="#9b9b9b"/><rect x="25" y="19" width="9" height="3.5" fill="#9b9b9b"/><rect x="0" y="27" width="4" height="3.5" fill="#9b9b9b"/><rect x="7.5" y="27" width="4" height="3.5" fill="#9b9b9b"/><rect x="15" y="27" width="4" height="3.5" fill="#9b9b9b"/><rect x="22.5" y="27" width="4" height="3.5" fill="#9b9b9b"/><rect x="30" y="27" width="4" height="3.5" fill="#9b9b9b"/></svg>
<div class="t" style="top:683.9px;font-size:27.9px;color:#22262b;font-weight:400;font-family:'Liberation Sans', sans-serif;left:2106.4px;">My rpm</div>
<div class="t" style="top:684.4px;font-size:26.4px;color:#0b5cbf;font-weight:400;font-family:'Liberation Sans', sans-serif;left:2517.4px;">Choose</div>
<div class="t" style="top:765.7px;font-size:26.4px;color:#22262b;font-weight:400;font-family:'Liberation Sans', sans-serif;left:2037.9px;">Display as</div>
<div class="a" style="left:2038.5px;top:800.5px;width:589.5px;height:63.0px;background:#fff;border:2px solid #dedede;border-radius:6px;"></div>
<div class="t" style="top:817.1px;font-size:26.5px;color:#22262b;font-weight:400;font-family:'Liberation Sans', sans-serif;left:2064.0px;">Table</div>
<svg class="a" style="left:2590.5px;top:826.0px;" width="13.5" height="10.5" viewBox="0 0 13.5 10.5"><path d="M0,0 H13.5 L6.75,10.5 Z" fill="#9b9b9b"/></svg>
<div class="t" style="top:894.4px;font-size:21.8px;color:#9b9b9b;font-weight:700;font-family:'Liberation Sans', sans-serif;left:2038.0px;">TILE SETTINGS</div>
<div class="a" style="left:2038.0px;top:949.5px;width:590.0px;height:2.0px;background:#e0e0e0;"></div>
<svg class="a" style="left:2026.0px;top:970.0px;" width="618" height="224" viewBox="0 0 618 224"><rect x="2" y="2" width="614" height="220" fill="none" stroke="#7410f5" stroke-width="4" stroke-dasharray="24 8.5" stroke-dashoffset="12"/></svg>
<div class="a" style="left:2038.5px;top:984.5px;width:589.5px;height:191.5px;background:#fff;border:2px solid #dedede;border-radius:6px;"></div>
<div class="a" style="left:2048.0px;top:994.0px;width:4.0px;height:172.0px;background:#0b5cbf;border-radius:2px;"></div>
<div class="t" style="top:1019.4px;font-size:25.5px;color:#1f2329;font-weight:700;font-family:'Liberation Sans', sans-serif;left:2080.5px;">Tile settings disabled</div>
<div class="t" style="top:1066.3px;font-size:27.7px;color:#555;font-weight:400;font-family:'Liberation Sans', sans-serif;left:2080.5px;">Individual tile settings are overridden by</div>
<div class="t" style="top:1105.7px;font-size:27.7px;color:#555;font-weight:400;font-family:'Liberation Sans', sans-serif;left:2080.5px;">the<span style="color:#0b5cbf">current dashboard settings</span>.</div>
<div class="a" style="left:1988.5px;top:922.5px;width:31.0px;height:103.0px;background:#fff;border:2px solid #dedede;border-radius:8px;"></div>
<div class="a" style="left:1990.0px;top:993.8px;width:28.0px;height:2.0px;background:#e0e0e0;"></div>
<div class="a" style="left:2000.0px;top:936.0px;width:2.5px;height:44.0px;background:#8f8f8f;"></div>
<div class="a" style="left:2006.0px;top:936.0px;width:2.5px;height:44.0px;background:#8f8f8f;"></div>
<svg class="a" style="left:1999.5px;top:1005.5px;" width="9" height="9" viewBox="0 0 9 9"><path d="M0,0 L9,9 M9,0 L0,9" stroke="#444" stroke-width="1.6"/></svg>
<div class="t" style="top:1210.0px;font-size:28.1px;color:#22262b;font-weight:400;font-family:'Liberation Sans', sans-serif;left:2038.0px;">Show tile title</div>
<div class="t" style="top:1288.4px;font-size:27.1px;color:#22262b;font-weight:400;font-family:'Liberation Sans', sans-serif;left:2038.0px;">Show time frame</div>
<div class="a" style="left:2548.5px;top:1206.2px;width:79.0px;height:47.4px;background:#f3f4f5;border:2px solid #ececec;border-radius:24px;"></div>
<div class="a" style="left:2555.5px;top:1214.2px;width:32.0px;height:32.0px;background:#fff;border-radius:50%;"></div>
<div class="a" style="left:2548.5px;top:1284.2px;width:79.0px;height:47.4px;background:#f3f4f5;border:2px solid #ececec;border-radius:24px;"></div>
<div class="a" style="left:2555.5px;top:1292.2px;width:32.0px;height:32.0px;background:#fff;border-radius:50%;"></div>
<div class="t" style="top:1392.5px;font-size:21.6px;color:#9b9b9b;font-weight:700;font-family:'Liberation Sans', sans-serif;left:2038.0px;">REFRESH SETTINGS</div>
<div class="a" style="left:2038.0px;top:1448.0px;width:590.0px;height:2.0px;background:#e0e0e0;"></div>
<div class="a" style="left:2038.5px;top:1480.5px;width:589.5px;height:63.0px;background:#fff;border:2px solid #dedede;border-radius:6px;"></div>
<div class="t" style="top:1496.3px;font-size:28.2px;color:#22262b;font-weight:400;font-family:'Liberation Sans', sans-serif;left:2060.0px;">00h05m00s</div>
</body></html>
